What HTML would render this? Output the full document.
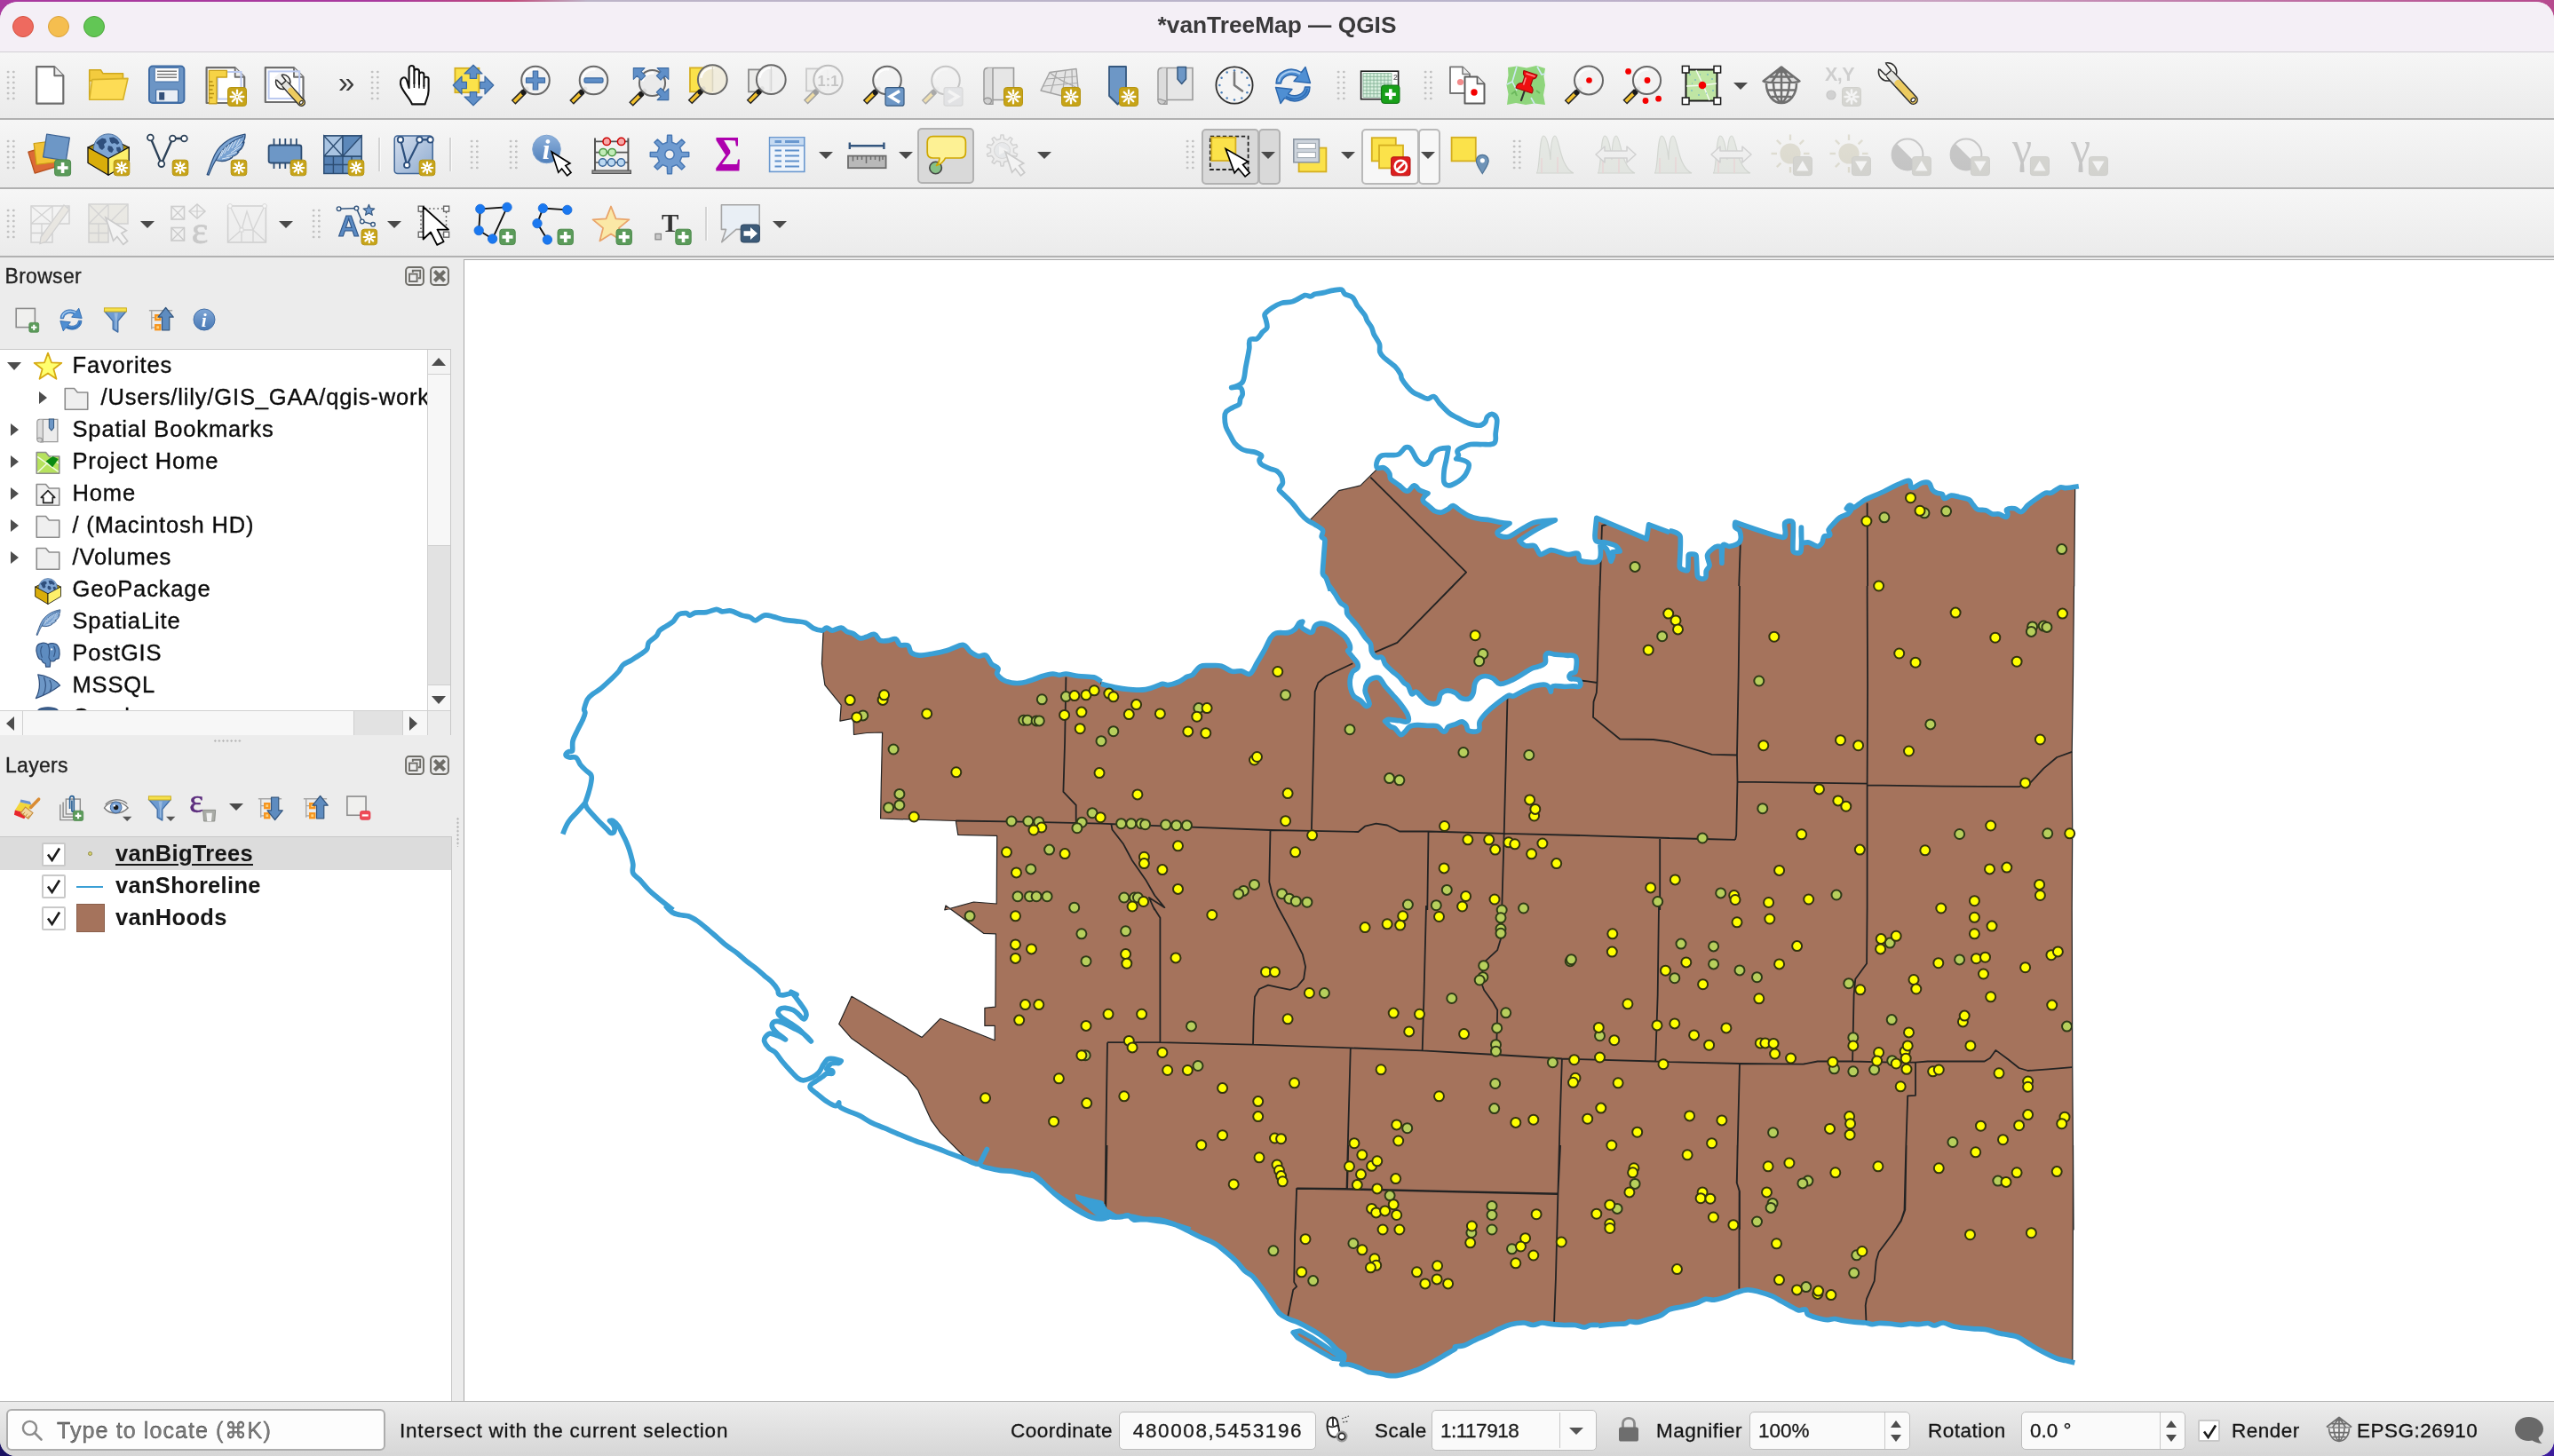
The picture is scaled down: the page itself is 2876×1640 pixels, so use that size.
<!DOCTYPE html>
<html><head><meta charset="utf-8"><title>*vanTreeMap — QGIS</title>
<style>
html,body{margin:0;padding:0;}
body{width:2876px;height:1640px;overflow:hidden;position:relative;font-family:"Liberation Sans",sans-serif;color:#1e1e1e;
 background:linear-gradient(90deg,#a9399f 0,#a9399f 15%,#c04a7a 20%,#bdb4c8 23%,#b9b4cc 60%,#c9a0c0 76%,#b64a8e 100%);}
#deskb{position:absolute;left:0;top:1600px;width:2876px;height:40px;background:linear-gradient(90deg,#1a1262,#2a2380 50%,#3c1c9c);}
#win{will-change:transform;position:absolute;left:0;top:2px;width:2876px;height:1638px;border-radius:20px 20px 18px 18px;overflow:hidden;background:#ececec;}
.abs{position:absolute;}
#title{left:0;top:0;width:2876px;height:56px;background:#f4eff6;border-bottom:1px solid #d2cfd4;}
#title .t{position:absolute;left:0;width:2876px;top:11px;text-align:center;font-weight:bold;font-size:26.3px;color:#3a393b}
.tl{position:absolute;top:16px;width:22px;height:22px;border-radius:50%;border:1px solid;}
.tbrow{left:0;width:2876px;background:linear-gradient(#f6f6f6,#ebebeb);border-bottom:2px solid #b1b1b1;}
.ic{position:absolute;width:48px;height:48px;}
.ic svg{width:48px;height:48px;display:block;overflow:visible}
.hd{position:absolute;width:12.4px;height:36px;background-image:radial-gradient(circle,#c2c2c2 1.2px,transparent 1.7px);background-size:6.2px 6px;}
.arr{position:absolute;width:0;height:0;border-left:8px solid transparent;border-right:8px solid transparent;border-top:8px solid #4a4a4a;}
.sep{position:absolute;width:2px;height:38px;background:#d4d4d4;border-right:1px solid #fafafa}
.btnon{position:absolute;border:2px solid #b2b2b2;border-radius:5px;background:#d9d9d9;}
.btnwh{position:absolute;border:2px solid #b9b9b9;border-radius:5px;background:#f7f7f7;}
.ptitle{position:absolute;font-size:21.5px;color:#222;-webkit-text-stroke:.3px #222}
.tree{position:absolute;background:#fff;overflow:hidden;}
.trow{position:absolute;left:0;height:36px;line-height:36px;font-size:25.5px;white-space:nowrap;color:#0c0c0c;-webkit-text-stroke:.35px #0c0c0c}
.tri{position:absolute;width:0;height:0;}
.tri.r{border-top:7.5px solid transparent;border-bottom:7.5px solid transparent;border-left:9px solid #4d4d4d;}
.tri.d{border-left:8px solid transparent;border-right:8px solid transparent;border-top:9px solid #4d4d4d;}
.lrow{position:absolute;left:0;width:508px;height:36px;}
.lrow b{position:absolute;left:130px;top:0;line-height:37px;font-size:25.5px;color:#161616;letter-spacing:.3px}
.cb{position:absolute;width:23px;height:23px;border:2px solid #c9c9c9;background:#fff;border-radius:2px;}
.cb svg{position:absolute;left:1px;top:1px;width:21px;height:21px}
#status{left:0;top:1576px;width:2876px;height:62px;background:linear-gradient(#ececec,#d6d6d6);border-top:1px solid #b4b4b4;font-size:22.5px;}
#status .lb{position:absolute;top:20px;white-space:nowrap;color:#141414;-webkit-text-stroke:.3px #141414}
.fld{position:absolute;top:11px;height:43px;border:1.5px solid #bdbdbd;border-radius:5px;background:#fafafa;box-sizing:border-box;font-size:22.5px;line-height:42px;white-space:nowrap;color:#1a1a1a;-webkit-text-stroke:.3px #1a1a1a}
</style></head><body>
<div id="deskb"></div>
<div id="win">
<div class="abs" style="left:0;top:-2px;width:2876px;height:1640px">
<div id="title" class="abs" style="top:2px"><div class="t">*vanTreeMap — QGIS</div><div class="tl" style="left:14px;top:16px;background:#ee6a5f;border-color:#d5513f"></div><div class="tl" style="left:54px;top:16px;background:#f5be4f;border-color:#d9a13b"></div><div class="tl" style="left:94px;top:16px;background:#62c655;border-color:#4ba53a"></div></div>
<div class="tbrow abs" style="top:59px;height:74.3px"></div>
<div class="tbrow abs" style="top:135.3px;height:76px"></div>
<div class="tbrow abs" style="top:213.3px;height:74.5px"></div>
<div class="hd" style="left:5.8px;top:78px"></div><div class="hd" style="left:5.8px;top:156px"></div><div class="hd" style="left:5.8px;top:234px"></div>
<div class="ic" style="left:32.0px;top:72.0px;width:48px;height:48px"><svg viewBox="0 0 48 48" style="width:48px;height:48px"><path d="M9.2 3.2H29.299999999999997L39.3 13.2V44.6H9.2Z" fill="#fff" stroke="#6e6e6e" stroke-width="2.2" stroke-linejoin="round"/><path d="M29.299999999999997 3.2V13.2H39.3" fill="#ededed" stroke="#6e6e6e" stroke-width="1.87" stroke-linejoin="round"/></svg></div>
<div class="ic" style="left:97.6px;top:72.0px;width:48px;height:48px"><svg viewBox="0 0 48 48" style="width:48px;height:48px"><path d="M2.7 40V6.8H15.5L18 10.8H40.5V19H2.7Z" fill="#f3cb3e" stroke="#cfa81d" stroke-width="1.6" stroke-linejoin="round"/><path d="M2.7 40.2L5.8 17.6L46 16.4L40.6 40.2Z" fill="#fddc55" stroke="#d6b128" stroke-width="1.6" stroke-linejoin="round"/></svg></div>
<div class="ic" style="left:164.0px;top:72.0px;width:48px;height:48px"><svg viewBox="0 0 48 48" style="width:48px;height:48px"><rect x="4" y="2.6" width="39.4" height="41.4" rx="4" fill="#6c95c5" stroke="#3f6ca4" stroke-width="2"/><rect x="10.2" y="4.4" width="27.6" height="15.6" rx="1.2" fill="#fbfbfb" stroke="#3f6ca4" stroke-width="1"/><path d="M13 8.3H35M13 11.8H35M13 15.3H35" stroke="#7c7c7c" stroke-width="1.6"/><rect x="11.6" y="29" width="25" height="14" rx="1" fill="#e9eef5" stroke="#3f6ca4" stroke-width="1.2"/><rect x="15.2" y="32" width="6" height="8.6" fill="#33507a"/></svg></div>
<div class="ic" style="left:230.4px;top:72.0px;width:48px;height:48px"><svg viewBox="0 0 48 48" style="width:48px;height:48px"><path d="M2.6 4.2H34.7L45.2 14.7V44H2.6Z" fill="#fff" stroke="#6e6e6e" stroke-width="2.2" stroke-linejoin="round"/><path d="M34.7 4.2V14.7H45.2" fill="#ededed" stroke="#6e6e6e" stroke-width="1.87" stroke-linejoin="round"/><rect x="15" y="9" width="26.5" height="30.5" fill="none" stroke="#bccaf0" stroke-width="2"/><path d="M5.4 7.4H25.4V15H14V44.8H5.4Z" fill="#f6d346" stroke="#c9a21b" stroke-width="1.4" stroke-linejoin="round"/><path d="M5.4 20H9.5M5.4 24.5H11M5.4 29H9.5M5.4 33.5H11M5.4 38H9.5" stroke="#b08c10" stroke-width="1.3"/><g opacity="1"><rect x="26.5" y="26.5" width="21" height="21" rx="3.2" fill="#c7a418" stroke="#b59412" stroke-width="1"/><path d="M40.40 37.00L44.40 37.00M39.40 39.40L42.23 42.23M37.00 40.40L37.00 44.40M34.60 39.40L31.77 42.23M33.60 37.00L29.60 37.00M34.60 34.60L31.77 31.77M37.00 33.60L37.00 29.60M39.40 34.60L42.23 31.77" stroke="#fff" stroke-width="2.3" stroke-linecap="round" fill="none"/><circle cx="37.0" cy="37.0" r="2.6" fill="#fff"/><circle cx="37.0" cy="37.0" r="1.1" fill="#c7a418"/></g></svg></div>
<div class="ic" style="left:296.8px;top:72.0px;width:48px;height:48px"><svg viewBox="0 0 48 48" style="width:48px;height:48px"><path d="M1.8 4.2H34.0L44.5 14.7V43H1.8Z" fill="#fff" stroke="#6e6e6e" stroke-width="2.2" stroke-linejoin="round"/><path d="M34.0 4.2V14.7H44.5" fill="#ededed" stroke="#6e6e6e" stroke-width="1.87" stroke-linejoin="round"/><rect x="5.6" y="8.4" width="34.6" height="30.6" fill="none" stroke="#bccaf0" stroke-width="2"/><circle cx="21.7" cy="20.3" r="8.2" fill="#f6f6f2" stroke="#2e2e2e" stroke-width="1.5"/><path d="M24.9 23.9L42.4 43.4" stroke="#2e2e2e" stroke-width="9.2" stroke-linecap="round"/><path d="M23.6 22.4L30.4 30.0" stroke="#e4e4df" stroke-width="6.4" stroke-linecap="round"/><path d="M30.4 30.0L42.4 43.4" stroke="#edcb60" stroke-width="6.4" stroke-linecap="round"/><ellipse cx="42.3" cy="43.3" rx="2.2" ry="1.6" fill="#fff" stroke="#2e2e2e" stroke-width="1.2" transform="rotate(-40 42.4 43.4)"/><path d="M11.8 15.4L20.0 23.4L25.0 19.0L18.0 9.9Z" fill="#f2f2f2"/><path d="M14.4 17.8L20.0 23.4L25.0 19.0L20.1 12.7" fill="none" stroke="#2e2e2e" stroke-width="1.5" stroke-linejoin="round"/></svg></div>
<div class="ic" style="left:442.7px;top:72.0px;width:48px;height:48px"><svg viewBox="0 0 48 48" style="width:48px;height:48px"><path d="M21 45.4C19 40 13 34 9 26C7 21.5 8 16.4 11 15.4C13.5 14.8 15 17 15.6 20L17.6 27V5C17.6 .9 23.4 .9 23.4 5V22V8.5C23.4 5 29 5 29 8.5V23V12C29 8.6 34.4 8.6 34.4 12V25V17C34.4 14 39.6 14 39.6 17V30C39.6 37 36.6 41 35.6 45.4Z" fill="#fff" stroke="#111" stroke-width="2.1" stroke-linejoin="round"/><path d="M23.4 21V27M29 22V27.5M34.4 24V28" stroke="#111" stroke-width="1.5"/></svg></div>
<div class="ic" style="left:508.6px;top:72.0px;width:48px;height:48px"><svg viewBox="0 0 48 48" style="width:48px;height:48px"><rect x="3.4" y="4.8" width="27" height="27.4" fill="#fbe24a" stroke="#d4ae20" stroke-width="1.8"/><path d="M3.7 -7.6 V-13.0 H10 L0 -22.8 L-10 -13.0 H-3.7 V-7.6Z" transform="translate(24 24) rotate(0)" fill="#5f8fc8" stroke="#3d6ba3" stroke-width="1.2" stroke-linejoin="round"/><path d="M3.7 -7.6 V-13.0 H10 L0 -22.8 L-10 -13.0 H-3.7 V-7.6Z" transform="translate(24 24) rotate(90)" fill="#5f8fc8" stroke="#3d6ba3" stroke-width="1.2" stroke-linejoin="round"/><path d="M3.7 -7.6 V-13.0 H10 L0 -22.8 L-10 -13.0 H-3.7 V-7.6Z" transform="translate(24 24) rotate(180)" fill="#5f8fc8" stroke="#3d6ba3" stroke-width="1.2" stroke-linejoin="round"/><path d="M3.7 -7.6 V-13.0 H10 L0 -22.8 L-10 -13.0 H-3.7 V-7.6Z" transform="translate(24 24) rotate(270)" fill="#5f8fc8" stroke="#3d6ba3" stroke-width="1.2" stroke-linejoin="round"/></svg></div>
<div class="ic" style="left:573.7px;top:72.0px;width:48px;height:48px"><svg viewBox="0 0 48 48" style="width:48px;height:48px"><g opacity="1"><path d="M16.6 30.9L4.1 43.4" stroke="#222" stroke-width="6.6" stroke-linecap="butt"/><path d="M16.0 31.5L5.0 42.5" stroke="#f2c12e" stroke-width="3.6" stroke-linecap="butt"/><path d="M19.3 28.2L15.1 32.4" stroke="#1a1a1a" stroke-width="5.2" stroke-linecap="round"/><circle cx="29" cy="18.5" r="15.8" fill="#f2f2f2" fill-opacity=".93" stroke="#686868" stroke-width="2"/><path d="M16.7 16.5A12.3 12.3 0 0 1 31.0 6.2" stroke="#fff" stroke-width="2.5" fill="none" opacity=".9"/></g><path d="M18.5 15.8H26.3V8.0H31.7V15.8H39.5V21.2H31.7V29.0H26.3V21.2H18.5Z" fill="#5f8fc8" stroke="#3d6ba3" stroke-width="1.2" stroke-linejoin="round"/></svg></div>
<div class="ic" style="left:638.7px;top:72.0px;width:48px;height:48px"><svg viewBox="0 0 48 48" style="width:48px;height:48px"><g opacity="1"><path d="M17.1 30.9L4.6 43.4" stroke="#222" stroke-width="6.6" stroke-linecap="butt"/><path d="M16.5 31.5L5.5 42.5" stroke="#f2c12e" stroke-width="3.6" stroke-linecap="butt"/><path d="M19.8 28.2L15.6 32.4" stroke="#1a1a1a" stroke-width="5.2" stroke-linecap="round"/><circle cx="29.5" cy="18.5" r="15.8" fill="#f2f2f2" fill-opacity=".93" stroke="#686868" stroke-width="2"/><path d="M17.2 16.5A12.3 12.3 0 0 1 31.5 6.2" stroke="#fff" stroke-width="2.5" fill="none" opacity=".9"/></g><rect x="19" y="15.8" width="21" height="5.4" rx="1.4" fill="#5f8fc8" stroke="#3d6ba3" stroke-width="1.2"/></svg></div>
<div class="ic" style="left:706.3px;top:72.0px;width:48px;height:48px"><svg viewBox="0 0 48 48" style="width:48px;height:48px"><g opacity="1"><path d="M17.0 33.0L4.5 45.5" stroke="#222" stroke-width="6.6" stroke-linecap="butt"/><path d="M16.4 33.6L5.4 44.6" stroke="#f2c12e" stroke-width="3.6" stroke-linecap="butt"/><path d="M19.7 30.3L15.5 34.5" stroke="#1a1a1a" stroke-width="5.2" stroke-linecap="round"/><circle cx="28.5" cy="21.5" r="14.6" fill="#e9e9e9" fill-opacity=".93" stroke="#686868" stroke-width="2"/><path d="M17.4 19.5A11.1 11.1 0 0 1 30.5 10.4" stroke="#fff" stroke-width="2.5" fill="none" opacity=".9"/></g><path d="M7.3 4.6L20.0 4.6L16.0 8.6L20.8 13.4L16.1 18.1L11.3 13.3L7.3 17.3Z" fill="#5f8fc8" stroke="#3d6ba3" stroke-width="1.1" stroke-linejoin="round"/><path d="M46.8 4.6L34.1 4.6L38.1 8.6L33.3 13.4L38.0 18.1L42.8 13.3L46.8 17.3Z" fill="#5f8fc8" stroke="#3d6ba3" stroke-width="1.1" stroke-linejoin="round"/><path d="M46.8 40.6L34.1 40.6L38.1 36.6L33.3 31.8L38.0 27.1L42.8 31.9L46.8 27.9Z" fill="#5f8fc8" stroke="#3d6ba3" stroke-width="1.1" stroke-linejoin="round"/></svg></div>
<div class="ic" style="left:771.5px;top:72.0px;width:48px;height:48px"><svg viewBox="0 0 48 48" style="width:48px;height:48px"><rect x="5" y="4.4" width="24" height="27" fill="#fbe24a" stroke="#d4ae20" stroke-width="1.8"/><g opacity="1"><path d="M17.5 30.5L5.0 43.0" stroke="#222" stroke-width="6.6" stroke-linecap="butt"/><path d="M16.9 31.1L5.9 42.1" stroke="#f2c12e" stroke-width="3.6" stroke-linecap="butt"/><path d="M20.2 27.8L16.0 32.0" stroke="#1a1a1a" stroke-width="5.2" stroke-linecap="round"/><circle cx="30.3" cy="17.7" r="16.4" fill="#f0ecdc" fill-opacity=".93" stroke="#686868" stroke-width="2"/><path d="M17.4 15.7A12.9 12.9 0 0 1 32.3 4.8" stroke="#fff" stroke-width="2.5" fill="none" opacity=".9"/></g><path d="M30.5 2.5V31" stroke="#d9d4c0" stroke-width="1.5"/></svg></div>
<div class="ic" style="left:838.0px;top:72.0px;width:48px;height:48px"><svg viewBox="0 0 48 48" style="width:48px;height:48px"><rect x="5" y="6.4" width="24" height="25" fill="#ebebe9" stroke="#8a8a8a" stroke-width="1.8"/><g opacity="1"><path d="M17.5 30.5L5.0 43.0" stroke="#222" stroke-width="6.6" stroke-linecap="butt"/><path d="M16.9 31.1L5.9 42.1" stroke="#f2c12e" stroke-width="3.6" stroke-linecap="butt"/><path d="M20.2 27.8L16.0 32.0" stroke="#1a1a1a" stroke-width="5.2" stroke-linecap="round"/><circle cx="30.3" cy="17.7" r="16.4" fill="#f0f0f0" fill-opacity=".93" stroke="#686868" stroke-width="2"/><path d="M17.4 15.7A12.9 12.9 0 0 1 32.3 4.8" stroke="#fff" stroke-width="2.5" fill="none" opacity=".9"/></g><path d="M30.5 2.5V31" stroke="#d6d6d6" stroke-width="1.5"/></svg></div>
<div class="ic" style="left:903.0px;top:72.0px;width:48px;height:48px"><svg viewBox="0 0 48 48" style="width:48px;height:48px"><g opacity=".38"><rect x="5" y="5.4" width="24" height="25" fill="#ebebe9" stroke="#8a8a8a" stroke-width="1.8"/><g opacity="1"><path d="M16.8 30.7L4.3 43.2" stroke="#222" stroke-width="6.6" stroke-linecap="butt"/><path d="M16.2 31.3L5.2 42.3" stroke="#f2c12e" stroke-width="3.6" stroke-linecap="butt"/><path d="M19.5 28.0L15.3 32.2" stroke="#1a1a1a" stroke-width="5.2" stroke-linecap="round"/><circle cx="29.5" cy="18" r="16.2" fill="#f2f2f2" fill-opacity=".93" stroke="#686868" stroke-width="2"/><path d="M16.8 16.0A12.7 12.7 0 0 1 31.5 5.3" stroke="#fff" stroke-width="2.5" fill="none" opacity=".9"/></g><text x="29.5" y="24.5" font-family="Liberation Sans,sans-serif" font-weight="bold" font-size="16.5" text-anchor="middle" fill="#7d7d7d">1:1</text></g></svg></div>
<div class="ic" style="left:969.5px;top:72.0px;width:48px;height:48px"><svg viewBox="0 0 48 48" style="width:48px;height:48px"><g opacity="1"><path d="M16.6 30.9L4.1 43.4" stroke="#222" stroke-width="6.6" stroke-linecap="butt"/><path d="M16.0 31.5L5.0 42.5" stroke="#f2c12e" stroke-width="3.6" stroke-linecap="butt"/><path d="M19.3 28.2L15.1 32.4" stroke="#1a1a1a" stroke-width="5.2" stroke-linecap="round"/><circle cx="29" cy="18.5" r="15.8" fill="#f2f2f2" fill-opacity=".93" stroke="#686868" stroke-width="2"/><path d="M16.7 16.5A12.3 12.3 0 0 1 31.0 6.2" stroke="#fff" stroke-width="2.5" fill="none" opacity=".9"/></g><g opacity="1"><rect x="27" y="26.6" width="21" height="20.6" rx="2.4" fill="#6d97c6" stroke="#35587f" stroke-width="1.2"/><path d="M43 30.5L32.5 36.8L43 43.2" fill="none" stroke="#fff" stroke-width="3.6"/></g></svg></div>
<div class="ic" style="left:1036.0px;top:72.0px;width:48px;height:48px"><svg viewBox="0 0 48 48" style="width:48px;height:48px"><g opacity=".32"><g opacity="1"><path d="M16.6 30.9L4.1 43.4" stroke="#222" stroke-width="6.6" stroke-linecap="butt"/><path d="M16.0 31.5L5.0 42.5" stroke="#f2c12e" stroke-width="3.6" stroke-linecap="butt"/><path d="M19.3 28.2L15.1 32.4" stroke="#1a1a1a" stroke-width="5.2" stroke-linecap="round"/><circle cx="29" cy="18.5" r="15.8" fill="#f2f2f2" fill-opacity=".93" stroke="#686868" stroke-width="2"/><path d="M16.7 16.5A12.3 12.3 0 0 1 31.0 6.2" stroke="#fff" stroke-width="2.5" fill="none" opacity=".9"/></g><g opacity="1"><rect x="27" y="26.6" width="21" height="20.6" rx="2.4" fill="#c9ccd2" stroke="#aaa" stroke-width="1.2"/><path d="M32 30.5L42.5 36.8L32 43.2" fill="none" stroke="#fff" stroke-width="3.6"/></g></g></svg></div>
<div class="ic" style="left:1103.6px;top:72.0px;width:48px;height:48px"><svg viewBox="0 0 48 48" style="width:48px;height:48px"><path d="M8 4.5H37.5V40.5H12.5" fill="#e6e6e6" stroke="#9a9a9a" stroke-width="1.6"/><path d="M8.5 4.5C5 4.5 4 6 4 9V41C4 44 6 45.2 9 45.2H14V4.8" fill="#dcdcdc" stroke="#9a9a9a" stroke-width="1.5"/><path d="M4 41C4 37 12 37.5 12.5 41C12.6 43.5 11 45.2 9 45.2" fill="#cfcfcf" stroke="#9a9a9a" stroke-width="1.4"/><g opacity="1"><rect x="26.5" y="26.5" width="21" height="21" rx="3.2" fill="#c7a418" stroke="#b59412" stroke-width="1"/><path d="M40.40 37.00L44.40 37.00M39.40 39.40L42.23 42.23M37.00 40.40L37.00 44.40M34.60 39.40L31.77 42.23M33.60 37.00L29.60 37.00M34.60 34.60L31.77 31.77M37.00 33.60L37.00 29.60M39.40 34.60L42.23 31.77" stroke="#fff" stroke-width="2.3" stroke-linecap="round" fill="none"/><circle cx="37.0" cy="37.0" r="2.6" fill="#fff"/><circle cx="37.0" cy="37.0" r="1.1" fill="#c7a418"/></g></svg></div>
<div class="ic" style="left:1168.7px;top:72.0px;width:48px;height:48px"><svg viewBox="0 0 48 48" style="width:48px;height:48px"><path d="M3 30L13 9.5L43 5.5L45 27.5L27 36Z" fill="#e4e4e4" stroke="#a2a2a2" stroke-width="1.4" stroke-linejoin="round"/><path d="M9.5 17L44 14M6 25L44.5 21.5M21 8.5L14 32.5M31 7L27 35.5M38 6.3L38.5 30M13 9.5C22 18 30 20 45 27.5" stroke="#a8a8a8" stroke-width="1.2" fill="none"/><g opacity="1"><rect x="26.5" y="26.5" width="21" height="21" rx="3.2" fill="#c7a418" stroke="#b59412" stroke-width="1"/><path d="M40.40 37.00L44.40 37.00M39.40 39.40L42.23 42.23M37.00 40.40L37.00 44.40M34.60 39.40L31.77 42.23M33.60 37.00L29.60 37.00M34.60 34.60L31.77 31.77M37.00 33.60L37.00 29.60M39.40 34.60L42.23 31.77" stroke="#fff" stroke-width="2.3" stroke-linecap="round" fill="none"/><circle cx="37.0" cy="37.0" r="2.6" fill="#fff"/><circle cx="37.0" cy="37.0" r="1.1" fill="#c7a418"/></g></svg></div>
<div class="ic" style="left:1233.5px;top:72.0px;width:48px;height:48px"><svg viewBox="0 0 48 48" style="width:48px;height:48px"><path d="M15 3H34V36L24.5 45.5L15 36Z" fill="#6d97c6" stroke="#35587f" stroke-width="1.8" stroke-linejoin="round"/><g opacity="1"><rect x="26.5" y="26.5" width="21" height="21" rx="3.2" fill="#c7a418" stroke="#b59412" stroke-width="1"/><path d="M40.40 37.00L44.40 37.00M39.40 39.40L42.23 42.23M37.00 40.40L37.00 44.40M34.60 39.40L31.77 42.23M33.60 37.00L29.60 37.00M34.60 34.60L31.77 31.77M37.00 33.60L37.00 29.60M39.40 34.60L42.23 31.77" stroke="#fff" stroke-width="2.3" stroke-linecap="round" fill="none"/><circle cx="37.0" cy="37.0" r="2.6" fill="#fff"/><circle cx="37.0" cy="37.0" r="1.1" fill="#c7a418"/></g></svg></div>
<div class="ic" style="left:1300.0px;top:72.0px;width:48px;height:48px"><svg viewBox="0 0 48 48" style="width:48px;height:48px"><path d="M8 4.5H43V40.5H12.5" fill="#e6e6e6" stroke="#9a9a9a" stroke-width="1.6"/><path d="M8.5 4.5C5 4.5 4 6 4 9V41C4 44 6 45.2 9 45.2H14V4.8" fill="#dcdcdc" stroke="#9a9a9a" stroke-width="1.5"/><path d="M4 41C4 37 12 43 12.5 41C12.6 43.5 11 45.2 9 45.2" fill="#cfcfcf" stroke="#9a9a9a" stroke-width="1.4"/><path d="M26 3.4H35.5V17L30.7 22.5L26 17Z" fill="#6d97c6" stroke="#35587f" stroke-width="1.5" stroke-linejoin="round"/></svg></div>
<div class="ic" style="left:1365.7px;top:72.0px;width:48px;height:48px"><svg viewBox="0 0 48 48" style="width:48px;height:48px"><circle cx="24" cy="24" r="20.6" fill="#f4f4f4" stroke="#2f2f2f" stroke-width="1.8"/><circle cx="40.6" cy="24.0" r="1.25" fill="#4c7fb8"/><circle cx="38.4" cy="32.3" r="1.25" fill="#4c7fb8"/><circle cx="32.3" cy="38.4" r="1.25" fill="#4c7fb8"/><circle cx="24.0" cy="40.6" r="1.25" fill="#4c7fb8"/><circle cx="15.7" cy="38.4" r="1.25" fill="#4c7fb8"/><circle cx="9.6" cy="32.3" r="1.25" fill="#4c7fb8"/><circle cx="7.4" cy="24.0" r="1.25" fill="#4c7fb8"/><circle cx="9.6" cy="15.7" r="1.25" fill="#4c7fb8"/><circle cx="15.7" cy="9.6" r="1.25" fill="#4c7fb8"/><circle cx="24.0" cy="7.4" r="1.25" fill="#4c7fb8"/><circle cx="32.3" cy="9.6" r="1.25" fill="#4c7fb8"/><circle cx="38.4" cy="15.7" r="1.25" fill="#4c7fb8"/><path d="M24 9.5V24L33 30.5" fill="none" stroke="#7a7a7a" stroke-width="2.6" stroke-linecap="round" stroke-linejoin="round"/></svg></div>
<div class="ic" style="left:1431.6px;top:72.0px;width:48px;height:48px"><svg viewBox="0 0 48 48" style="width:48px;height:48px"><path d="M5 22C5 9 20 1.5 33.5 9.5L38 3.5L43.5 21.5L25 19.5L29.5 14.2C20.5 9.5 11.5 14 10.5 22Z" fill="#4f8fd3" stroke="#2c67ad" stroke-width="1.4" stroke-linejoin="round"/><path d="M43 26C43 39 28 46.5 14.5 38.5L10 44.5L4.5 26.5L23 28.5L18.5 33.8C27.5 38.5 36.5 34 37.5 26Z" fill="#4f8fd3" stroke="#2c67ad" stroke-width="1.4" stroke-linejoin="round"/><path d="M8 20C9 11 21 5 32 11" stroke="#a9ccf0" stroke-width="2" fill="none"/><path d="M40 28C39 37 27 43 16 37" stroke="#2f6fb8" stroke-width="2" fill="none"/></svg></div>
<div class="ic" style="left:1526.8px;top:72.0px;width:48px;height:48px"><svg viewBox="0 0 48 48" style="width:48px;height:48px"><rect x="5.6" y="8.2" width="42" height="31.5" fill="#fdfdfd" stroke="#1d1d1d" stroke-width="1.6"/><rect x="8" y="10.5" width="32" height="27" fill="#d9f0df"/><path d="M8.0 10.5V37.5M12.0 10.5V37.5M16.0 10.5V37.5M20.0 10.5V37.5M24.0 10.5V37.5M28.0 10.5V37.5M32.0 10.5V37.5M36.0 10.5V37.5M40.0 10.5V37.5M8 10.5H40M8 14.4H40M8 18.2H40M8 22.1H40M8 25.9H40M8 29.8H40M8 33.7H40M8 37.5H40" stroke="#7fae92" stroke-width=".8"/><text x="42" y="18" font-size="9" font-family="Liberation Sans,sans-serif" font-weight="bold" fill="#777">2</text><rect x="28.6" y="24" width="20.4" height="20.4" rx="3" fill="#18a018" stroke="#0d6e10" stroke-width="1"/><path d="M32.8 34.2H44.8M38.8 28.200000000000003V40.2" stroke="#fff" stroke-width="3.6" fill="none"/></svg></div>
<div class="ic" style="left:1628.4px;top:72.0px;width:48px;height:48px"><svg viewBox="0 0 48 48" style="width:48px;height:48px"><path d="M5 3.4H19L27 11.4V33H5Z" fill="#fff" stroke="#757575" stroke-width="1.8" stroke-linejoin="round"/><path d="M19 3.4V11.4H27" fill="#ededed" stroke="#757575" stroke-width="1.53" stroke-linejoin="round"/><circle cx="16.5" cy="20.5" r="3.6" fill="#f38b8b"/><path d="M21.5 14.4H35.5L43.5 22.4V44.6H21.5Z" fill="#fff" stroke="#5c5c5c" stroke-width="2" stroke-linejoin="round"/><path d="M35.5 14.4V22.4H43.5" fill="#ededed" stroke="#5c5c5c" stroke-width="1.70" stroke-linejoin="round"/><circle cx="32" cy="32" r="3.7" fill="#f30000"/></svg></div>
<div class="ic" style="left:1694.3px;top:72.0px;width:48px;height:48px"><svg viewBox="0 0 48 48" style="width:48px;height:48px"><path d="M4 4L14 2.5L25 4.5L36 2L46 5L44.5 14L46 24L44 35L46 46L34 44.5L24 46L13 44L3 46L4.5 34L2.5 24L4.5 13Z" fill="#8fd57c"/><path d="M14 3L9 20L14 30M9 20L3 23M37 3L42 12L46 11M30 38L34 45" stroke="#cfe9f5" stroke-width="1.6" fill="none"/><path d="M8 34L12 31L14 36M36 30L40 33M30 11L34 13" stroke="#6bb85c" stroke-width="2" fill="none"/><path d="M22.5 31L19 41" stroke="#333" stroke-width="2.2" stroke-linecap="round"/><path d="M22 7.5L37 12.5C36 16 33.5 17 32 17L29.5 24.5C33 27 32.5 31 31 33L13 27C13.5 23.5 16.5 21 20.5 21.5L23 14C21.5 12.5 21 10 22 7.5Z" fill="#ee1010" stroke="#9c0606" stroke-width="1.1" stroke-linejoin="round"/><path d="M25 11L34 14M24 16L21.8 23" stroke="#ff8a8a" stroke-width="1.6" fill="none" stroke-linecap="round"/></svg></div>
<div class="ic" style="left:1758.7px;top:72.0px;width:48px;height:48px"><svg viewBox="0 0 48 48" style="width:48px;height:48px"><g opacity="1"><path d="M17.5 31.0L5.0 43.5" stroke="#222" stroke-width="6.6" stroke-linecap="butt"/><path d="M16.9 31.6L5.9 42.6" stroke="#f2c12e" stroke-width="3.6" stroke-linecap="butt"/><path d="M20.2 28.3L16.0 32.5" stroke="#1a1a1a" stroke-width="5.2" stroke-linecap="round"/><circle cx="30" cy="18.5" r="16" fill="#f2f2f2" fill-opacity=".93" stroke="#686868" stroke-width="2"/><path d="M17.5 16.5A12.5 12.5 0 0 1 32.0 6.0" stroke="#fff" stroke-width="2.5" fill="none" opacity=".9"/></g><circle cx="30.5" cy="18.5" r="3.3" fill="#f40000"/></svg></div>
<div class="ic" style="left:1824.9px;top:72.0px;width:48px;height:48px"><svg viewBox="0 0 48 48" style="width:48px;height:48px"><g opacity="1"><path d="M17.3 30.7L4.8 43.2" stroke="#222" stroke-width="6.6" stroke-linecap="butt"/><path d="M16.7 31.3L5.7 42.3" stroke="#f2c12e" stroke-width="3.6" stroke-linecap="butt"/><path d="M20.0 28.0L15.8 32.2" stroke="#1a1a1a" stroke-width="5.2" stroke-linecap="round"/><circle cx="29.5" cy="18.5" r="15.6" fill="#f2f2f2" fill-opacity=".93" stroke="#686868" stroke-width="2"/><path d="M17.4 16.5A12.1 12.1 0 0 1 31.5 6.4" stroke="#fff" stroke-width="2.5" fill="none" opacity=".9"/></g><circle cx="30" cy="18.5" r="3.4" fill="#f40000"/><circle cx="8.6" cy="8.4" r="3.4" fill="#f40000"/><circle cx="28" cy="41.5" r="3.4" fill="#f40000"/><circle cx="42.6" cy="39.2" r="3.4" fill="#f40000"/></svg></div>
<div class="ic" style="left:1891.8px;top:72.0px;width:48px;height:48px"><svg viewBox="0 0 48 48" style="width:48px;height:48px"><rect x="6.5" y="6.5" width="35" height="35" fill="#bfe5a4" stroke="#1a1a1a" stroke-width="2"/><path d="M18 7L26 24L33 41M7 25L26 24L41 22" stroke="#f4faf0" stroke-width="1.5" fill="none"/><path d="M10 12h2M16 18h2M12 30h2M20 35h2M30 12h2M35 17h2M36 30h2M29 33h1M22 12h1M13 22h1" stroke="#5aa7c7" stroke-width="1.2"/><circle cx="25" cy="24" r="4.3" fill="#f40000"/><rect x="2.4" y="2.4" width="7.6" height="7.6" fill="#fff" stroke="#1a1a1a" stroke-width="1.5"/><rect x="38" y="2.4" width="7.6" height="7.6" fill="#fff" stroke="#1a1a1a" stroke-width="1.5"/><rect x="2.4" y="38" width="7.6" height="7.6" fill="#fff" stroke="#1a1a1a" stroke-width="1.5"/><rect x="38" y="38" width="7.6" height="7.6" fill="#fff" stroke="#1a1a1a" stroke-width="1.5"/></svg></div>
<div class="ic" style="left:1982.0px;top:72.0px;width:48px;height:48px"><svg viewBox="0 0 48 48" style="width:48px;height:48px"><g fill="none" stroke="#6f6f6f" stroke-width="2.5"><path d="M24 3.5L3.5 19.5C3.5 22 44.5 22 44.5 19.5Z" stroke-linejoin="round" fill="#dedede"/><path d="M24 3.5L13 21M24 3.5L35 21M24 3.5V21M17 9H31M11 14.5H37"/><path d="M7 22C7 35 15 44 24 44C33 44 41 35 41 22" fill="#efefef"/><path d="M24 22V44M15 22C15 32 19 41 24 44M33 22C33 32 29 41 24 44M8.5 29.5H39.5M12.5 37H35.5"/></g></svg></div>
<div class="ic" style="left:2051.7px;top:72.0px;width:48px;height:48px"><svg viewBox="0 0 48 48" style="width:48px;height:48px"><g opacity=".34"><text x="3" y="19" font-size="21.5" font-weight="bold" font-family="Liberation Sans,sans-serif" fill="#8a8a8a" letter-spacing="-.5">X,Y</text><circle cx="10" cy="35" r="5" fill="#9a9a9a" stroke="#7a7a7a" stroke-width="1.2"/><g opacity="1"><rect x="22.5" y="26.5" width="21" height="21" rx="3.2" fill="#a8a89c" stroke="#98988c" stroke-width="1"/><path d="M35.40 37.00L40.40 37.00M34.70 38.70L38.23 42.23M33.00 39.40L33.00 44.40M31.30 38.70L27.77 42.23M30.60 37.00L25.60 37.00M31.30 35.30L27.77 31.77M33.00 34.60L33.00 29.60M34.70 35.30L38.23 31.77" stroke="#fff" stroke-width="2.60" stroke-linecap="round" fill="none"/></g></g></svg></div>
<div class="ic" style="left:2114.3px;top:72.0px;width:48px;height:48px"><svg viewBox="0 0 48 48" style="width:48px;height:48px"><circle cx="11.6" cy="8.9" r="10.2" fill="#f6f6f2" stroke="#2e2e2e" stroke-width="1.5"/><path d="M15.3 13.0L40.5 40.5" stroke="#2e2e2e" stroke-width="10.8" stroke-linecap="round"/><path d="M14.0 11.5L23.5 21.9" stroke="#e4e4df" stroke-width="8" stroke-linecap="round"/><path d="M23.5 21.9L40.5 40.5" stroke="#edcb60" stroke-width="8" stroke-linecap="round"/><ellipse cx="40.4" cy="40.4" rx="2.7" ry="2.0" fill="#fff" stroke="#2e2e2e" stroke-width="1.2" transform="rotate(-40 40.5 40.5)"/><path d="M-0.9 2.9L9.5 12.8L15.7 7.2L6.8 -4.1Z" fill="#f2f2f2"/><path d="M2.4 5.9L9.5 12.8L15.7 7.2L9.4 -0.6" fill="none" stroke="#2e2e2e" stroke-width="1.5" stroke-linejoin="round"/></svg></div>
<div class="abs" style="left:381px;top:74.5px;font-size:33px;line-height:36px;color:#3a3a3a;letter-spacing:-3px;">»</div>
<div class="hd" style="left:415.8px;top:78px"></div><div class="hd" style="left:1503.8px;top:78px"></div><div class="hd" style="left:1601.8px;top:78px"></div><div class="arr" style="left:1952.4px;top:93px"></div>
<div class="btnon" style="left:1033px;top:144px;width:60px;height:59px"></div>
<div class="btnon" style="left:1352.5px;top:144.5px;width:61px;height:59px"></div><div class="btnon" style="left:1417px;top:144.5px;width:21px;height:59px"></div>
<div class="btnwh" style="left:1532.5px;top:144.5px;width:61px;height:59px"></div><div class="btnwh" style="left:1597px;top:144.5px;width:21px;height:59px"></div>
<div class="ic" style="left:32.4px;top:150.0px;width:48px;height:48px"><svg viewBox="0 0 48 48" style="width:48px;height:48px"><rect x="-12.5" y="-12.5" width="25" height="25" transform="translate(15.5 29.5) rotate(-17)" fill="#dc6a36" stroke="#b6501f" stroke-width="1.3" stroke-linejoin="round"/><rect x="-12.0" y="-12.0" width="24" height="24" transform="translate(19.5 22) rotate(-7)" fill="#f2c336" stroke="#c99d14" stroke-width="1.3" stroke-linejoin="round"/><rect x="-13.0" y="-13.0" width="26" height="26" transform="translate(31.5 16) rotate(9)" fill="#6d97c6" stroke="#3f6596" stroke-width="1.3" stroke-linejoin="round"/><rect x="29.6" y="30" width="18" height="18" rx="3" fill="#5b9b5a" stroke="#4d8a4c" stroke-width="1"/><path d="M32.6 39.0H44.6M38.6 33.0V45.0" stroke="#fff" stroke-width="3.6" fill="none"/></svg></div>
<div class="ic" style="left:98.0px;top:150.0px;width:48px;height:48px"><svg viewBox="0 0 48 48" style="width:48px;height:48px"><path d="M1 16L24 4.7L47.2 16L24 28.5Z" fill="#a88a10" stroke="#111" stroke-width="1.2" stroke-linejoin="round"/><circle cx="24" cy="17.5" r="16.6" fill="#7fa6d4" stroke="#4a6f9e" stroke-width="1"/><path d="M13 8L17 5.5L21 6.5L22 10L19 12.5L20 16L17 19L14 17L12.5 13L10 11ZM25 5L30 4.5L34 7L36.5 11L34 13L31 11L28 12L26 9.5ZM24 14L28 15L30 18.5L28 22L25 21L23 18ZM33 16L37 15.5L38.5 19L36 22L33.5 20Z" fill="#2f4f7d"/><path d="M1 16L24 28.5V47.3L1 33.5Z" fill="#d9ad0a" stroke="#111" stroke-width="1.3" stroke-linejoin="round"/><path d="M47.2 16L24 28.5V47.3L47.2 33.5Z" fill="#fdf06a" stroke="#111" stroke-width="1.3" stroke-linejoin="round"/><g opacity="1"><rect x="30.2" y="30.2" width="17.6" height="17.6" rx="3.2" fill="#c7a418" stroke="#b59412" stroke-width="1"/><path d="M41.01 39.00L45.20 39.00M40.42 40.42L43.39 43.39M39.00 41.01L39.00 45.20M37.58 40.42L34.61 43.39M36.99 39.00L32.80 39.00M37.58 37.58L34.61 34.61M39.00 36.99L39.00 32.80M40.42 37.58L43.39 34.61" stroke="#fff" stroke-width="2.18" stroke-linecap="round" fill="none"/></g></svg></div>
<div class="ic" style="left:164.0px;top:150.0px;width:48px;height:48px"><svg viewBox="0 0 48 48" style="width:48px;height:48px"><path d="M5.4 5L17.8 34.6L30.4 6L43.4 6" fill="none" stroke="#2c4158" stroke-width="2.4" stroke-linejoin="round"/><circle cx="5.4" cy="5" r="3.4" fill="#fff" stroke="#2c4158" stroke-width="1.8"/><circle cx="17.8" cy="34.6" r="3.4" fill="#fff" stroke="#2c4158" stroke-width="1.8"/><circle cx="30.4" cy="6" r="3.4" fill="#fff" stroke="#2c4158" stroke-width="1.8"/><circle cx="43.4" cy="6" r="3.4" fill="#fff" stroke="#2c4158" stroke-width="1.8"/><g opacity="1"><rect x="30.2" y="30.2" width="17.6" height="17.6" rx="3.2" fill="#c7a418" stroke="#b59412" stroke-width="1"/><path d="M41.01 39.00L45.20 39.00M40.42 40.42L43.39 43.39M39.00 41.01L39.00 45.20M37.58 40.42L34.61 43.39M36.99 39.00L32.80 39.00M37.58 37.58L34.61 34.61M39.00 36.99L39.00 32.80M40.42 37.58L43.39 34.61" stroke="#fff" stroke-width="2.18" stroke-linecap="round" fill="none"/></g></svg></div>
<div class="ic" style="left:229.6px;top:150.0px;width:48px;height:48px"><svg viewBox="0 0 48 48" style="width:48px;height:48px"><path d="M46 1.2C30 4 18 12 12 24C8.5 31 6.5 38 3.2 46.6L5 47.2C8 40 10 35 13 30.5C20 32.5 27 31 31.5 27.5L29 27C33 26.5 37 24 39 21L36.5 21C40.5 19.5 44 15 45 10L43 11C45.5 8 46.3 4.5 46 1.2Z" fill="#7aa3d2" stroke="#2c4f7d" stroke-width="1.3" stroke-linejoin="round"/><path d="M44 3.5C30 9 19 18 13 30.5" fill="none" stroke="#2c4f7d" stroke-width="1.1"/><path d="M40 6.5L36 14M36 8L31 17M32 10L26.5 20M28 12.5L22.5 23M24 15.5L19 26M20.5 19L16.5 28.5M43 9L34 18M41 15L30 22M37 21L25 26M31 26.5L20 29" stroke="#e3edf8" stroke-width=".9" fill="none"/><g opacity="1"><rect x="30.2" y="30.2" width="17.6" height="17.6" rx="3.2" fill="#c7a418" stroke="#b59412" stroke-width="1"/><path d="M41.01 39.00L45.20 39.00M40.42 40.42L43.39 43.39M39.00 41.01L39.00 45.20M37.58 40.42L34.61 43.39M36.99 39.00L32.80 39.00M37.58 37.58L34.61 34.61M39.00 36.99L39.00 32.80M40.42 37.58L43.39 34.61" stroke="#fff" stroke-width="2.18" stroke-linecap="round" fill="none"/></g></svg></div>
<div class="ic" style="left:297.3px;top:150.0px;width:48px;height:48px"><svg viewBox="0 0 48 48" style="width:48px;height:48px"><path d="M11.5 6V40M18 6V40M24.3 6V40M30.6 6V40M36.8 6V40" stroke="#2d4d73" stroke-width="1.8"/><rect x="5.6" y="13.5" width="36.8" height="20" rx="2.4" fill="#6d97c6" stroke="#2d4d73" stroke-width="1.8"/><g opacity="1"><rect x="30.2" y="30.2" width="17.6" height="17.6" rx="3.2" fill="#c7a418" stroke="#b59412" stroke-width="1"/><path d="M41.01 39.00L45.20 39.00M40.42 40.42L43.39 43.39M39.00 41.01L39.00 45.20M37.58 40.42L34.61 43.39M36.99 39.00L32.80 39.00M37.58 37.58L34.61 34.61M39.00 36.99L39.00 32.80M40.42 37.58L43.39 34.61" stroke="#fff" stroke-width="2.18" stroke-linecap="round" fill="none"/></g></svg></div>
<div class="ic" style="left:362.4px;top:150.0px;width:48px;height:48px"><svg viewBox="0 0 48 48" style="width:48px;height:48px"><rect x="2.8" y="3" width="42.4" height="42.4" fill="#6d97c6" stroke="#2d4d73" stroke-width="1.6"/><path d="M2.8 3L24 26L2.8 26ZM24 3L2.8 26" fill="#a9c4e2" stroke="#2d4d73" stroke-width="1.4"/><path d="M2.8 3H24V26H2.8Z" fill="#a9c4e2" stroke="#2d4d73" stroke-width="1.4"/><path d="M2.8 3L24 26M24 3L2.8 26" stroke="#2d4d73" stroke-width="1.4"/><path d="M24 3H45.2V26H24Z" fill="#5c88ba" stroke="#2d4d73" stroke-width="1.4"/><path d="M45.2 3L24 26H45.2Z" fill="#8fb0d6" stroke="#2d4d73" stroke-width="1.4"/><path d="M2.8 26H24V45.4H2.8Z" fill="#5580b3" stroke="#2d4d73" stroke-width="1.4"/><path d="M13.4 26V45.4M2.8 35.5H24M24 35.5H45M34 26V45" stroke="#2d4d73" stroke-width="1.4"/><g opacity="1"><rect x="30.2" y="30.2" width="17.6" height="17.6" rx="3.2" fill="#c7a418" stroke="#b59412" stroke-width="1"/><path d="M41.01 39.00L45.20 39.00M40.42 40.42L43.39 43.39M39.00 41.01L39.00 45.20M37.58 40.42L34.61 43.39M36.99 39.00L32.80 39.00M37.58 37.58L34.61 34.61M39.00 36.99L39.00 32.80M40.42 37.58L43.39 34.61" stroke="#fff" stroke-width="2.18" stroke-linecap="round" fill="none"/></g></svg></div>
<div class="ic" style="left:442.4px;top:150.0px;width:48px;height:48px"><svg viewBox="0 0 48 48" style="width:48px;height:48px"><defs><linearGradient id="vg" x1="0" y1="0" x2="1" y2="1"><stop offset="0" stop-color="#d3dded"/><stop offset="1" stop-color="#8facd0"/></linearGradient></defs><rect x="2.2" y="3" width="43" height="42.6" rx="3.5" fill="url(#vg)" stroke="#3f6596" stroke-width="1.5"/><path d="M9 7.4L16.2 36L30.4 7.4L42.6 7.4" fill="none" stroke="#2c4f7d" stroke-width="2.2" stroke-linejoin="round"/><circle cx="9" cy="7.4" r="3.2" fill="#fff" stroke="#2c4f7d" stroke-width="1.8"/><circle cx="16.2" cy="36" r="3.2" fill="#fff" stroke="#2c4f7d" stroke-width="1.8"/><circle cx="30.4" cy="7.4" r="3.2" fill="#fff" stroke="#2c4f7d" stroke-width="1.8"/><circle cx="42.6" cy="7.4" r="3.2" fill="#fff" stroke="#2c4f7d" stroke-width="1.8"/><g opacity="1"><rect x="30.2" y="30.2" width="17.6" height="17.6" rx="3.2" fill="#c7a418" stroke="#b59412" stroke-width="1"/><path d="M41.01 39.00L45.20 39.00M40.42 40.42L43.39 43.39M39.00 41.01L39.00 45.20M37.58 40.42L34.61 43.39M36.99 39.00L32.80 39.00M37.58 37.58L34.61 34.61M39.00 36.99L39.00 32.80M40.42 37.58L43.39 34.61" stroke="#fff" stroke-width="2.18" stroke-linecap="round" fill="none"/></g></svg></div>
<div class="ic" style="left:596.0px;top:150.0px;width:48px;height:48px"><svg viewBox="0 0 48 48" style="width:48px;height:48px"><defs><linearGradient id="ig" x1="0" y1="0" x2="0" y2="1"><stop offset="0" stop-color="#8fb2dc"/><stop offset="1" stop-color="#4f7fba"/></linearGradient></defs><circle cx="19.5" cy="18" r="15.8" fill="url(#ig)" stroke="#7ea3d0" stroke-width="1"/><text x="19" y="28.5" font-family="Liberation Serif,serif" font-style="italic" font-weight="bold" font-size="31" text-anchor="middle" fill="#fff">i</text><path d="M25.2 21.0 L32.8 44.2 L36.6 40.0 L42.7 47.9 L47.0 44.4 L40.9 36.6 L45.9 34.0Z" fill="#fff" stroke="#000" stroke-width="1.7" stroke-linejoin="miter" opacity="1"/></svg></div>
<div class="ic" style="left:663.7px;top:150.0px;width:48px;height:48px"><svg viewBox="0 0 48 48" style="width:48px;height:48px"><path d="M6 5.5V42M43.4 5.5V42" stroke="#555" stroke-width="2"/><rect x="3" y="42" width="43.4" height="3.4" fill="#9a9a9a" stroke="#555" stroke-width="1.2"/><path d="M6 9.4H43.4M6 21.6H43.4M6 33H43.4" stroke="#555" stroke-width="1.6"/><circle cx="19.2" cy="9.4" r="4.2" fill="#f7a9a9" stroke="#c00" stroke-width="1.5"/><circle cx="35.6" cy="9.4" r="4.2" fill="#f7a9a9" stroke="#c00" stroke-width="1.5"/><circle cx="15.2" cy="21.6" r="4.2" fill="#c2ecb8" stroke="#4d9a45" stroke-width="1.5"/><circle cx="25.2" cy="21.6" r="4.2" fill="#c2ecb8" stroke="#4d9a45" stroke-width="1.5"/><circle cx="14.6" cy="33" r="4.2" fill="#bcd9f2" stroke="#39679c" stroke-width="1.5"/><circle cx="24.6" cy="33" r="4.2" fill="#bcd9f2" stroke="#39679c" stroke-width="1.5"/><circle cx="35.4" cy="33" r="4.2" fill="#bcd9f2" stroke="#39679c" stroke-width="1.5"/></svg></div>
<div class="ic" style="left:730.0px;top:150.0px;width:48px;height:48px"><svg viewBox="0 0 48 48" style="width:48px;height:48px"><g opacity="1"><path d="M21.3 10.3L21.6 2.3L26.4 2.3L26.7 10.3L31.8 12.4L37.6 7.0L41.0 10.4L35.6 16.2L37.7 21.3L45.7 21.6L45.7 26.4L37.7 26.7L35.6 31.8L41.0 37.6L37.6 41.0L31.8 35.6L26.7 37.7L26.4 45.7L21.6 45.7L21.3 37.7L16.2 35.6L10.4 41.0L7.0 37.6L12.4 31.8L10.3 26.7L2.3 26.4L2.3 21.6L10.3 21.3L12.4 16.2L7.0 10.4L10.4 7.0L16.2 12.4Z" fill="#6f9bd0" stroke="#4878b4" stroke-width="1.5" stroke-linejoin="round"/><circle cx="24" cy="24" r="5.2" fill="#f1f1f1" stroke="#4878b4" stroke-width="1.5"/></g></svg></div>
<div class="ic" style="left:796.0px;top:150.0px;width:48px;height:48px"><svg viewBox="0 0 48 48" style="width:48px;height:48px"><text x="24" y="43.4" font-family="Liberation Serif,serif" font-weight="bold" font-size="56.5" text-anchor="middle" fill="#ae00ae" transform="translate(24 0) scale(.82 1) translate(-24 0)">Σ</text></svg></div>
<div class="ic" style="left:861.7px;top:150.0px;width:48px;height:48px"><svg viewBox="0 0 48 48" style="width:48px;height:48px"><rect x="4.6" y="4.8" width="39.2" height="38.6" fill="#eef4fb" stroke="#6a98cf" stroke-width="1.6"/><rect x="5.4" y="5.6" width="37.6" height="7.6" fill="#c5daf2"/><path d="M10.5 9.5H18M22 9.5H38" stroke="#6a98cf" stroke-width="3"/><path d="M4.6 14H43.8" stroke="#6a98cf" stroke-width="1.4"/><path d="M10.5 19.5H18M22 19.5H38M10.5 25.5H18M22 25.5H38M10.5 31.5H18M22 31.5H38M10.5 37.5H18M22 37.5H38" stroke="#5e90cb" stroke-width="1.8"/></svg></div>
<div class="ic" style="left:952.0px;top:150.0px;width:48px;height:48px"><svg viewBox="0 0 48 48" style="width:48px;height:48px"><path d="M4.8 14.2H43.4M4.8 10.4V18M43.4 10.4V18" stroke="#34567e" stroke-width="2.4" fill="none"/><rect x="3" y="25.6" width="42.6" height="13.6" fill="#b9b9b9" stroke="#6c6c6c" stroke-width="1.8"/><path d="M8.5 26V31.5M13.5 26V30M18.5 26V30M23.5 26V34M28.5 26V30M33.5 26V30M38.5 26V31.5M42 26V30" stroke="#6c6c6c" stroke-width="1.5"/></svg></div>
<div class="ic" style="left:1042.0px;top:150.0px;width:48px;height:48px"><svg viewBox="0 0 48 48" style="width:48px;height:48px"><circle cx="11.6" cy="39" r="6.8" fill="#86c086" stroke="#444" stroke-width="1.6"/><path d="M8.5 3.6H39C43 3.6 45.4 6 45.4 10V21.5C45.4 25.5 43 28 39 28H22.5C21 31.5 17.5 35 12.5 36.5C15 33.5 16 31 16 28H8.5C4.5 28 2.2 25.5 2.2 21.5V10C2.2 6 4.5 3.6 8.5 3.6Z" fill="#fdf194" stroke="#cfa700" stroke-width="1.7" stroke-linejoin="round"/></svg></div>
<div class="ic" style="left:1107.0px;top:150.0px;width:48px;height:48px"><svg viewBox="0 0 48 48" style="width:48px;height:48px"><g opacity=".3"><g opacity="1"><path d="M19.4 6.5L20.0 2.1L23.0 2.1L23.6 6.5L27.5 7.7L30.5 4.5L33.0 6.3L30.8 10.2L33.3 13.5L37.6 12.7L38.6 15.6L34.5 17.4L34.5 21.6L38.6 23.4L37.6 26.3L33.3 25.5L30.8 28.8L33.0 32.7L30.5 34.5L27.5 31.3L23.6 32.5L23.0 36.9L20.0 36.9L19.4 32.5L15.5 31.3L12.5 34.5L10.0 32.7L12.2 28.8L9.7 25.5L5.4 26.3L4.4 23.4L8.5 21.6L8.5 17.4L4.4 15.6L5.4 12.7L9.7 13.5L12.2 10.2L10.0 6.3L12.5 4.5L15.5 7.7Z" fill="#e6e6e6" stroke="#8a8a8a" stroke-width="1.5" stroke-linejoin="round"/></g><circle cx="21.5" cy="19.5" r="9" fill="#cfd4da" stroke="#9a9a9a"/><path d="M18 14.5L28 19.5L18 24.5Z" fill="#f5f5f5"/><path d="M25.0 21.0 L32.6 44.2 L36.4 40.0 L42.5 47.9 L46.8 44.4 L40.7 36.6 L45.7 34.0Z" fill="#fff" stroke="#777" stroke-width="1.7" stroke-linejoin="miter" opacity="1"/></g></svg></div>
<div class="ic" style="left:1360.0px;top:150.0px;width:48px;height:48px"><svg viewBox="0 0 48 48" style="width:48px;height:48px"><rect x="2.8" y="3.6" width="42.8" height="37.4" fill="none" stroke="#222" stroke-width="1.8" stroke-dasharray="4.4 2.6"/><rect x="4.2" y="4.8" width="27.2" height="26.2" fill="#fbe24a" stroke="#d4ae20" stroke-width="1.8"/><path d="M20.2 17.6 L30.2 44.9 L34.5 39.8 L42.1 48.8 L47.2 44.6 L39.6 35.5 L45.3 32.1Z" fill="#fff" stroke="#000" stroke-width="1.7" stroke-linejoin="miter" opacity="1"/></svg></div>
<div class="ic" style="left:1451.0px;top:150.0px;width:48px;height:48px"><svg viewBox="0 0 48 48" style="width:48px;height:48px"><rect x="11.6" y="16.6" width="30.8" height="26.8" fill="#fbe24a" stroke="#d4ae20" stroke-width="1.8"/><rect x="5.8" y="6.8" width="28.6" height="26" fill="#cdd4dc" stroke="#8d97a3" stroke-width="1.6"/><rect x="10" y="11.4" width="20.4" height="6" fill="#fff" stroke="#9aa3ad" stroke-width="1"/><rect x="10" y="21.6" width="20.4" height="6" fill="#fff" stroke="#9aa3ad" stroke-width="1"/></svg></div>
<div class="ic" style="left:1542.0px;top:150.0px;width:48px;height:48px"><svg viewBox="0 0 48 48" style="width:48px;height:48px"><rect x="2.8" y="5.2" width="27" height="26.2" fill="#fbe24a" stroke="#d4ae20" stroke-width="1.8"/><rect x="11" y="13.6" width="27" height="25.8" fill="#fbe24a" stroke="#d4ae20" stroke-width="1.8"/><rect x="24.6" y="26.8" width="21.4" height="21" rx="2.4" fill="#dc1f1f" stroke="#b31010" stroke-width="1"/><circle cx="35.3" cy="37.3" r="6.6" fill="none" stroke="#fff" stroke-width="2.6"/><path d="M30.6 42L40 32.6" stroke="#fff" stroke-width="2.6"/></svg></div>
<div class="ic" style="left:1631.0px;top:150.0px;width:48px;height:48px"><svg viewBox="0 0 48 48" style="width:48px;height:48px"><rect x="3.6" y="4.8" width="27.2" height="26.6" fill="#fbe24a" stroke="#d4ae20" stroke-width="1.8"/><path d="M38.3 45.5C35 40 31.4 35.5 31.4 31C31.4 27 34.5 24.4 38.3 24.4C42.1 24.4 45.2 27 45.2 31C45.2 35.5 41.6 40 38.3 45.5Z" fill="#6f94b8" stroke="#4d7194" stroke-width="1.2"/><circle cx="38.3" cy="30.8" r="2.6" fill="#fff"/></svg></div>
<div class="ic" style="left:1727.0px;top:150.0px;width:48px;height:48px"><svg viewBox="0 0 48 48" style="width:48px;height:48px"><g opacity=".3"><path d="M3 45C7 45 6 4 11 3C15 3 18 18 19 30C19 14 21 3 24 3C29 3 29 38 45 45Z" fill="#c9d2c4" stroke="#8f9a8a" stroke-width="1.2"/><path d="M9 45V28M27 45V27" stroke="#d9a0a0" stroke-width="1.6"/></g></svg></div>
<div class="ic" style="left:1795.5px;top:150.0px;width:48px;height:48px"><svg viewBox="0 0 48 48" style="width:48px;height:48px"><g opacity=".3"><path d="M3 45C7 45 6 4 11 3C15 3 18 18 19 30C19 14 21 3 24 3C29 3 29 38 45 45Z" fill="#c9d2c4" stroke="#8f9a8a" stroke-width="1.2"/><path d="M9 45V28M27 45V27" stroke="#d9a0a0" stroke-width="1.6"/><path d="M1 24L11 15V20H36V15L46 24L36 33V28H11V33Z" fill="#ececec" stroke="#8a8a8a" stroke-width="1.6" stroke-linejoin="round"/></g></svg></div>
<div class="ic" style="left:1860.0px;top:150.0px;width:48px;height:48px"><svg viewBox="0 0 48 48" style="width:48px;height:48px"><g opacity=".3"><path d="M3 45C7 45 6 4 11 3C15 3 18 18 19 30C19 14 21 3 24 3C29 3 29 38 45 45Z" fill="#c9d2c4" stroke="#8f9a8a" stroke-width="1.2"/><path d="M9 45V28M27 45V27" stroke="#d9a0a0" stroke-width="1.6"/></g></svg></div>
<div class="ic" style="left:1926.0px;top:150.0px;width:48px;height:48px"><svg viewBox="0 0 48 48" style="width:48px;height:48px"><g opacity=".3"><path d="M3 45C7 45 6 4 11 3C15 3 18 18 19 30C19 14 21 3 24 3C29 3 29 38 45 45Z" fill="#c9d2c4" stroke="#8f9a8a" stroke-width="1.2"/><path d="M9 45V28M27 45V27" stroke="#d9a0a0" stroke-width="1.6"/><path d="M1 24L11 15V20H36V15L46 24L36 33V28H11V33Z" fill="#ececec" stroke="#8a8a8a" stroke-width="1.6" stroke-linejoin="round"/></g></svg></div>
<div class="ic" style="left:1992.8px;top:150.0px;width:48px;height:48px"><svg viewBox="0 0 48 48" style="width:48px;height:48px"><g opacity=".32"><circle cx="23" cy="23" r="11.6" fill="#b7b190"/><path d="M38.0 23.0L44.5 23.0" stroke="#b7b190" stroke-width="2.4"/><path d="M33.6 33.6L38.2 38.2" stroke="#b7b190" stroke-width="2.4"/><path d="M23.0 38.0L23.0 44.5" stroke="#b7b190" stroke-width="2.4"/><path d="M12.4 33.6L7.8 38.2" stroke="#b7b190" stroke-width="2.4"/><path d="M8.0 23.0L1.5 23.0" stroke="#b7b190" stroke-width="2.4"/><path d="M12.4 12.4L7.8 7.8" stroke="#b7b190" stroke-width="2.4"/><path d="M23.0 8.0L23.0 1.5" stroke="#b7b190" stroke-width="2.4"/><path d="M33.6 12.4L38.2 7.8" stroke="#b7b190" stroke-width="2.4"/><rect x="26.4" y="26.6" width="21" height="21" rx="3" fill="#9c9c90" stroke="#8a8a80"/><path d="M30 42.5L36.8 31L43.6 42.5Z" fill="#fff"/></g></svg></div>
<div class="ic" style="left:2058.7px;top:150.0px;width:48px;height:48px"><svg viewBox="0 0 48 48" style="width:48px;height:48px"><g opacity=".32"><circle cx="23" cy="23" r="11.6" fill="#b7b190"/><path d="M38.0 23.0L44.5 23.0" stroke="#b7b190" stroke-width="2.4"/><path d="M33.6 33.6L38.2 38.2" stroke="#b7b190" stroke-width="2.4"/><path d="M23.0 38.0L23.0 44.5" stroke="#b7b190" stroke-width="2.4"/><path d="M12.4 33.6L7.8 38.2" stroke="#b7b190" stroke-width="2.4"/><path d="M8.0 23.0L1.5 23.0" stroke="#b7b190" stroke-width="2.4"/><path d="M12.4 12.4L7.8 7.8" stroke="#b7b190" stroke-width="2.4"/><path d="M23.0 8.0L23.0 1.5" stroke="#b7b190" stroke-width="2.4"/><path d="M33.6 12.4L38.2 7.8" stroke="#b7b190" stroke-width="2.4"/><rect x="26.4" y="26.6" width="21" height="21" rx="3" fill="#9c9c90" stroke="#8a8a80"/><path d="M30 31.5L36.8 43L43.6 31.5Z" fill="#fff"/></g></svg></div>
<div class="ic" style="left:2127.0px;top:150.0px;width:48px;height:48px"><svg viewBox="0 0 48 48" style="width:48px;height:48px"><g opacity=".32"><circle cx="21" cy="24" r="17.4" fill="#f4f4f4" stroke="#6f6f6f" stroke-width="2"/><path d="M21 24L33 12A17 17 0 1 0 9 36Z" fill="#6f6f6f" transform="rotate(-90 21 24) translate(0 0)"/><rect x="26.4" y="26.6" width="21" height="21" rx="3" fill="#9c9c90" stroke="#8a8a80"/><path d="M30 42.5L36.8 31L43.6 42.5Z" fill="#fff"/></g></svg></div>
<div class="ic" style="left:2192.8px;top:150.0px;width:48px;height:48px"><svg viewBox="0 0 48 48" style="width:48px;height:48px"><g opacity=".32"><circle cx="21" cy="24" r="17.4" fill="#f4f4f4" stroke="#6f6f6f" stroke-width="2"/><path d="M21 24L33 12A17 17 0 1 0 9 36Z" fill="#6f6f6f" transform="rotate(-90 21 24) translate(0 0)"/><rect x="26.4" y="26.6" width="21" height="21" rx="3" fill="#9c9c90" stroke="#8a8a80"/><path d="M30 31.5L36.8 43L43.6 31.5Z" fill="#fff"/></g></svg></div>
<div class="ic" style="left:2259.7px;top:150.0px;width:48px;height:48px"><svg viewBox="0 0 48 48" style="width:48px;height:48px"><g opacity=".32"><text x="17" y="33" font-family="Liberation Serif,serif" font-size="50" text-anchor="middle" fill="#6f6f6f">γ</text><rect x="26.4" y="26.6" width="21" height="21" rx="3" fill="#9c9c90" stroke="#8a8a80"/><path d="M30 42.5L36.8 31L43.6 42.5Z" fill="#fff"/></g></svg></div>
<div class="ic" style="left:2326.0px;top:150.0px;width:48px;height:48px"><svg viewBox="0 0 48 48" style="width:48px;height:48px"><g opacity=".32"><text x="17" y="33" font-family="Liberation Serif,serif" font-size="50" text-anchor="middle" fill="#6f6f6f">γ</text><rect x="26.4" y="26.6" width="21" height="21" rx="3" fill="#9c9c90" stroke="#8a8a80"/><path d="M30 31.5L36.8 43L43.6 31.5Z" fill="#fff"/></g></svg></div>
<div class="sep" style="left:425.8px;top:155px"></div><div class="sep" style="left:505.8px;top:155px"></div><div class="hd" style="left:527.8px;top:156px"></div><div class="hd" style="left:571.8px;top:156px"></div><div class="hd" style="left:1333.8px;top:156px"></div><div class="hd" style="left:1701.8px;top:156px"></div>
<div class="arr" style="left:921.6px;top:171px"></div>
<div class="arr" style="left:1012.0px;top:171px"></div>
<div class="arr" style="left:1168.0px;top:171px"></div>
<div class="arr" style="left:1420.0px;top:171px"></div>
<div class="arr" style="left:1509.8px;top:171px"></div>
<div class="arr" style="left:1600.0px;top:171px"></div>
<div class="ic" style="left:31.6px;top:228.0px;width:48px;height:48px"><svg viewBox="0 0 48 48" style="width:48px;height:48px"><g opacity=".3"><path d="M3 4H46V24H27V45H3Z" fill="#f6f6f6" stroke="#8c8c8c" stroke-width="1.5"/><path d="M3 4L27 24M27 4L3 24M27 4V24M3 24H27M3 34.5H27M15 24V45M27 24L46 4" stroke="#8c8c8c" stroke-width="1.3" fill="none"/><path d="M40 3L46 8L20 44L13 46.5L14 39Z" fill="#d8cfc0" stroke="#8c8c8c" stroke-width="1.3"/></g></svg></div>
<div class="ic" style="left:98.0px;top:228.0px;width:48px;height:48px"><svg viewBox="0 0 48 48" style="width:48px;height:48px"><g opacity=".3"><path d="M2 2H46V24H24V45H2Z" fill="#d8d4c4" stroke="#8c8c8c" stroke-width="1.5"/><path d="M2 2L24 24M24 2L2 24M24 2V24M2 24H24M2 34.5H24M13 24V45M24 24L46 2" stroke="#8c8c8c" stroke-width="1.3" fill="none"/><path d="M21.0 17.0 L29.6 43.2 L33.9 38.5 L40.8 47.4 L45.7 43.5 L38.8 34.7 L44.4 31.6Z" fill="#fff" stroke="#777" stroke-width="1.7" stroke-linejoin="miter" opacity="1"/></g></svg></div>
<div class="ic" style="left:188.5px;top:228.0px;width:48px;height:48px"><svg viewBox="0 0 48 48" style="width:48px;height:48px"><g opacity=".3"><rect x="4" y="4.5" width="14.5" height="14.5" fill="#f4f4f4" stroke="#777" stroke-width="1.6"/><path d="M4 4.5l14.5 14.5M18.5 4.5l-14.5 14.5" stroke="#777" stroke-width="1.3"/><rect x="4" y="28.5" width="14.5" height="14.5" fill="#f4f4f4" stroke="#777" stroke-width="1.6"/><path d="M4 28.5l14.5 14.5M18.5 28.5l-14.5 14.5" stroke="#777" stroke-width="1.3"/><path d="M33 2L42 10L33 18L24 10Z" fill="#f4f4f4" stroke="#777" stroke-width="1.5"/><path d="M33 2V18M24 10H42" stroke="#777" stroke-width="1.2"/><text x="36" y="46" font-family="Liberation Serif,serif" font-size="44" text-anchor="middle" fill="#777" stroke="#777" stroke-width=".8">ε</text></g></svg></div>
<div class="ic" style="left:253.7px;top:228.0px;width:48px;height:48px"><svg viewBox="0 0 48 48" style="width:48px;height:48px"><g opacity=".3"><rect x="2.6" y="4" width="42.8" height="41" fill="#ededed" stroke="#8a8a8a" stroke-width="1.6"/><path d="M5 4L18 31L24 10L31 31L44 4M18 31H31M18 31L3 44M31 31L45 44M18 31V45M31 31V45" fill="none" stroke="#9a9a9a" stroke-width="1.4"/><circle cx="5" cy="4" r="2.4" fill="#fff" stroke="#999"/><circle cx="44" cy="4" r="2.4" fill="#fff" stroke="#999"/><rect x="16" y="29" width="4" height="4" fill="#fff" stroke="#999"/></g></svg></div>
<div class="ic" style="left:376.5px;top:228.0px;width:48px;height:48px"><svg viewBox="0 0 48 48" style="width:48px;height:48px"><path d="M4.6 7.2L24.4 6.6L30.8 21.4L43 24.8" fill="none" stroke="#34567e" stroke-width="1.5"/><circle cx="4.6" cy="7.2" r="2.3" fill="#fff" stroke="#34567e" stroke-width="1.4"/><circle cx="24.4" cy="6.6" r="2.3" fill="#fff" stroke="#34567e" stroke-width="1.4"/><circle cx="30.8" cy="21.4" r="2.3" fill="#fff" stroke="#34567e" stroke-width="1.4"/><circle cx="43" cy="24.8" r="2.3" fill="#fff" stroke="#34567e" stroke-width="1.4"/><path d="M38.4 2.4L40.1 6.7L44.7 7.0L41.2 9.9L42.3 14.3L38.4 11.9L34.5 14.3L35.6 9.9L32.1 7.0L36.7 6.7Z" fill="#6f9bd0" stroke="#34567e" stroke-width="1.2" stroke-linejoin="round"/><text x="15.6" y="37.8" font-family="Liberation Sans,sans-serif" font-weight="bold" font-size="33" text-anchor="middle" fill="#5b8ac2" stroke="#2f5688" stroke-width="1.1">A</text><g opacity="1"><rect x="30" y="30.2" width="17.6" height="17.6" rx="3.2" fill="#c7a418" stroke="#b59412" stroke-width="1"/><path d="M40.81 39.00L45.00 39.00M40.22 40.42L43.19 43.39M38.80 41.01L38.80 45.20M37.38 40.42L34.41 43.39M36.79 39.00L32.60 39.00M37.38 37.58L34.41 34.61M38.80 36.99L38.80 32.80M40.22 37.58L43.19 34.61" stroke="#fff" stroke-width="2.18" stroke-linecap="round" fill="none"/></g></svg></div>
<div class="ic" style="left:463.5px;top:228.0px;width:48px;height:48px"><svg viewBox="0 0 48 48" style="width:48px;height:48px"><rect x="10" y="7" width="28.5" height="29" fill="none" stroke="#555" stroke-width="1.5" stroke-dasharray="1.6 3"/><rect x="7.2" y="4.2" width="6" height="6" fill="#fff" stroke="#666" stroke-width="1.4"/><rect x="35.6" y="4.2" width="6" height="6" fill="#fff" stroke="#666" stroke-width="1.4"/><rect x="7.2" y="33.2" width="6" height="6" fill="#fff" stroke="#666" stroke-width="1.4"/><rect x="35.6" y="33.2" width="6" height="6" fill="#fff" stroke="#666" stroke-width="1.4"/><path d="M12.6 5.0 L12.6 41.5 L21.0 33.5 L28.2 47.9 L35.6 44.2 L28.5 30.6 L41.0 30.6Z" fill="#fff" stroke="#000" stroke-width="1.8" stroke-linejoin="round" opacity="1"/></svg></div>
<div class="ic" style="left:533.0px;top:228.0px;width:48px;height:48px"><svg viewBox="0 0 48 48" style="width:48px;height:48px"><path d="M7.8 7.4L38 5.4L21.6 41L6.2 31.6Z" fill="none" stroke="#111" stroke-width="1.9"/><circle cx="7.8" cy="7.4" r="5.2" fill="#1a78f0" stroke="#1668d6" stroke-width=".8"/><circle cx="38" cy="5.4" r="5.2" fill="#1a78f0" stroke="#1668d6" stroke-width=".8"/><circle cx="21.6" cy="41" r="5.2" fill="#1a78f0" stroke="#1668d6" stroke-width=".8"/><circle cx="6.2" cy="31.6" r="5.2" fill="#1a78f0" stroke="#1668d6" stroke-width=".8"/><rect x="29.8" y="30.2" width="17.4" height="17.4" rx="3" fill="#5b9b5a" stroke="#4d8a4c" stroke-width="1"/><path d="M32.5 38.9H44.5M38.5 32.9V44.9" stroke="#fff" stroke-width="3.6" fill="none"/></svg></div>
<div class="ic" style="left:598.0px;top:228.0px;width:48px;height:48px"><svg viewBox="0 0 48 48" style="width:48px;height:48px"><path d="M40.8 8.4L13.4 6.6L7 23.6L18.4 42" fill="none" stroke="#111" stroke-width="1.9"/><circle cx="40.8" cy="8.4" r="5.2" fill="#1a78f0" stroke="#1668d6" stroke-width=".8"/><circle cx="13.4" cy="6.6" r="5.2" fill="#1a78f0" stroke="#1668d6" stroke-width=".8"/><circle cx="7" cy="23.6" r="5.2" fill="#1a78f0" stroke="#1668d6" stroke-width=".8"/><circle cx="18.4" cy="42" r="5.2" fill="#1a78f0" stroke="#1668d6" stroke-width=".8"/><rect x="30" y="30.2" width="17.4" height="17.4" rx="3" fill="#5b9b5a" stroke="#4d8a4c" stroke-width="1"/><path d="M32.7 38.9H44.7M38.7 32.9V44.9" stroke="#fff" stroke-width="3.6" fill="none"/></svg></div>
<div class="ic" style="left:664.0px;top:228.0px;width:48px;height:48px"><svg viewBox="0 0 48 48" style="width:48px;height:48px"><path d="M24.0 4.5L29.5 18.4L44.4 19.4L32.9 28.9L36.6 43.4L24.0 35.4L11.4 43.4L15.1 28.9L3.6 19.4L18.5 18.4Z" fill="#fbe8a6" stroke="#e9a46a" stroke-width="1.8" stroke-linejoin="round"/><rect x="30" y="30.2" width="17.4" height="17.4" rx="3" fill="#5b9b5a" stroke="#4d8a4c" stroke-width="1"/><path d="M32.7 38.9H44.7M38.7 32.9V44.9" stroke="#fff" stroke-width="3.6" fill="none"/></svg></div>
<div class="ic" style="left:732.6px;top:228.0px;width:48px;height:48px"><svg viewBox="0 0 48 48" style="width:48px;height:48px"><text x="21.6" y="33" font-family="Liberation Serif,serif" font-weight="bold" font-size="29" text-anchor="middle" fill="#333">T</text><rect x="5" y="35.4" width="6.4" height="6.4" fill="#c9c9c9" stroke="#8a8a8a" stroke-width="1.3"/><rect x="27.8" y="30.2" width="17.4" height="17.4" rx="3" fill="#5b9b5a" stroke="#4d8a4c" stroke-width="1"/><path d="M30.5 38.9H42.5M36.5 32.9V44.9" stroke="#fff" stroke-width="3.6" fill="none"/></svg></div>
<div class="ic" style="left:810.3px;top:228.0px;width:48px;height:48px"><svg viewBox="0 0 48 48" style="width:48px;height:48px"><path d="M2.4 2.8H45.2V30.4H19L2.8 44.6L7.5 30.4H2.4Z" fill="#e9eff5" stroke="#a6a6a6" stroke-width="1.6" stroke-linejoin="round"/><rect x="24.2" y="25" width="21.2" height="20" rx="3" fill="#3c5b79" stroke="#2e4760"/><path d="M27.5 32.2H35V28L43 35L35 42V37.8H27.5Z" fill="#fff"/></svg></div>
<div class="hd" style="left:349.8px;top:234px"></div><div class="sep" style="left:793.7px;top:233px"></div>
<div class="arr" style="left:158.0px;top:249px"></div>
<div class="arr" style="left:314.0px;top:249px"></div>
<div class="arr" style="left:436.0px;top:249px"></div>
<div class="arr" style="left:869.7px;top:249px"></div>
<div class="abs" style="left:0;top:290px;width:522px;height:1288px;background:#ececec"></div>
<div class="ptitle" style="left:5.5px;top:298px;font-size:23px;letter-spacing:.3px">Browser</div>
<div class="ic" style="left:456.0px;top:300.0px;width:22px;height:22px"><svg viewBox="0 0 22 22" style="width:22px;height:22px"><rect x="1.1" y="1.1" width="19.8" height="19.8" rx="3.6" fill="none" stroke="#6e6d68" stroke-width="2"/><path d="M8.8 7V4.8H17.2V13.2H14.8" fill="none" stroke="#6e6d68" stroke-width="1.9"/><rect x="5" y="8.6" width="8.6" height="8.4" fill="none" stroke="#6e6d68" stroke-width="1.9"/></svg></div><div class="ic" style="left:484.0px;top:300.0px;width:22px;height:22px"><svg viewBox="0 0 22 22" style="width:22px;height:22px"><rect x="1.1" y="1.1" width="19.8" height="19.8" rx="3.6" fill="none" stroke="#6e6d68" stroke-width="2"/><path d="M5.4 5.4L16.6 16.6M16.6 5.4L5.4 16.6" stroke="#6e6d68" stroke-width="4.2"/></svg></div>
<div class="ic" style="left:14.5px;top:345.0px;width:30px;height:30px"><svg viewBox="0 0 32 32" style="width:30px;height:30px"><rect x="3.4" y="2.6" width="22.6" height="22.6" fill="#f0f0ee" stroke="#8c8c8c" stroke-width="1.7"/><rect x="19" y="19.6" width="11.6" height="11.6" rx="2" fill="#5b9b5a" stroke="#4d8a4c" stroke-width=".8"/><path d="M21.4 25.4H28.2M24.8 22V28.8" stroke="#fff" stroke-width="2.2"/></svg></div>
<div class="ic" style="left:65.0px;top:345.0px;width:30px;height:30px"><svg viewBox="0 0 32 32" style="width:30px;height:30px"><g transform="scale(.667)"><path d="M5 22C5 9 20 1.5 33.5 9.5L38 3.5L43.5 21.5L25 19.5L29.5 14.2C20.5 9.5 11.5 14 10.5 22Z" fill="#4f8fd3" stroke="#2c67ad" stroke-width="1.4" stroke-linejoin="round"/><path d="M43 26C43 39 28 46.5 14.5 38.5L10 44.5L4.5 26.5L23 28.5L18.5 33.8C27.5 38.5 36.5 34 37.5 26Z" fill="#4f8fd3" stroke="#2c67ad" stroke-width="1.4" stroke-linejoin="round"/><path d="M8 20C9 11 21 5 32 11" stroke="#a9ccf0" stroke-width="2" fill="none"/><path d="M40 28C39 37 27 43 16 37" stroke="#2f6fb8" stroke-width="2" fill="none"/></g></svg></div>
<div class="ic" style="left:115.0px;top:345.0px;width:30px;height:30px"><svg viewBox="0 0 32 32" style="width:30px;height:30px"><path d="M2.6 5.6H29.2L19 17.8V31L13 27.4V17.8Z" fill="#6d9bd1" stroke="#3f6ca4" stroke-width="1.4" stroke-linejoin="round"/><path d="M14.5 8H19L17.6 18V28L16 27V18Z" fill="#a9c6e6" opacity=".7"/><rect x="2.6" y="2" width="26.6" height="4.4" fill="#f6e14c" stroke="#c9aa1c" stroke-width="1"/></svg></div>
<div class="ic" style="left:166.0px;top:345.0px;width:30px;height:30px"><svg viewBox="0 0 32 32" style="width:30px;height:30px"><path d="M2 5H30M5 5V27.5M5 13.5H9.5M5 25.5H9.5" fill="none" stroke="#a7a7a7" stroke-width="1.5"/><rect x="8.6" y="9.6" width="7.8" height="7.8" fill="#f7941d"/><rect x="11" y="12" width="3" height="3" fill="#ffd27a"/><rect x="8.6" y="21.4" width="7.8" height="7.8" fill="#f7941d"/><rect x="11" y="23.8" width="3" height="3" fill="#ffd27a"/><path d="M22 1.6L31.2 13H26.4V28.6H17.6V13H12.8Z" fill="#5e8cc0" stroke="#34567e" stroke-width="1.3" stroke-linejoin="round"/></svg></div>
<div class="ic" style="left:214.7px;top:345.0px;width:30px;height:30px"><svg viewBox="0 0 32 32" style="width:30px;height:30px"><defs><linearGradient id="pg" x1="0" y1="0" x2="0" y2="1"><stop offset="0" stop-color="#7fa6d6"/><stop offset="1" stop-color="#4878b4"/></linearGradient></defs><circle cx="16" cy="16" r="12.8" fill="url(#pg)" stroke="#3f6ca4" stroke-width="1"/><text x="15.8" y="24" font-family="Liberation Serif,serif" font-style="italic" font-weight="bold" font-size="23" text-anchor="middle" fill="#fff">i</text></svg></div>
<div class="tree" style="left:0;top:393px;width:508px;height:435px;border-top:1px solid #c8c8c8;border-right:1px solid #c8c8c8;box-sizing:border-box">
<div class="tri d" style="left:8px;top:14.0px"></div>
<div class="ic" style="left:39px;top:3.5px;width:30px;height:30px"><svg viewBox="0 0 32 32" style="width:30px;height:30px"><path d="M16.0 -0.4L20.2 11.0L32.4 11.5L22.8 19.0L26.1 30.7L16.0 24.0L5.9 30.7L9.2 19.0L-0.4 11.5L11.8 11.0Z" fill="#ffff6e" stroke="#d6aa12" stroke-width="1.9" stroke-linejoin="round"/></svg></div>
<div class="trow" style="left:81.5px;top:-0.8000000000000007px;letter-spacing:.85px">Favorites</div>
<div class="tri r" style="left:43.5px;top:47.0px"></div>
<div class="ic" style="left:71px;top:39.5px;width:30px;height:30px"><svg viewBox="0 0 32 32" style="width:30px;height:30px"><path d="M2.4 29V3.8H13.4L17.4 8.6H29.6V29Z" fill="#efefef" stroke="#8c8c8c" stroke-width="1.7" stroke-linejoin="round"/></svg></div>
<div class="trow" style="left:113.5px;top:35.2px;letter-spacing:.85px">/Users/lily/GIS_GAA/qgis-work</div>
<div class="tri r" style="left:11.5px;top:83.0px"></div>
<div class="ic" style="left:39px;top:75.5px;width:30px;height:30px"><svg viewBox="0 0 32 32" style="width:30px;height:30px"><path d="M6 2.6H27.6V29.4H8" fill="#ececec" stroke="#9a9a9a" stroke-width="1.4"/><path d="M6.2 2.6C3.6 2.6 3 4 3 6V26.5C3 29 4.6 29.8 6.6 29.8H10V2.8" fill="#dedede" stroke="#9a9a9a" stroke-width="1.3"/><path d="M3 26.8C3 24 8.6 24 9 26.8C9 28.6 8 29.8 6.6 29.8" fill="#d2d2d2" stroke="#9a9a9a" stroke-width="1.2"/><path d="M17.4 2.2H23V12.6L20.2 16L17.4 12.6Z" fill="#6d97c6" stroke="#35587f" stroke-width="1.1"/></svg></div>
<div class="trow" style="left:81.5px;top:71.2px;letter-spacing:.85px">Spatial Bookmarks</div>
<div class="tri r" style="left:11.5px;top:119.0px"></div>
<div class="ic" style="left:39px;top:111.5px;width:30px;height:30px"><svg viewBox="0 0 32 32" style="width:30px;height:30px"><path d="M2.4 29V3.8H13.4L17.4 8.6H29.6V29Z" fill="#b6e25e" stroke="#8c8c8c" stroke-width="1.7" stroke-linejoin="round"/><path d="M3.4 9L28.6 27M3.4 28L16 16M20 8.6L28.6 17" stroke="#f2fbe0" stroke-width="1.7" fill="none"/><path d="M13.5 14.5L21.5 8.6L28.6 11.6L21.5 21.5Z" fill="#0b8a12"/></svg></div>
<div class="trow" style="left:81.5px;top:107.2px;letter-spacing:.85px">Project Home</div>
<div class="tri r" style="left:11.5px;top:155.0px"></div>
<div class="ic" style="left:39px;top:147.5px;width:30px;height:30px"><svg viewBox="0 0 32 32" style="width:30px;height:30px"><path d="M2.4 29V3.8H13.4L17.4 8.6H29.6V29Z" fill="#efefef" stroke="#8c8c8c" stroke-width="1.7" stroke-linejoin="round"/><path d="M16 11.4L7.8 19.6H10.4V26H21.6V19.6H24.2Z" fill="#fff" stroke="#222" stroke-width="1.8" stroke-linejoin="round"/></svg></div>
<div class="trow" style="left:81.5px;top:143.2px;letter-spacing:.85px">Home</div>
<div class="tri r" style="left:11.5px;top:191.0px"></div>
<div class="ic" style="left:39px;top:183.5px;width:30px;height:30px"><svg viewBox="0 0 32 32" style="width:30px;height:30px"><path d="M2.4 29V3.8H13.4L17.4 8.6H29.6V29Z" fill="#efefef" stroke="#8c8c8c" stroke-width="1.7" stroke-linejoin="round"/></svg></div>
<div class="trow" style="left:81.5px;top:179.2px;letter-spacing:.85px">/ (Macintosh HD)</div>
<div class="tri r" style="left:11.5px;top:227.0px"></div>
<div class="ic" style="left:39px;top:219.5px;width:30px;height:30px"><svg viewBox="0 0 32 32" style="width:30px;height:30px"><path d="M2.4 29V3.8H13.4L17.4 8.6H29.6V29Z" fill="#efefef" stroke="#8c8c8c" stroke-width="1.7" stroke-linejoin="round"/></svg></div>
<div class="trow" style="left:81.5px;top:215.2px;letter-spacing:.85px">/Volumes</div>
<div class="ic" style="left:39px;top:255.5px;width:30px;height:30px"><svg viewBox="0 0 32 32" style="width:30px;height:30px"><g transform="translate(0 1) scale(.667)"><path d="M1 16L24 4.7L47.2 16L24 28.5Z" fill="#a88a10" stroke="#111" stroke-width="1.2" stroke-linejoin="round"/><circle cx="24" cy="17.5" r="16.6" fill="#7fa6d4" stroke="#4a6f9e" stroke-width="1"/><path d="M13 8L17 5.5L21 6.5L22 10L19 12.5L20 16L17 19L14 17L12.5 13L10 11ZM25 5L30 4.5L34 7L36.5 11L34 13L31 11L28 12L26 9.5ZM24 14L28 15L30 18.5L28 22L25 21L23 18ZM33 16L37 15.5L38.5 19L36 22L33.5 20Z" fill="#2f4f7d"/><path d="M1 16L24 28.5V47.3L1 33.5Z" fill="#d9ad0a" stroke="#111" stroke-width="1.3" stroke-linejoin="round"/><path d="M47.2 16L24 28.5V47.3L47.2 33.5Z" fill="#fdf06a" stroke="#111" stroke-width="1.3" stroke-linejoin="round"/></g></svg></div>
<div class="trow" style="left:81.5px;top:251.2px;letter-spacing:.85px">GeoPackage</div>
<div class="ic" style="left:39px;top:291.5px;width:30px;height:30px"><svg viewBox="0 0 32 32" style="width:30px;height:30px"><g transform="scale(.667)"><path d="M46 1.2C30 4 18 12 12 24C8.5 31 6.5 38 3.2 46.6L5 47.2C8 40 10 35 13 30.5C20 32.5 27 31 31.5 27.5L29 27C33 26.5 37 24 39 21L36.5 21C40.5 19.5 44 15 45 10L43 11C45.5 8 46.3 4.5 46 1.2Z" fill="#7aa3d2" stroke="#2c4f7d" stroke-width="1.3" stroke-linejoin="round"/><path d="M44 3.5C30 9 19 18 13 30.5" fill="none" stroke="#2c4f7d" stroke-width="1.1"/><path d="M40 6.5L36 14M36 8L31 17M32 10L26.5 20M28 12.5L22.5 23M24 15.5L19 26M20.5 19L16.5 28.5M43 9L34 18M41 15L30 22M37 21L25 26M31 26.5L20 29" stroke="#e3edf8" stroke-width=".9" fill="none"/></g></svg></div>
<div class="trow" style="left:81.5px;top:287.2px;letter-spacing:.85px">SpatiaLite</div>
<div class="ic" style="left:39px;top:327.5px;width:30px;height:30px"><svg viewBox="0 0 32 32" style="width:30px;height:30px"><path d="M7 3C2 4 1 10 3 16C4 20 6 23 8 22C9 25 10 27 13 27L13.5 31H18.5L19 24C22 25 25 24 25 22L29 21C31 14 30 6 25 3.5C21 2 18 3 16 4C13 2 10 2 7 3Z" fill="#5e8cc0" stroke="#2f4f7d" stroke-width="1.3" stroke-linejoin="round"/><path d="M9 6C7 9 7 15 9 20M16 4.5C18 8 18 14 17 20L19 24M23 6C25 9 25 14 23 19" fill="none" stroke="#2f4f7d" stroke-width="1.1"/><circle cx="20.5" cy="10" r="1.1" fill="#fff"/></svg></div>
<div class="trow" style="left:81.5px;top:323.2px;letter-spacing:.85px">PostGIS</div>
<div class="ic" style="left:39px;top:363.5px;width:30px;height:30px"><svg viewBox="0 0 32 32" style="width:30px;height:30px"><path d="M4 2C12 3 24 7 30.5 15C24 20 12 27 1.5 30.5C6 22 7 12 4 2Z" fill="#6d97c6" stroke="#2f4f7d" stroke-width="1.3" stroke-linejoin="round"/><path d="M11 5C14 12 14 20 10 27M18 8.5C21 14 21 18 18 23.5" fill="none" stroke="#2f4f7d" stroke-width="1.2"/></svg></div>
<div class="trow" style="left:81.5px;top:359.2px;letter-spacing:.85px">MSSQL</div>
<div class="ic" style="left:39px;top:399.5px;width:30px;height:30px"><svg viewBox="0 0 32 32" style="width:30px;height:30px"><path d="M3 32V10C3 5 8 3 16 3C24 3 29 5 29 10V32Z" fill="#3f628f" stroke="#2f4f7d" stroke-width="1.3"/></svg></div>
<div class="trow" style="left:81.5px;top:395.2px;letter-spacing:.85px">Oracle</div>
<div class="abs" style="left:481px;top:0;width:27px;height:406px;background:#f7f7f7;border-left:1px solid #d0d0d0"></div>
<div class="abs" style="left:482px;top:0;width:26px;height:27px;background:#f4f4f4;border-bottom:1px solid #d0d0d0"></div><div class="tri" style="position:absolute;left:486px;top:9px;border-left:8.5px solid transparent;border-right:8.5px solid transparent;border-bottom:9px solid #4d4d4d"></div>
<div class="abs" style="left:482px;top:220px;width:25px;height:156px;background:#e2e2e2;border-top:1px solid #cfcfcf;border-bottom:1px solid #cfcfcf"></div>
<div class="tri" style="position:absolute;left:486px;top:390px;border-left:8.5px solid transparent;border-right:8.5px solid transparent;border-top:9px solid #4d4d4d"></div>
<div class="abs" style="left:0;top:406px;width:508px;height:29px;background:#f7f7f7;border-top:1px solid #d0d0d0"></div>
<div class="abs" style="left:0;top:407px;width:25px;height:28px;border-right:1px solid #d0d0d0"></div><div class="abs" style="left:398px;top:407px;width:54px;height:28px;background:#e2e2e2;border-left:1px solid #cfcfcf;border-right:1px solid #cfcfcf"></div>
<div class="abs" style="left:481px;top:407px;width:27px;height:28px;background:#ececec;border-left:1px solid #d0d0d0"></div>
<div class="tri" style="position:absolute;left:7px;top:413px;border-top:8px solid transparent;border-bottom:8px solid transparent;border-right:9px solid #4d4d4d"></div>
<div class="tri" style="position:absolute;left:461px;top:413px;border-top:8px solid transparent;border-bottom:8px solid transparent;border-left:9px solid #4d4d4d"></div>
</div>
<div class="abs" style="left:240px;top:833px;width:32px;height:3px;background-image:radial-gradient(circle,#b9b9b9 1px,transparent 1.4px);background-size:4.6px 3px"></div>
<div class="abs" style="left:514px;top:920px;width:3px;height:34px;background-image:radial-gradient(circle,#b9b9b9 1px,transparent 1.4px);background-size:3px 4.6px"></div>
<div class="ptitle" style="left:6px;top:848.5px;font-size:23px;letter-spacing:.3px">Layers</div>
<div class="ic" style="left:456.0px;top:850.5px;width:22px;height:22px"><svg viewBox="0 0 22 22" style="width:22px;height:22px"><rect x="1.1" y="1.1" width="19.8" height="19.8" rx="3.6" fill="none" stroke="#6e6d68" stroke-width="2"/><path d="M8.8 7V4.8H17.2V13.2H14.8" fill="none" stroke="#6e6d68" stroke-width="1.9"/><rect x="5" y="8.6" width="8.6" height="8.4" fill="none" stroke="#6e6d68" stroke-width="1.9"/></svg></div><div class="ic" style="left:484.0px;top:850.5px;width:22px;height:22px"><svg viewBox="0 0 22 22" style="width:22px;height:22px"><rect x="1.1" y="1.1" width="19.8" height="19.8" rx="3.6" fill="none" stroke="#6e6d68" stroke-width="2"/><path d="M5.4 5.4L16.6 16.6M16.6 5.4L5.4 16.6" stroke="#6e6d68" stroke-width="4.2"/></svg></div>
<div class="ic" style="left:14.6px;top:895.0px;width:30px;height:30px"><svg viewBox="0 0 32 32" style="width:30px;height:30px"><g transform="translate(0 5) scale(1 .8)"><path d="M2 17L8 5L22 9L17 22Z" fill="#f3d63a"/><path d="M8 5L22 9L20 4L9 1Z" fill="#6b93d0"/><path d="M2 17L17 22L13 30L1 24Z" fill="#e8262d"/></g><path d="M30.5 5.5L21 15.5" stroke="#d98c34" stroke-width="3.8" stroke-linecap="round"/><path d="M14.5 15L23.5 22L18 29L9 22Z" fill="#f1d6a0" stroke="#c58a3a" stroke-width="1.1"/><path d="M11.5 24L14 21M14.5 26.2L17 23M17 28.2L19.5 25" stroke="#c58a3a" stroke-width="1"/></svg></div>
<div class="ic" style="left:65.0px;top:895.0px;width:30px;height:30px"><svg viewBox="0 0 32 32" style="width:30px;height:30px"><path d="M3 12V30.5H20" fill="none" stroke="#8c8c8c" stroke-width="1.5"/><path d="M6.5 9V27H24" fill="none" stroke="#8c8c8c" stroke-width="1.5"/><rect x="10" y="5.4" width="17" height="18" fill="#efefef" stroke="#8c8c8c" stroke-width="1.5"/><path d="M14.5 17V4.5C14.5 .8 19.5 .8 19.5 4.5V19.5C19.5 21 17 21 17 19.5V7" fill="none" stroke="#2d6396" stroke-width="1.8"/><rect x="18.6" y="19.4" width="12" height="12" rx="2" fill="#5b9b5a" stroke="#4d8a4c" stroke-width=".8"/><path d="M21 25.4H28.2M24.6 21.8V29" stroke="#fff" stroke-width="2.3"/></svg></div>
<div class="ic" style="left:116.0px;top:895.0px;width:30px;height:30px"><svg viewBox="0 0 32 32" style="width:30px;height:30px"><path d="M1.5 16C7 7.5 21 5.5 30 16C22 24.5 8 24.5 1.5 16Z" fill="#fbfbfb" stroke="#777" stroke-width="1.4"/><path d="M3 12C9 5 22 4 29 11" fill="none" stroke="#777" stroke-width="1.3"/><circle cx="15.6" cy="15.4" r="6.8" fill="#7aa3d6" stroke="#3b6296" stroke-width="1"/><circle cx="15.6" cy="15.4" r="2.9" fill="#1a1a1a"/><circle cx="13.6" cy="13.2" r="1.3" fill="#fff"/><path d="M23.5 26.5H34.5L29 32Z" fill="#555"/></svg></div>
<div class="ic" style="left:165.0px;top:895.0px;width:30px;height:30px"><svg viewBox="0 0 32 32" style="width:30px;height:30px"><path d="M2.6 5.6H29.2L19 17.8V31L13 27.4V17.8Z" fill="#6d9bd1" stroke="#3f6ca4" stroke-width="1.4" stroke-linejoin="round"/><path d="M14.5 8H19L17.6 18V28L16 27V18Z" fill="#a9c6e6" opacity=".7"/><rect x="2.6" y="2" width="26.6" height="4.4" fill="#f6e14c" stroke="#c9aa1c" stroke-width="1"/><path d="M23.5 26.5H34.5L29 32Z" fill="#555"/></svg></div>
<div class="ic" style="left:215.0px;top:895.0px;width:30px;height:30px"><svg viewBox="0 0 32 32" style="width:30px;height:30px"><text x="-2" y="21" font-family="Liberation Serif,serif" font-size="40" fill="#5c2d7e" stroke="#5c2d7e" stroke-width=".6">ε</text><path d="M14.5 18.5H29.5L28.5 32H15.5Z" fill="#a9aba6" stroke="#8a8c87" stroke-width="1"/><path d="M18.5 22H25.5L24.5 32H19.5Z" fill="#f2f2f2"/></svg></div>
<div class="ic" style="left:289.0px;top:895.0px;width:30px;height:30px"><svg viewBox="0 0 32 32" style="width:30px;height:30px"><path d="M2 5H30M5 5V27.5M5 13.5H9.5M5 25.5H9.5" fill="none" stroke="#a7a7a7" stroke-width="1.5"/><rect x="8.6" y="9.6" width="7.8" height="7.8" fill="#f7941d"/><rect x="11" y="12" width="3" height="3" fill="#ffd27a"/><rect x="8.6" y="21.4" width="7.8" height="7.8" fill="#f7941d"/><rect x="11" y="23.8" width="3" height="3" fill="#ffd27a"/><path d="M22 30.4L31.2 19H26.4V3.4H17.6V19H12.8Z" fill="#5e8cc0" stroke="#34567e" stroke-width="1.3" stroke-linejoin="round"/></svg></div>
<div class="ic" style="left:340.0px;top:895.0px;width:30px;height:30px"><svg viewBox="0 0 32 32" style="width:30px;height:30px"><path d="M2 5H30M5 5V27.5M5 13.5H9.5M5 25.5H9.5" fill="none" stroke="#a7a7a7" stroke-width="1.5"/><rect x="8.6" y="9.6" width="7.8" height="7.8" fill="#f7941d"/><rect x="11" y="12" width="3" height="3" fill="#ffd27a"/><rect x="8.6" y="21.4" width="7.8" height="7.8" fill="#f7941d"/><rect x="11" y="23.8" width="3" height="3" fill="#ffd27a"/><path d="M22 1.6L31.2 13H26.4V28.6H17.6V13H12.8Z" fill="#5e8cc0" stroke="#34567e" stroke-width="1.3" stroke-linejoin="round"/></svg></div>
<div class="ic" style="left:389.0px;top:895.0px;width:30px;height:30px"><svg viewBox="0 0 32 32" style="width:30px;height:30px"><rect x="2" y="2.2" width="22.6" height="22.6" fill="#f0f0ee" stroke="#8c8c8c" stroke-width="1.7"/><rect x="17.6" y="19.8" width="12.2" height="10.4" rx="2.2" fill="#ef4a57" stroke="#e03444" stroke-width=".8"/><path d="M20 25H27.4" stroke="#fff" stroke-width="2.4"/></svg></div>
<div class="arr" style="left:258.0px;top:905px"></div>
<div class="tree" style="left:0;top:942px;width:509px;height:636px;border-top:1px solid #c8c8c8;border-right:1px solid #c8c8c8;box-sizing:border-box">
<div class="lrow" style="top:0;background:#dcdcdc;height:37px"></div>
<div class="lrow" style="top:0px"><div class="cb" style="left:46.5px;top:6px"><svg viewBox="0 0 21 21"><path d="M4 10.5L8.6 17L17 3.5" fill="none" stroke="#1b1b1b" stroke-width="2.6" stroke-linejoin="miter"/></svg></div><b style="text-decoration:underline;text-decoration-thickness:2.4px;text-underline-offset:3px;">vanBigTrees</b></div>
<div class="lrow" style="top:36px"><div class="cb" style="left:46.5px;top:6px"><svg viewBox="0 0 21 21"><path d="M4 10.5L8.6 17L17 3.5" fill="none" stroke="#1b1b1b" stroke-width="2.6" stroke-linejoin="miter"/></svg></div><b style="">vanShoreline</b></div>
<div class="lrow" style="top:72px"><div class="cb" style="left:46.5px;top:6px"><svg viewBox="0 0 21 21"><path d="M4 10.5L8.6 17L17 3.5" fill="none" stroke="#1b1b1b" stroke-width="2.6" stroke-linejoin="miter"/></svg></div><b style="">vanHoods</b></div>
<div class="abs" style="left:99px;top:16px;width:5.4px;height:5.4px;border-radius:50%;background:#d9d46c;border:1px solid #8f8a4a;box-sizing:border-box"></div>
<div class="abs" style="left:86px;top:54.5px;width:30px;height:2.6px;background:#3a9fd5"></div>
<div class="abs" style="left:86px;top:75px;width:32px;height:32px;background:#a5735c;border:1px solid #8a5f4b;box-sizing:border-box"></div>
</div>
<div class="abs" style="left:522px;top:292px;width:2357px;height:1287px;background:#fff;border:1.3px solid #a9a9a9;box-sizing:border-box"></div>
<svg class="abs" style="left:0;top:0;width:2876px;height:1640px" viewBox="0 0 2876 1640"><path d="M927.1,711.4 930.9,707.1 937.2,710.1 947.2,707.1 953.5,711.4 961,713.9 968.5,718.9 976,717.2 984.8,714.6 991.1,721.4 1001.1,721.4 1008.6,719.7 1013.6,726.4 1022.4,727.2 1026.2,735.2 1034.9,738.2 1048.7,736.5 1066.3,732.7 1084.3,726.4 1092.6,734 1101.4,739 1110.1,738.2 1116.4,747.7 1123.9,752.8 1122.7,759 1128.9,765.3 1139,769 1151.5,769 1164,765.3 1174.1,761.5 1185.4,759 1192.9,760.3 1200.4,759 1214.2,761.5 1231.7,762.8 1240,767.8 1240,770.3 1255,774.1 1272.6,776.6 1290.1,776.6 1308.9,770.3 1315.2,771.6 1327.7,767.8 1336.5,762.3 1342.8,760.3 1351.6,750.7 1362.8,749.7 1375.4,750.2 1386.7,756 1397.9,755.8 1407.5,759 1415.5,746.5 1424.3,731.4 1430.5,718.9 1436.8,713.1 1450.6,712.6 1458.1,708.9 1463.1,701.4 1466.9,700.1 1465.6,706.4 1474.4,712.1 1478.2,711.4 1480.7,705.1 1486.9,702.1 1495.7,703.9 1505.7,710.1 1514.5,717.2 1519.5,725.2 1520.3,731.4 1517.8,733.2 1523.3,740.2 1528.3,746.5 1528.8,752.3 1523.3,756.5 1520.3,765.3 1520.8,775.3 1524.5,784.1 1532,789.1 1538.3,795.4 1542.1,792.9 1539.6,785.3 1537.1,777.8 1539.6,769 1545.8,764 1553.4,764 1559.6,772.8 1568.4,782.8 1577.2,792.9 1584.7,804.1 1585.4,812.4 1575.9,811.7 1563.4,810.4 1559.6,812.4 1565.9,818.4 1570.9,820.4 1577.2,827.5 1582.2,824.2 1587.2,818.4 1596,816.7 1608.5,817.4 1618.5,817.9 1626.1,824.2 1631.1,818.4 1638.6,815.9 1646.1,812.9 1651.1,816.7 1653.6,822.9 1664.9,822.9 1666.2,812.9 1673.7,802.9 1685,792.9 1698.8,783.3 1703.8,784.1 1716.3,777.8 1727.6,772.8 1741.4,771.6 1746.4,779.1 1748.9,772.8 1761.4,773.3 1771.5,772.8 1779,772.8 1778.5,766.5 1772.7,764.8 1767.7,764 1768.4,759 1774,756.5 1774.5,740.2 1763.9,738.2 1751.4,737.2 1741.4,736.5 1740.1,746.5 1732.6,750.7 1725.1,752.8 1718.8,756.5 1708.8,762.8 1698.8,767.8 1688.7,770.3 1681.2,764 1672.4,761.5 1664.9,764 1660.7,770.3 1659.1,780.3 1654.9,786.6 1646.1,786.6 1638.6,780.3 1629.8,777.8 1622.3,781.6 1618.5,791.6 1608.5,791.6 1601,785.3 1594.7,779.1 1589.7,781.6 1585.9,772.8 1580.9,769 1575.9,762.8 1567.1,755.3 1559.6,747.7 1556.4,740.7 1549.6,740.2 1544.6,734 1543.3,725.2 1537.1,717.7 1529.5,706.4 1522,697.6 1517,691.3 1515.8,683.8 1509.5,678.8 1503.2,668.8 1497,660 1498.2,665 1493.2,651 1489.4,645.9 1490.7,625.9 1491.9,608.3 1488.2,604.6 1489.4,597.1 1480.7,590.8 1471.9,585.8 1475.6,585.3 1507.7,552.7 1532,546.9 1549.6,529.4 1550.8,526.9 1558.4,526.9 1564.6,533.1 1565.9,539.4 1575.9,546.9 1584.7,553.2 1592.2,546.9 1598.5,551.9 1608,555.7 1602.2,563.2 1608.5,569.5 1616,575.8 1623.5,577 1631.1,573.2 1636.1,569.5 1643.6,574.5 1653.6,580.8 1666.2,584.5 1677.4,585.8 1688.7,588.3 1700,589.5 1691.2,595.8 1686.2,599.6 1688.7,603.3 1698.8,604.6 1713.8,595.8 1728.8,588.3 1751.4,585.8 1731.3,595.8 1710.8,608.8 1717.6,614.6 1727.6,614.6 1731.3,619.6 1735.1,624.6 1746.4,619.6 1756.4,622.1 1766.4,624.6 1776.5,623.4 1779,630.9 1786.5,632.9 1800.3,631.4 1802,614.6 1809.1,618.4 1814.1,632.2 1816.6,625.9 1815.3,622.1 1824.1,620.9 1819.1,614.6 1806.5,610.8 1797.8,609.6 1796,603.3 1797.8,583.3 1854.2,607.1 1856.7,590.8 1880,599.6 1880,597.8 1892,604.1 1891.3,637.9 1895,641.7 1900.6,641.7 1901.3,625.4 1905.1,624.1 1910.1,625.9 1911.3,648 1915.1,651.7 1920.6,650.5 1921.4,642.9 1925.1,636.7 1922.6,625.4 1928.9,617.9 1933.9,615.4 1938.2,616.6 1938.9,634.2 1940.2,614.1 1947.7,615.4 1959,610.4 1959,597.8 1954,594.1 1954,588.3 2007.8,605.3 2009.9,589 2019.1,589 2019.1,620.4 2027.9,620.9 2028.4,594.1 2029.2,610.4 2036.7,610.9 2046.7,615.4 2051.7,611.6 2054.2,604.1 2060.5,602.8 2059.2,596.6 2065.5,589 2071.8,582.8 2080.5,579 2084.3,574.8 2079.3,572.8 2083.1,569 2088.1,571.5 2100.6,562.7 2120.7,554 2135.7,546.4 2149.5,541.4 2152,548.9 2155.8,548.9 2164.5,543.9 2172,543.9 2175.8,551.4 2180.8,555.2 2187.1,556.5 2189.6,561.5 2197.1,558.2 2205.9,559.7 2217.2,562.7 2222.2,569 2227.2,574 2236,574.8 2243.5,579 2251,579 2258.5,582.3 2261,579 2259.8,574 2268.6,572.8 2276.1,576.5 2283.6,569 2293.6,561.5 2303.7,555.2 2309.9,555.2 2320,548.9 2326.2,549.7 2336.7,550.2 2335.7,660 2335.5,660 2334.5,760.3 2333.2,846.8 2333.7,935.8 2333.2,1025 2333.2,1020 2333.7,1195.5 2335,1385 2334.5,1290 2334.3,1415.3 2333.8,1531.8 2326.2,1532.6 2316.2,1530.1 2298.7,1521.8 2283.6,1513 2271.1,1505.5 2251.1,1501.7 2236,1497.5 2221,1496.7 2200.9,1494.2 2188.4,1490 2178.4,1493 2170.9,1490.5 2160.8,1491.7 2150.8,1491 2140.8,1492.5 2128.3,1491 2115.7,1490.5 2108.2,1491.7 2100.7,1490 2088.2,1489.2 2075.6,1487.5 2065.6,1485.5 2058.1,1486.7 2045.6,1484.2 2035.6,1480.4 2033,1474.9 2025.5,1475.9 2015.5,1470.9 2005.5,1465.4 1995.5,1459.9 1980.4,1454.9 1967.9,1452.9 1955.4,1455.9 1942.8,1460.9 1930.3,1464.2 1920.3,1463.4 1910.3,1467.9 1895.2,1471.7 1880.2,1474.9 1870.2,1481.7 1857.6,1485.5 1845.1,1489.2 1835.1,1488.5 1830.1,1491 1815,1491.7 1800,1493.5 1800,1492.5 1791.5,1492.5 1784,1495 1773.9,1492.5 1761.4,1492.5 1748.9,1491.7 1736.4,1490 1726.3,1492.5 1716.3,1490 1701.3,1491.7 1688.7,1496.7 1676.2,1503 1661.2,1509.3 1648.6,1515.5 1638.6,1516.8 1638.6,1519.3 1626.1,1526.8 1611.1,1535.6 1598.5,1541.8 1586,1546.1 1573.5,1549.4 1563.4,1549.4 1553.4,1546.9 1540.9,1545.6 1530.9,1540.6 1518.3,1536.8 1510.8,1536.8 1513.3,1531.1 1513.3,1525.6 1505.8,1520.5 1495.8,1510.5 1485.8,1503 1473.2,1495.5 1460.7,1489.2 1450.7,1485.5 1440.7,1479.2 1429.4,1462.9 1420.6,1450.4 1410.6,1437.8 1401.8,1431.6 1393,1421.6 1380.5,1410.3 1368,1400.8 1350.4,1392.7 1335.4,1385.2 1320.4,1378.2 1305.3,1373.9 1290.3,1373.4 1276.5,1373.9 1270.3,1368.9 1262.7,1370.7 1256.5,1370.2 1247.7,1365.2 1247.7,1369.7 1242.7,1372.7 1230.2,1371.4 1217.6,1365.7 1205.1,1358.2 1192.6,1348.9 1180,1337.6 1170,1327.6 1160,1321.3 1154,1322.8 1141.5,1319.6 1126.4,1318.3 1113.9,1315.8 1103.9,1312 1106.4,1304.5 1111.4,1294.5 1107.6,1302 1102.6,1310.8 1095.1,1309.5 1088.8,1306.3 1082.6,1299.5 1071.3,1288.2 1058.8,1275.7 1048.7,1261.9 1041.2,1245.6 1033.7,1228.1 1021.2,1213 988.6,1190.5 958.5,1169.2 944.7,1153.4 959,1122.3 1038.2,1168.4 1058.8,1147.3 1120.2,1171.7 1120.2,1155.4 1108.9,1155.4 1108.9,1135.3 1120.9,1134.1 1121.4,1051.8 1107.6,1051.3 1065,1020 1063.8,1025 1096.4,1016 1122.2,1018 1122.7,941.3 1078.8,940.3 1076.3,924.5 991.6,922 992.3,883.1 993.6,825 976,825.5 961.5,827.5 961,809.2 945.9,812.2 947.2,794.1 928.9,771.6 925.4,747.7 927.1,711.4Z" fill="#a5735c" stroke="#232323" stroke-width="1.2" stroke-linejoin="round"/>
<path d="M1200.4,762.8 1199.1,835.5 1197.4,891.9 1211.7,906.9 1211.7,927M1076.3,924.5 1151.5,925.7 1240,927.7M1523.3,747.2 1493.2,761.5 1484.4,769 1480.7,779.1 1479.4,835.5 1476.9,934.5M1240,927.7 1315.2,930.7 1430.5,935 1476.9,935.8 1529.5,937 1537.1,930.7 1549.6,927.7 1562.1,929.5 1575.9,936.5 1608.5,936.5 1693.7,938.8 1791.5,941.3 1880,944M1430.5,935 1429.3,993.4 1433,1008.5 1440.5,1025M1608.5,936.5 1607.3,1025M1697.5,785.3 1695.7,860.5 1693.7,938.8 1691.2,1025M1636.1,660 1573.4,723.9 1548.3,734.7M1801.5,660 1798.5,769M1779,766.5 1787.7,767.3 1798.5,769 1797.8,780.3 1794.5,790.4 1794,807.9 1824.1,832.5 1861.7,833 1880,835.5M1869.2,944 1869.2,1025M1251.3,928.2 1252.5,934.5 1265.1,950.8 1275.1,969.6 1290.1,990.9 1300.2,1008.5 1311.4,1022.2 1293.9,1011 1300.2,1025M1959,660 1957.7,760.3 1956,850.5 1956.5,880.6 1955.2,940.8 1954,945.8M1880,835.5 1927.6,849.8 1956,850.5M1880,944 1917.6,945 1954,945.8M1956.5,880.6 2030.4,881.6 2102.6,882.6M2102.6,660 2103.1,772.8 2102.6,882.6 2102.6,1025M2102.6,884.4 2188.3,885.6 2273.6,886.1 2286.1,881.9 2301.2,865.6 2316.2,853 2333.2,846.8M1543.3,537.6 1651.1,644.7 1631.1,665M1809.1,590.8 1804,592 1801.5,665M1959,594.1 1959.7,615.4 1958.2,660M2102.6,566.5 2103.1,660M1297.7,1020 1306.4,1033.8 1306.4,1174.2M1438,1020 1453.1,1047.6 1466.9,1075.2 1470.1,1088.9 1468.1,1102.7 1460.6,1111.5 1453.1,1114.8 1440.5,1112.3 1428,1109.7 1418,1114 1413,1122.8 1411.7,1145.3 1411,1176.7M1606,1020 1603.5,1120.3 1601.7,1183.4M1691.2,1020 1690,1057.6 1686.2,1070.1 1671.2,1083.9 1667.4,1105.2 1671.2,1115.3 1681.2,1129 1686.2,1137.8 1685.7,1160.4 1685,1188M1868,1020 1866.7,1120.3 1864.2,1195.5M1247,1174.2 1306.4,1174.2 1411,1176.7 1520.8,1180.4 1601.7,1183.4 1685,1188 1758.9,1192.5 1864.2,1195.5 1880,1196.2M1247,1174.2 1245.5,1270.7 1244.5,1355.9M1520.8,1180.4 1518.3,1270.7 1516.5,1339.6M1460.1,1338.9 1516.5,1339.6 1641.1,1342.6 1754.4,1345.1M1460.1,1338.9 1458.6,1385M1758.9,1192.5 1756.4,1270.7 1754.4,1345.1 1753.4,1385M2102.6,1020 2102.1,1085.2 2089.3,1102.7 2087.6,1120.3 2086.1,1195.5M1880,1196.2 1959,1198 2030.4,1198.7 2046.7,1195.5 2086.1,1195.5 2130.7,1196.7 2157,1196.7 2170.8,1195.5 2234.7,1195.5 2241,1191.7 2247.3,1182.9 2261,1193 2273.6,1203 2283.6,1206 2306.2,1204.3 2333.2,1202.2M1959,1198 1957.2,1270.7 1955.7,1332.1 1959,1342.1 1959,1385M2157,1196.7 2157,1233.8 2148.2,1234.3 2146.2,1295.8 2144.5,1363.4 2140.7,1374.7 2134.4,1385M1246.5,1290 1245.2,1361.4M1518.3,1290 1517.1,1338.9M1460.2,1338.4 1517.1,1338.9 1636.1,1341.9 1754.4,1344.4M1460.2,1338.4 1458.2,1390.2 1457.2,1444.1 1460.2,1449.1 1456.2,1452.9 1450.2,1483M1757.1,1290 1754.4,1344.4 1751.9,1440.4 1750.1,1489.2M1956.6,1290 1955.9,1332.6 1958.6,1341.4 1958.4,1451.6M2146.6,1290 2145.3,1362.7 2140.8,1375.2 2130.8,1390.2 2115.7,1410.3 2112.7,1420.3 2110.7,1442.9 2102,1462.9 2100.7,1470.4 2101.5,1489.2" fill="none" stroke="#232323" stroke-width="1.8" stroke-linejoin="round"/>
<path d="M633.8,939.5C633.8,939.5 637.1,930.3 640.1,925.7C643.1,921.1 646.9,918.0 650.1,914.4C653.3,910.8 658.9,904.4 658.9,904.4M658.9,904.4C658.9,904.4 661.5,897.2 662.7,893.1C663.9,889.0 665.3,883.3 665.7,880.6C666.1,877.9 666.8,875.5 665.7,873.1C664.6,870.7 662.1,870.0 660.2,868.1C658.3,866.2 655.9,864.3 653.9,861.8C651.9,859.3 651.1,855.1 648.9,853.5C646.7,851.9 643.1,853.4 641.4,853C639.7,852.6 637.5,852.2 637.1,850.5C636.7,848.8 638.7,847.7 640.1,846.8C641.5,845.9 644.0,847.1 644.6,845.5C645.2,843.9 644.1,838.2 645.1,834.2C646.1,830.2 648.2,826.9 650.1,822.9C652.0,818.9 655.3,813.0 656.4,810.4C657.5,807.8 658.7,804.3 658.9,802.9C659.1,801.5 657.5,800.5 657.7,799.1C657.9,797.7 659.8,790.6 661.4,787.8C663.0,785.0 665.2,783.6 667.7,781.6C670.2,779.6 672.7,778.6 675.2,776.6C677.7,774.6 682.8,770.0 686.5,766.5C690.2,763.0 694.4,759.0 696.5,756.5C698.6,754.0 699.1,751.2 701.5,749C703.9,746.8 707.2,745.9 710.3,744C713.4,742.1 717.3,739.8 720.3,737.7C723.3,735.6 726.7,733.7 728.4,731.4C730.1,729.1 728.8,726.2 730.4,723.9C732.0,721.6 737.3,718.4 739.1,716.4C740.9,714.4 741.0,712.0 742.9,710.1C744.8,708.2 747.7,706.9 750.4,705.1C753.1,703.3 755.5,702.3 757.9,700.1C760.3,697.9 761.5,693.8 764.2,692.1C766.9,690.4 771.4,690.5 773,690.6C774.6,690.7 775.1,693.2 776.7,693.1C778.3,693.0 780.5,690.6 783,690.1C785.5,689.6 791.3,690.3 795.5,689.6C799.7,688.9 804.4,686.4 806.8,686.3C809.2,686.2 810.7,688.5 813.1,688.8C815.5,689.1 819.6,687.4 823.1,688.1C826.6,688.8 832.5,692.1 835.6,693.1C838.7,694.1 841.9,694.2 844.4,695.1C846.9,696.0 848.1,699.2 850.7,698.9C853.3,698.6 857.1,693.9 860.7,693.1C864.3,692.3 867.1,693.8 870.7,694.6C874.3,695.4 878.9,697.2 883.3,698.1C887.7,699.0 891.7,699.0 895.8,699.6C899.9,700.2 903.5,700.0 907.1,701.4C910.7,702.8 912.5,706.0 915.9,707.6C919.3,709.2 923.8,710.2 925.9,710.1C928.0,710.0 928.8,707.1 930.9,707.1C933.0,707.1 934.7,710.1 937.2,710.1C939.7,710.1 944.5,706.9 947.2,707.1C949.9,707.3 951.0,710.2 953.5,711.4C956.0,712.6 958.5,712.6 961,713.9C963.5,715.2 965.8,718.3 968.5,718.9C971.2,719.5 973.3,717.9 976,717.2C978.7,716.5 981.6,713.7 984.8,714.6C988.0,715.5 988.0,720.1 991.1,721.4C994.2,722.7 998.3,721.7 1001.1,721.4C1003.9,721.1 1006.0,718.7 1008.6,719.7C1011.2,720.7 1011.0,725.0 1013.6,726.4C1016.2,727.8 1019.8,725.4 1022.4,727.2C1025.0,729.0 1023.8,733.1 1026.2,735.2C1028.6,737.3 1031.6,738.0 1034.9,738.2C1038.2,738.4 1043.8,737.4 1048.7,736.5C1053.6,735.6 1060.1,734.5 1066.3,732.7C1072.5,730.9 1080.3,726.2 1084.3,726.4C1088.3,726.6 1089.7,731.8 1092.6,734C1095.5,736.2 1098.3,738.3 1101.4,739C1104.5,739.7 1107.4,736.6 1110.1,738.2C1112.8,739.8 1114.2,745.3 1116.4,747.7C1118.6,750.1 1122.8,750.8 1123.9,752.8C1125.0,754.8 1121.9,756.9 1122.7,759C1123.5,761.1 1126.2,763.6 1128.9,765.3C1131.6,767.0 1135.2,768.4 1139,769C1142.8,769.6 1147.0,769.7 1151.5,769C1156.0,768.3 1160.3,766.5 1164,765.3C1167.7,764.1 1170.4,762.6 1174.1,761.5C1177.8,760.4 1182.7,759.2 1185.4,759C1188.1,758.8 1190.2,760.3 1192.9,760.3C1195.6,760.3 1197.7,758.8 1200.4,759C1203.1,759.2 1209.2,760.9 1214.2,761.5C1219.2,762.1 1228.3,762.0 1231.7,762.8C1235.1,763.6 1240.0,767.8 1240,767.8M658.9,904.4C658.9,904.4 660.0,908.7 661.4,910.7C662.8,912.7 668.7,919.0 672.7,923.2C676.7,927.4 682.7,933.1 684,934.5C685.3,935.9 686.3,937.8 687.7,938.3C689.1,938.8 690.9,938.3 691.5,937C692.1,935.7 692.3,932.8 691.5,930.7C690.7,928.6 686.5,924.5 686.5,924.5C686.5,924.5 689.1,923.8 690.2,924.5C691.3,925.2 694.7,928.2 696.5,930.7C698.3,933.2 698.9,935.6 700.3,938.3C701.7,941.0 703.8,944.8 705.3,948.3C706.8,951.8 707.9,954.6 709,958.3C710.1,962.0 712.3,969.8 712.8,973.4C713.3,977.0 711.3,980.1 712.8,983.4C714.3,986.7 718.5,988.9 721.6,992.2C724.7,995.5 727.0,998.8 730.4,1002.2C733.8,1005.6 736.7,1007.9 740.4,1011C744.1,1014.1 751.1,1019.6 752.9,1021C754.7,1022.4 757.9,1025.0 757.9,1025M1240,770.3C1240.0,770.3 1249.5,773.0 1255,774.1C1260.5,775.2 1266.3,776.2 1272.6,776.6C1278.9,777.0 1283.9,777.7 1290.1,776.6C1296.3,775.5 1306.6,770.8 1308.9,770.3C1311.2,769.8 1312.9,771.9 1315.2,771.6C1317.5,771.3 1324.3,769.3 1327.7,767.8C1331.1,766.3 1334.4,763.4 1336.5,762.3C1338.6,761.2 1340.9,761.7 1342.8,760.3C1344.7,758.9 1348.0,752.6 1351.6,750.7C1355.2,748.8 1358.8,749.8 1362.8,749.7C1366.8,749.6 1371.0,749.0 1375.4,750.2C1379.8,751.4 1382.8,755.0 1386.7,756C1390.6,757.0 1394.3,755.3 1397.9,755.8C1401.5,756.3 1404.3,760.7 1407.5,759C1410.7,757.3 1412.7,751.1 1415.5,746.5C1418.3,741.9 1421.9,735.8 1424.3,731.4C1426.7,727.0 1428.8,721.4 1430.5,718.9C1432.2,716.4 1433.9,714.0 1436.8,713.1C1439.7,712.2 1447.6,713.2 1450.6,712.6C1453.6,712.0 1455.9,710.9 1458.1,708.9C1460.3,706.9 1462.1,702.4 1463.1,701.4C1464.1,700.4 1466.9,700.1 1466.9,700.1C1466.9,700.1 1464.4,704.4 1465.6,706.4C1466.8,708.4 1473.1,711.6 1474.4,712.1C1475.7,712.6 1477.3,712.4 1478.2,711.4C1479.1,710.4 1479.0,706.9 1480.7,705.1C1482.4,703.3 1484.4,702.3 1486.9,702.1C1489.4,701.9 1492.7,702.6 1495.7,703.9C1498.7,705.2 1502.4,707.7 1505.7,710.1C1509.0,712.5 1512.2,714.7 1514.5,717.2C1516.8,719.7 1518.6,723.1 1519.5,725.2C1520.4,727.3 1520.5,730.3 1520.3,731.4C1520.1,732.5 1517.4,732.2 1517.8,733.2C1518.2,734.2 1521.5,737.9 1523.3,740.2C1525.1,742.5 1527.4,744.6 1528.3,746.5C1529.2,748.4 1529.7,750.4 1528.8,752.3C1527.9,754.2 1524.7,754.4 1523.3,756.5C1521.9,758.6 1520.7,762.0 1520.3,765.3C1519.9,768.6 1520.1,771.9 1520.8,775.3C1521.5,778.7 1522.5,781.6 1524.5,784.1C1526.5,786.6 1529.5,787.1 1532,789.1C1534.5,791.1 1536.8,794.8 1538.3,795.4C1539.8,796.0 1541.9,794.5 1542.1,792.9C1542.3,791.3 1540.5,788.0 1539.6,785.3C1538.7,782.6 1537.1,780.6 1537.1,777.8C1537.1,775.0 1538.1,771.4 1539.6,769C1541.1,766.6 1543.2,764.9 1545.8,764C1548.4,763.1 1551.1,762.5 1553.4,764C1555.7,765.5 1557.2,769.8 1559.6,772.8C1562.0,775.8 1565.2,779.2 1568.4,782.8C1571.6,786.4 1574.3,789.1 1577.2,792.9C1580.1,796.7 1583.5,801.3 1584.7,804.1C1585.9,806.9 1587.7,810.4 1585.4,812.4C1583.1,814.4 1579.3,812.0 1575.9,811.7C1572.5,811.4 1564.9,810.3 1563.4,810.4C1561.9,810.5 1559.6,812.4 1559.6,812.4C1559.6,812.4 1564.3,817.3 1565.9,818.4C1567.5,819.5 1569.4,819.2 1570.9,820.4C1572.4,821.6 1575.2,826.8 1577.2,827.5C1579.2,828.2 1580.6,825.7 1582.2,824.2C1583.8,822.7 1584.8,819.7 1587.2,818.4C1589.6,817.1 1592.8,816.9 1596,816.7C1599.2,816.5 1604.9,817.2 1608.5,817.4C1612.1,817.6 1615.2,816.6 1618.5,817.9C1621.8,819.2 1623.3,824.1 1626.1,824.2C1628.9,824.3 1628.8,819.9 1631.1,818.4C1633.4,816.9 1635.9,816.9 1638.6,815.9C1641.3,814.9 1643.8,812.8 1646.1,812.9C1648.4,813.0 1649.7,814.9 1651.1,816.7C1652.5,818.5 1651.4,821.9 1653.6,822.9C1655.8,823.9 1662.1,825.2 1664.9,822.9C1667.7,820.6 1664.7,816.2 1666.2,812.9C1667.7,809.6 1670.6,806.2 1673.7,802.9C1676.8,799.6 1680.7,796.2 1685,792.9C1689.3,789.6 1697.1,784.1 1698.8,783.3C1700.5,782.5 1702.1,784.6 1703.8,784.1C1705.5,783.6 1712.3,779.7 1716.3,777.8C1720.3,775.9 1723.3,773.9 1727.6,772.8C1731.9,771.7 1738.3,770.6 1741.4,771.6C1744.5,772.6 1746.4,779.1 1746.4,779.1C1746.4,779.1 1746.6,773.7 1748.9,772.8C1751.2,771.9 1757.8,773.3 1761.4,773.3C1765.0,773.3 1768.8,772.9 1771.5,772.8C1774.2,772.7 1777.3,774.3 1779,772.8C1780.7,771.3 1779.8,768.2 1778.5,766.5C1777.2,764.8 1774.5,765.2 1772.7,764.8C1770.9,764.4 1768.8,765.5 1767.7,764C1766.6,762.5 1767.2,760.4 1768.4,759C1769.6,757.6 1773.3,758.6 1774,756.5C1774.7,754.4 1776.4,743.6 1774.5,740.2C1772.6,736.8 1767.8,738.7 1763.9,738.2C1760.0,737.7 1755.0,737.5 1751.4,737.2C1747.8,736.9 1744.2,734.2 1741.4,736.5C1738.6,738.8 1741.7,743.9 1740.1,746.5C1738.5,749.1 1735.2,749.6 1732.6,750.7C1730.0,751.8 1727.5,751.8 1725.1,752.8C1722.7,753.8 1721.0,755.1 1718.8,756.5C1716.6,757.9 1712.3,760.8 1708.8,762.8C1705.3,764.8 1702.3,766.5 1698.8,767.8C1695.3,769.1 1692.1,771.0 1688.7,770.3C1685.3,769.6 1684.1,765.6 1681.2,764C1678.3,762.4 1675.2,761.5 1672.4,761.5C1669.6,761.5 1667.1,762.4 1664.9,764C1662.7,765.6 1661.6,767.7 1660.7,770.3C1659.8,772.9 1660.0,777.7 1659.1,780.3C1658.2,782.9 1657.4,785.4 1654.9,786.6C1652.4,787.8 1649.1,787.7 1646.1,786.6C1643.1,785.5 1641.5,781.9 1638.6,780.3C1635.7,778.7 1632.8,777.6 1629.8,777.8C1626.8,778.0 1624.2,779.3 1622.3,781.6C1620.4,783.9 1621.4,789.5 1618.5,791.6C1615.6,793.7 1611.8,792.8 1608.5,791.6C1605.2,790.4 1603.4,787.4 1601,785.3C1598.6,783.2 1596.6,779.7 1594.7,779.1C1592.8,778.5 1591.3,782.8 1589.7,781.6C1588.1,780.4 1587.2,774.7 1585.9,772.8C1584.6,770.9 1582.5,770.6 1580.9,769C1579.3,767.4 1577.9,764.8 1575.9,762.8C1573.9,760.8 1569.9,757.9 1567.1,755.3C1564.3,752.7 1561.2,749.9 1559.6,747.7C1558.0,745.5 1558.4,742.2 1556.4,740.7C1554.4,739.2 1551.7,741.4 1549.6,740.2C1547.5,739.0 1545.7,736.6 1544.6,734C1543.5,731.4 1544.6,728.1 1543.3,725.2C1542.0,722.3 1539.2,720.5 1537.1,717.7C1535.0,714.9 1532.0,709.7 1529.5,706.4C1527.0,703.1 1523.8,699.8 1522,697.6C1520.2,695.4 1518.1,693.8 1517,691.3C1515.9,688.8 1517.2,686.1 1515.8,683.8C1514.4,681.5 1511.4,681.0 1509.5,678.8C1507.6,676.6 1505.3,672.0 1503.2,668.8C1501.1,665.6 1497.0,660.0 1497,660M1498.2,665C1498.2,665.0 1494.2,653.1 1493.2,651C1492.2,648.9 1489.6,648.2 1489.4,645.9C1489.2,643.6 1490.3,632.2 1490.7,625.9C1491.1,619.6 1492.1,610.2 1491.9,608.3C1491.7,606.4 1488.6,606.4 1488.2,604.6C1487.8,602.8 1490.7,599.5 1489.4,597.1C1488.1,594.7 1483.8,592.8 1480.7,590.8C1477.6,588.8 1474.8,588.0 1471.9,585.8C1469.0,583.6 1466.9,581.2 1464.4,578.3C1461.9,575.4 1459.0,570.8 1455.6,567C1452.2,563.2 1447.4,558.8 1445.6,557C1443.8,555.2 1441.1,553.2 1440.5,551.9C1439.9,550.6 1441.2,549.5 1441.8,548.2C1442.4,546.9 1444.1,546.0 1444.3,544.4C1444.5,542.8 1444.2,539.4 1443.1,536.9C1442.0,534.4 1440.3,532.2 1438,530.6C1435.7,529.0 1433.1,529.2 1430.5,528.1C1427.9,527.0 1422.1,524.4 1420.5,523.1C1418.9,521.8 1418.0,520.1 1418,518.1C1418.0,516.1 1421.5,514.8 1420.5,513.1C1419.5,511.4 1415.6,510.2 1413,509.3C1410.4,508.4 1408.2,508.8 1405.5,508.1C1402.8,507.4 1400.4,507.1 1397.9,505.6C1395.4,504.1 1392.6,502.0 1390.4,499.3C1388.2,496.6 1387.1,493.7 1385.4,490.5C1383.7,487.3 1381.5,484.0 1380.4,480.5C1379.3,477.0 1379.1,472.8 1379.1,470.5C1379.1,468.2 1379.0,466.0 1380.4,464.2C1381.8,462.4 1385.3,460.7 1387.9,459.2C1390.5,457.7 1393.9,457.1 1395.4,455.4C1396.9,453.7 1396.0,451.1 1396.7,449.2C1397.4,447.3 1399.2,446.1 1399.2,444.1C1399.2,442.1 1399.1,438.1 1396.7,436.6C1394.3,435.1 1386.7,436.6 1386.7,436.6C1386.7,436.6 1396.4,434.6 1399.2,430.4C1402.0,426.2 1401.6,419.1 1402.9,412.8C1404.2,406.5 1406.1,396.4 1406.7,392.8C1407.3,389.2 1405.7,385.0 1407.5,382.7C1409.3,380.4 1413.0,383.0 1415.5,381.5C1418.0,380.0 1420.0,375.9 1421.7,374C1423.4,372.1 1426.1,371.4 1426.8,368.9C1427.5,366.4 1425.9,362.5 1425.5,360.2C1425.1,357.9 1423.2,355.9 1424.3,353.9C1425.4,351.9 1429.6,348.6 1433,346.4C1436.4,344.2 1439.2,342.6 1443.1,341.4C1447.0,340.2 1451.3,341.0 1455.6,339.6C1459.9,338.2 1467.2,333.2 1469.4,332.6C1471.6,332.0 1473.6,334.0 1475.6,333.8C1477.6,333.6 1478.7,331.8 1480.7,331.3C1482.7,330.8 1487.1,330.4 1490.7,329.6C1494.3,328.8 1497.1,327.7 1500.7,327.1C1504.3,326.5 1508.5,325.6 1510.7,326.3C1512.9,327.0 1512.6,330.0 1514.5,331.3C1516.4,332.6 1520.8,332.8 1523.3,335.1C1525.8,337.4 1526.2,340.9 1528.3,343.9C1530.4,346.9 1535.8,353.2 1537.1,355.2C1538.4,357.2 1538.4,359.3 1539.6,361.4C1540.8,363.5 1543.3,366.3 1544.6,368.9C1545.9,371.5 1545.9,373.9 1547.1,376.5C1548.3,379.1 1552.4,384.7 1553.4,387.7C1554.4,390.7 1553.0,393.9 1553.9,396.5C1554.8,399.1 1556.4,400.9 1558.4,402.8C1560.4,404.7 1568.1,410.0 1570.9,412.8C1573.7,415.6 1576.3,420.0 1577.2,421.6C1578.1,423.2 1577.5,425.0 1578.4,426.6C1579.3,428.2 1582.7,433.0 1584.7,435.4C1586.7,437.8 1588.5,439.8 1591,441.6C1593.5,443.4 1595.8,444.1 1598.5,445.4C1601.2,446.7 1604.5,449.0 1607.3,449.2C1610.1,449.4 1612.1,445.7 1614.8,446.7C1617.5,447.7 1618.6,451.6 1621,454.2C1623.4,456.8 1629.5,463.2 1632.3,465.5C1635.1,467.8 1637.9,468.8 1641.1,470.5C1644.3,472.2 1649.2,475.2 1653.6,476.7C1658.0,478.2 1663.6,479.4 1666.2,479.2C1668.8,479.0 1670.8,477.3 1672.4,475.5C1674.0,473.7 1673.2,470.9 1674.9,469.2C1676.6,467.5 1678.9,465.9 1681.2,466.7C1683.5,467.5 1685.3,470.2 1685.7,473C1686.1,475.8 1684.7,483.9 1684.2,488C1683.7,492.1 1685.7,496.7 1682.5,499.3C1679.3,501.9 1673.2,500.3 1668.7,500.5C1664.2,500.7 1659.9,499.9 1656.1,500.5C1652.3,501.1 1648.1,503.3 1646.1,504.3C1644.1,505.3 1641.8,506.4 1641.1,508.1C1640.4,509.8 1642.6,511.5 1642.4,513.1C1642.2,514.7 1639.8,516.8 1639.8,516.8C1639.8,516.8 1651.2,518.5 1653.6,521.9C1656.0,525.3 1652.2,530.4 1651.1,533.1C1650.0,535.8 1648.2,537.5 1646.1,539.4C1644.0,541.3 1641.1,543.1 1638.6,544.4C1636.1,545.7 1633.3,547.1 1631.1,546.9C1628.9,546.7 1626.8,545.3 1626.1,543.2C1625.4,541.1 1625.7,535.1 1626.1,530.6C1626.5,526.1 1627.7,522.6 1628.6,518.1C1629.5,513.6 1631.1,504.3 1631.1,504.3C1631.1,504.3 1624.1,504.5 1621,505.6C1617.9,506.7 1615.6,508.1 1613.5,510.6C1611.4,513.1 1611.5,517.2 1609.8,519.3C1608.1,521.4 1606.1,523.3 1603.5,523.1C1600.9,522.9 1598.2,520.5 1596,518.1C1593.8,515.7 1592.2,511.2 1591,509.3C1589.8,507.4 1588.8,505.2 1587.2,504.3C1585.6,503.4 1583.7,503.4 1582.2,504.3C1580.7,505.2 1577.5,510.4 1574.7,511.8C1571.9,513.2 1569.1,512.4 1565.9,512.6C1562.7,512.8 1558.5,511.9 1555.9,513.1C1553.3,514.3 1551.7,516.7 1550.8,519.3C1549.9,521.9 1548.9,525.0 1550.8,526.9C1552.7,528.8 1555.9,525.8 1558.4,526.9C1560.9,528.0 1563.4,531.1 1564.6,533.1C1565.8,535.1 1564.4,537.6 1565.9,539.4C1567.4,541.2 1572.8,544.6 1575.9,546.9C1579.0,549.2 1581.2,553.2 1584.7,553.2C1588.2,553.2 1589.3,547.2 1592.2,546.9C1595.1,546.6 1596.0,550.5 1598.5,551.9C1601.0,553.3 1608.0,555.7 1608,555.7C1608.0,555.7 1602.1,560.0 1602.2,563.2C1602.3,566.4 1606.1,567.3 1608.5,569.5C1610.9,571.7 1613.6,574.6 1616,575.8C1618.4,577.0 1620.8,577.5 1623.5,577C1626.2,576.5 1629.2,574.3 1631.1,573.2C1633.0,572.1 1633.9,569.3 1636.1,569.5C1638.3,569.7 1640.9,572.7 1643.6,574.5C1646.3,576.3 1649.7,579.1 1653.6,580.8C1657.5,582.5 1662.2,583.7 1666.2,584.5C1670.2,585.3 1673.4,585.1 1677.4,585.8C1681.4,586.5 1684.7,587.6 1688.7,588.3C1692.7,589.0 1700.0,589.5 1700,589.5C1700.0,589.5 1693.0,594.5 1691.2,595.8C1689.4,597.1 1686.7,598.1 1686.2,599.6C1685.7,601.1 1687.2,602.7 1688.7,603.3C1690.2,603.9 1695.3,605.6 1698.8,604.6C1702.3,603.6 1708.5,598.7 1713.8,595.8C1719.1,592.9 1723.0,589.9 1728.8,588.3C1734.6,586.7 1751.4,585.8 1751.4,585.8C1751.4,585.8 1738.3,591.8 1731.3,595.8C1724.3,599.8 1710.8,608.8 1710.8,608.8C1710.8,608.8 1714.6,613.6 1717.6,614.6C1720.6,615.6 1725.5,613.8 1727.6,614.6C1729.7,615.4 1730.0,617.8 1731.3,619.6C1732.6,621.4 1732.8,624.6 1735.1,624.6C1737.4,624.6 1742.7,620.0 1746.4,619.6C1750.1,619.2 1752.8,621.2 1756.4,622.1C1760.0,623.0 1762.7,624.4 1766.4,624.6C1770.1,624.8 1774.0,622.1 1776.5,623.4C1779.0,624.7 1777.0,629.0 1779,630.9C1781.0,632.8 1783.7,632.8 1786.5,632.9C1789.3,633.0 1797.1,635.2 1800.3,631.4C1803.5,627.6 1802.0,614.6 1802,614.6C1802.0,614.6 1807.5,616.0 1809.1,618.4C1810.7,620.8 1814.1,632.2 1814.1,632.2C1814.1,632.2 1816.4,627.3 1816.6,625.9C1816.8,624.5 1814.1,622.9 1815.3,622.1C1816.5,621.3 1824.1,620.9 1824.1,620.9C1824.1,620.9 1821.6,616.0 1819.1,614.6C1816.6,613.2 1809.6,611.5 1806.5,610.8C1803.4,610.1 1799.7,611.0 1797.8,609.6C1795.9,608.2 1796.0,605.7 1796,603.3C1796.0,600.9 1797.8,583.3 1797.8,583.3C1797.8,583.3 1854.2,607.1 1854.2,607.1C1854.2,607.1 1856.7,590.8 1856.7,590.8C1856.7,590.8 1880.0,599.6 1880,599.6M1880,597.8C1880.0,597.8 1890.7,599.4 1892,604.1C1893.3,608.8 1891.1,636.0 1891.3,637.9C1891.5,639.8 1893.2,641.0 1895,641.7C1896.8,642.4 1899.9,643.6 1900.6,641.7C1901.3,639.8 1900.9,626.8 1901.3,625.4C1901.7,624.0 1903.7,624.0 1905.1,624.1C1906.5,624.2 1909.6,624.0 1910.1,625.9C1910.6,627.8 1910.9,646.1 1911.3,648C1911.7,649.9 1913.3,651.2 1915.1,651.7C1916.9,652.2 1919.4,652.1 1920.6,650.5C1921.8,648.9 1920.6,645.4 1921.4,642.9C1922.2,640.4 1924.9,639.3 1925.1,636.7C1925.3,634.1 1921.9,628.9 1922.6,625.4C1923.3,621.9 1927.4,619.2 1928.9,617.9C1930.4,616.6 1932.3,615.6 1933.9,615.4C1935.5,615.2 1937.8,615.0 1938.2,616.6C1938.6,618.2 1938.9,634.2 1938.9,634.2C1938.9,634.2 1939.0,616.6 1940.2,614.1C1941.4,611.6 1945.0,615.9 1947.7,615.4C1950.4,614.9 1956.6,614.1 1959,610.4C1961.4,606.7 1959.7,599.9 1959,597.8C1958.3,595.7 1955.0,595.9 1954,594.1C1953.0,592.3 1954.0,588.3 1954,588.3C1954.0,588.3 2001.9,605.2 2007.8,605.3C2013.7,605.4 2008.0,591.7 2009.9,589C2011.8,586.3 2018.2,585.8 2019.1,589C2020.0,592.2 2018.3,617.3 2019.1,620.4C2019.9,623.5 2026.8,623.9 2027.9,620.9C2029.0,617.9 2028.4,594.1 2028.4,594.1C2028.4,594.1 2028.0,608.0 2029.2,610.4C2030.4,612.8 2034.1,610.2 2036.7,610.9C2039.3,611.6 2044.4,615.3 2046.7,615.4C2049.0,615.5 2050.4,613.5 2051.7,611.6C2053.0,609.7 2052.6,605.7 2054.2,604.1C2055.8,602.5 2059.2,604.7 2060.5,602.8C2061.8,600.9 2058.4,598.7 2059.2,596.6C2060.0,594.5 2063.4,591.3 2065.5,589C2067.6,586.7 2069.2,584.6 2071.8,582.8C2074.4,581.0 2078.8,580.1 2080.5,579C2082.2,577.9 2084.3,574.8 2084.3,574.8C2084.3,574.8 2079.3,572.8 2079.3,572.8C2079.3,572.8 2081.2,569.3 2083.1,569C2085.0,568.7 2086.2,572.2 2088.1,571.5C2090.0,570.8 2095.8,565.3 2100.6,562.7C2105.4,560.1 2115.2,556.5 2120.7,554C2126.2,551.5 2130.9,548.5 2135.7,546.4C2140.5,544.3 2146.7,541.0 2149.5,541.4C2152.3,541.8 2151.1,547.9 2152,548.9C2152.9,549.9 2154.5,549.4 2155.8,548.9C2157.1,548.4 2161.9,544.7 2164.5,543.9C2167.1,543.1 2169.8,542.4 2172,543.9C2174.2,545.4 2174.4,549.6 2175.8,551.4C2177.2,553.2 2178.7,554.3 2180.8,555.2C2182.9,556.1 2185.5,555.3 2187.1,556.5C2188.7,557.7 2187.6,561.2 2189.6,561.5C2191.6,561.8 2194.2,558.5 2197.1,558.2C2200.0,557.9 2202.8,559.0 2205.9,559.7C2209.0,560.4 2214.7,561.3 2217.2,562.7C2219.7,564.1 2220.5,567.1 2222.2,569C2223.9,570.9 2224.9,573.0 2227.2,574C2229.5,575.0 2233.0,573.9 2236,574.8C2239.0,575.7 2240.9,578.3 2243.5,579C2246.1,579.7 2248.4,578.4 2251,579C2253.6,579.6 2257.0,582.3 2258.5,582.3C2260.0,582.3 2260.8,580.5 2261,579C2261.2,577.5 2258.4,575.2 2259.8,574C2261.2,572.8 2265.6,572.3 2268.6,572.8C2271.6,573.3 2273.2,577.2 2276.1,576.5C2279.0,575.8 2280.7,571.5 2283.6,569C2286.5,566.5 2290.1,563.9 2293.6,561.5C2297.1,559.1 2301.6,556.0 2303.7,555.2C2305.8,554.4 2307.8,556.0 2309.9,555.2C2312.0,554.4 2317.9,549.6 2320,548.9C2322.1,548.2 2324.0,549.8 2326.2,549.7C2328.4,549.6 2340.8,547.7 2340.8,547.7M749.2,1020C749.2,1020.0 753.9,1025.7 756.7,1027.5C759.5,1029.3 762.2,1029.7 765.5,1030.5C768.8,1031.3 772.1,1030.8 775.5,1032C778.9,1033.2 782.1,1035.2 785.5,1037.5C788.9,1039.8 794.3,1044.5 798,1047.6C801.7,1050.7 804.5,1053.2 808.1,1056.3C811.7,1059.4 814.3,1062.1 818.1,1065.1C821.9,1068.1 826.8,1070.9 830.6,1073.9C834.4,1076.9 837.2,1079.9 840.7,1082.7C844.2,1085.5 847.2,1087.4 850.7,1090.2C854.2,1093.0 857.6,1096.3 860.7,1099C863.8,1101.7 866.9,1103.8 869.5,1106.5C872.1,1109.2 874.9,1113.2 875.8,1114.8C876.7,1116.4 875.7,1118.5 877,1119.8C878.3,1121.1 880.2,1120.9 882,1120.8C883.8,1120.7 888.5,1119.1 890.8,1119C893.1,1118.9 897.1,1120.3 897.1,1120.3C897.1,1120.3 890.8,1117.3 890.8,1117.3C890.8,1117.3 893.3,1119.9 894.6,1121.5C895.9,1123.1 900.2,1129.0 902.1,1131.6C904.0,1134.2 906.3,1137.4 907.1,1139.1C907.9,1140.8 908.3,1142.4 907.8,1144.1C907.3,1145.8 906.3,1148.1 904.6,1147.8C902.9,1147.5 901.5,1144.5 899.6,1142.8C897.7,1141.1 895.9,1139.1 893.3,1137.8C890.7,1136.5 886.8,1135.5 884.5,1135.3C882.2,1135.1 879.8,1135.4 878.3,1136.6C876.8,1137.8 875.8,1139.7 876.3,1141.6C876.8,1143.5 878.9,1145.1 880.8,1146.6C882.7,1148.1 887.6,1150.8 890.8,1152.9C894.0,1155.0 896.7,1156.6 899.6,1159.1C902.5,1161.6 908.2,1167.8 909.6,1169.2C911.0,1170.6 913.4,1172.9 913.4,1172.9C913.4,1172.9 908.2,1166.8 904.6,1164.1C901.0,1161.4 896.9,1159.8 893.3,1157.9C889.7,1156.0 885.9,1154.0 883.3,1152.9C880.7,1151.8 877.7,1150.6 875.8,1150.4C873.9,1150.2 872.0,1150.3 870.7,1151.6C869.4,1152.9 868.9,1154.8 869.5,1156.6C870.1,1158.4 872.5,1160.9 874.5,1162.9C876.5,1164.9 879.5,1166.8 880.8,1167.9C882.1,1169.0 884.5,1170.9 884.5,1170.9C884.5,1170.9 878.9,1167.9 875.8,1166.7C872.7,1165.5 869.3,1163.9 867,1164.1C864.7,1164.3 863.1,1166.4 862,1167.9C860.9,1169.4 860.2,1171.1 860.7,1172.9C861.2,1174.7 863.4,1178.1 865.7,1180.4C868.0,1182.7 870.9,1183.2 873.2,1185.5C875.5,1187.8 877.9,1192.0 880.8,1195.5C883.7,1199.0 888.2,1204.0 890.8,1206.8C893.4,1209.6 896.3,1212.9 898.3,1214.3C900.3,1215.7 902.2,1216.9 904.6,1216.8C907.0,1216.7 911.6,1215.0 914.6,1213.5C917.6,1212.0 919.9,1210.5 922.1,1208C924.3,1205.5 925.5,1201.6 927.1,1199.2C928.7,1196.8 930.3,1194.1 932.2,1193C934.1,1191.9 936.2,1192.2 938.4,1192.5C940.6,1192.8 947.2,1195.0 947.2,1195C947.2,1195.0 945.9,1197.2 944.7,1197.5C943.5,1197.8 938.5,1196.7 935.9,1198C933.3,1199.3 930.9,1204.3 930.9,1204.3C930.9,1204.3 936.3,1205.3 937.2,1206C938.1,1206.7 938.3,1208.7 937.2,1209.3C936.1,1209.9 933.0,1208.6 930.9,1209.3C928.8,1210.0 927.7,1211.7 925.9,1213C924.1,1214.3 920.4,1216.7 918.4,1218C916.4,1219.3 913.8,1220.5 912.9,1221.8C912.0,1223.1 912.0,1224.8 912.9,1226.1C913.8,1227.4 917.1,1229.8 919.6,1231.8C922.1,1233.8 927.5,1238.4 930.9,1240.6C934.3,1242.8 939.0,1245.4 940.9,1245.6C942.8,1245.8 944.7,1241.9 944.7,1241.9C944.7,1241.9 944.5,1245.7 945.9,1246.9C947.3,1248.1 952.3,1250.3 956,1251.9C959.7,1253.5 964.2,1254.7 968.5,1256.9C972.8,1259.1 976.3,1262.1 981,1264.4C985.7,1266.7 990.7,1268.4 996.1,1270.7C1001.5,1273.0 1007.3,1275.6 1013.6,1278.2C1019.9,1280.8 1024.8,1282.9 1031.2,1285.2C1037.6,1287.5 1044.8,1289.7 1051.2,1292C1057.6,1294.3 1063.4,1296.7 1068.8,1298.8C1074.2,1300.9 1079.7,1302.8 1083.8,1304.5C1087.9,1306.2 1092.5,1308.6 1095.1,1309.5C1097.7,1310.4 1100.3,1312.2 1102.6,1310.8C1104.9,1309.4 1106.2,1304.7 1107.6,1302C1109.0,1299.3 1111.4,1294.5 1111.4,1294.5C1111.4,1294.5 1107.5,1301.9 1106.4,1304.5C1105.3,1307.1 1102.3,1309.6 1103.9,1312C1105.5,1314.4 1110.2,1314.8 1113.9,1315.8C1117.6,1316.8 1121.9,1317.7 1126.4,1318.3C1130.9,1318.9 1136.9,1318.9 1141.5,1319.6C1146.1,1320.3 1150.4,1322.0 1154,1322.8C1157.6,1323.6 1160.7,1323.1 1164,1324.6C1167.3,1326.1 1170.6,1329.2 1174.1,1332.1C1177.6,1335.0 1182.3,1340.0 1186.6,1343.4C1190.9,1346.8 1194.6,1349.1 1199.1,1352.2C1203.6,1355.3 1207.3,1358.0 1211.7,1360.9C1216.1,1363.8 1220.8,1366.8 1224.2,1368.5C1227.6,1370.2 1232.2,1371.6 1234.2,1372.2C1236.2,1372.8 1240.0,1373.0 1240,1373M1240,1353.4C1240.0,1353.4 1239.4,1363.6 1242.5,1367.2C1245.6,1370.8 1250.3,1370.6 1255,1371C1259.7,1371.4 1264.7,1369.3 1270.1,1369.7C1275.5,1370.1 1282.9,1372.3 1290.1,1373.5C1297.3,1374.7 1306.3,1375.2 1315.2,1377.2C1324.1,1379.2 1340.3,1385.0 1340.3,1385M1160,1321.3C1160.0,1321.3 1166.7,1324.9 1170,1327.6C1173.3,1330.3 1176.3,1334.1 1180,1337.6C1183.7,1341.1 1188.3,1345.3 1192.6,1348.9C1196.9,1352.5 1200.7,1355.3 1205.1,1358.2C1209.5,1361.1 1213.2,1363.4 1217.6,1365.7C1222.0,1368.0 1225.8,1370.2 1230.2,1371.4C1234.6,1372.6 1240.6,1372.9 1242.7,1372.7C1244.8,1372.5 1246.8,1371.0 1247.7,1369.7C1248.6,1368.4 1247.7,1365.2 1247.7,1365.2C1247.7,1365.2 1254.4,1369.4 1256.5,1370.2C1258.6,1371.0 1260.5,1370.9 1262.7,1370.7C1264.9,1370.5 1267.6,1368.3 1270.3,1368.9C1273.0,1369.5 1273.7,1373.3 1276.5,1373.9C1279.3,1374.5 1285.3,1373.4 1290.3,1373.4C1295.3,1373.4 1300.0,1373.0 1305.3,1373.9C1310.6,1374.8 1315.1,1376.2 1320.4,1378.2C1325.7,1380.2 1330.0,1382.6 1335.4,1385.2C1340.8,1387.8 1345.0,1390.1 1350.4,1392.7C1355.8,1395.3 1363.1,1397.9 1368,1400.8C1372.9,1403.7 1376.2,1406.7 1380.5,1410.3C1384.8,1413.9 1389.6,1418.2 1393,1421.6C1396.4,1425.0 1398.9,1429.0 1401.8,1431.6C1404.7,1434.2 1407.9,1435.1 1410.6,1437.8C1413.3,1440.5 1417.3,1446.0 1420.6,1450.4C1423.9,1454.8 1426.3,1458.4 1429.4,1462.9C1432.5,1467.4 1437.8,1476.1 1440.7,1479.2C1443.6,1482.3 1447.3,1483.8 1450.7,1485.5C1454.1,1487.2 1457.2,1487.6 1460.7,1489.2C1464.2,1490.8 1468.8,1493.1 1473.2,1495.5C1477.6,1497.9 1482.1,1500.5 1485.8,1503C1489.5,1505.5 1492.4,1507.5 1495.8,1510.5C1499.2,1513.5 1503.3,1518.4 1505.8,1520.5C1508.3,1522.6 1512.2,1524.0 1513.3,1525.6C1514.4,1527.2 1513.7,1529.2 1513.3,1531.1C1512.9,1533.0 1510.8,1536.8 1510.8,1536.8C1510.8,1536.8 1515.6,1536.3 1518.3,1536.8C1521.0,1537.3 1527.1,1539.1 1530.9,1540.6C1534.7,1542.1 1537.0,1544.5 1540.9,1545.6C1544.8,1546.7 1549.7,1546.3 1553.4,1546.9C1557.1,1547.5 1559.8,1549.0 1563.4,1549.4C1567.0,1549.8 1569.9,1549.9 1573.5,1549.4C1577.1,1548.9 1581.5,1547.5 1586,1546.1C1590.5,1544.7 1594.1,1543.6 1598.5,1541.8C1602.9,1540.0 1606.7,1538.0 1611.1,1535.6C1615.5,1533.2 1621.6,1529.5 1626.1,1526.8C1630.6,1524.1 1637.9,1519.9 1638.6,1519.3C1639.3,1518.7 1637.8,1517.1 1638.6,1516.8C1639.4,1516.5 1645.2,1516.6 1648.6,1515.5C1652.0,1514.4 1656.6,1511.4 1661.2,1509.3C1665.8,1507.2 1671.6,1505.1 1676.2,1503C1680.8,1500.9 1684.3,1498.7 1688.7,1496.7C1693.1,1494.7 1696.6,1492.9 1701.3,1491.7C1706.0,1490.5 1712.6,1489.9 1716.3,1490C1720.0,1490.1 1722.6,1492.5 1726.3,1492.5C1730.0,1492.5 1732.7,1490.1 1736.4,1490C1740.1,1489.9 1744.4,1491.3 1748.9,1491.7C1753.4,1492.1 1756.9,1492.4 1761.4,1492.5C1765.9,1492.6 1770.2,1492.1 1773.9,1492.5C1777.6,1492.9 1781.2,1495.0 1784,1495C1786.8,1495.0 1788.7,1492.9 1791.5,1492.5C1794.3,1492.1 1800.0,1492.5 1800,1492.5M1800,1493.5C1800.0,1493.5 1809.6,1492.2 1815,1491.7C1820.4,1491.2 1828.1,1491.3 1830.1,1491C1832.1,1490.7 1833.1,1488.7 1835.1,1488.5C1837.1,1488.3 1841.5,1489.7 1845.1,1489.2C1848.7,1488.7 1853.1,1486.8 1857.6,1485.5C1862.1,1484.2 1866.3,1483.5 1870.2,1481.7C1874.1,1479.9 1876.2,1476.5 1880.2,1474.9C1884.2,1473.3 1889.8,1473.0 1895.2,1471.7C1900.6,1470.4 1906.6,1469.1 1910.3,1467.9C1914.0,1466.7 1916.7,1464.1 1920.3,1463.4C1923.9,1462.7 1926.7,1464.6 1930.3,1464.2C1933.9,1463.8 1938.4,1462.4 1942.8,1460.9C1947.2,1459.4 1951.0,1457.3 1955.4,1455.9C1959.8,1454.5 1963.3,1453.1 1967.9,1452.9C1972.5,1452.7 1976.0,1453.8 1980.4,1454.9C1984.8,1456.0 1991.7,1458.3 1995.5,1459.9C1999.3,1461.5 2001.9,1463.4 2005.5,1465.4C2009.1,1467.4 2011.9,1469.0 2015.5,1470.9C2019.1,1472.8 2022.8,1475.3 2025.5,1475.9C2028.2,1476.5 2031.0,1474.0 2033,1474.9C2035.0,1475.8 2033.8,1479.1 2035.6,1480.4C2037.4,1481.7 2041.9,1483.2 2045.6,1484.2C2049.3,1485.2 2055.4,1486.5 2058.1,1486.7C2060.8,1486.9 2062.9,1485.4 2065.6,1485.5C2068.3,1485.6 2072.0,1486.9 2075.6,1487.5C2079.2,1488.1 2083.7,1488.8 2088.2,1489.2C2092.7,1489.6 2098.0,1489.7 2100.7,1490C2103.4,1490.3 2105.5,1491.6 2108.2,1491.7C2110.9,1491.8 2113.0,1490.6 2115.7,1490.5C2118.4,1490.4 2123.8,1490.6 2128.3,1491C2132.8,1491.4 2137.2,1492.5 2140.8,1492.5C2144.4,1492.5 2147.2,1491.1 2150.8,1491C2154.4,1490.9 2157.2,1491.8 2160.8,1491.7C2164.4,1491.6 2168.1,1490.3 2170.9,1490.5C2173.7,1490.7 2175.6,1493.1 2178.4,1493C2181.2,1492.9 2184.6,1489.8 2188.4,1490C2192.2,1490.2 2196.2,1493.2 2200.9,1494.2C2205.6,1495.2 2215.6,1496.2 2221,1496.7C2226.4,1497.2 2230.7,1496.6 2236,1497.5C2241.3,1498.4 2245.6,1500.4 2251.1,1501.7C2256.6,1503.0 2266.1,1503.8 2271.1,1505.5C2276.1,1507.2 2279.1,1510.3 2283.6,1513C2288.1,1515.7 2293.1,1518.9 2298.7,1521.8C2304.3,1524.7 2312.7,1528.7 2316.2,1530.1C2319.7,1531.5 2322.6,1531.7 2326.2,1532.6C2329.8,1533.5 2336.3,1535.1 2336.3,1535.1" fill="none" stroke="#3a9fd5" stroke-width="5.7" stroke-linejoin="round" stroke-linecap="butt"/>
<path d="M1456.1,1500.8 1463.7,1499 1476.2,1505.8 1491.2,1515.8 1503.8,1524.6 1513,1527.1 1511.3,1531.3 1501.3,1530.3 1488.7,1523.3 1473.7,1514.5 1461.2,1507Z" fill="#a5735c" stroke="#3a9fd5" stroke-width="5.5" stroke-linejoin="round"/>
<path d="M1211.8,1345.9 1225.6,1349.9 1240.6,1353.4 1242.6,1356.6 1248.1,1365.4 1248.6,1372.9 1240.6,1373.4 1225.6,1360.4 1213,1350.4Z" fill="#3a9fd5" stroke="#3a9fd5" stroke-width="2" stroke-linejoin="round"/>
<g fill="#b7cf5c" stroke="#2f3a17" stroke-width="2"><circle cx="971.8" cy="805.9" r="5.5"/><circle cx="1173.3" cy="787.8" r="5.5"/><circle cx="1200.4" cy="784.6" r="5.5"/><circle cx="1152.8" cy="811.2" r="5.5"/><circle cx="1157" cy="811.2" r="5.5"/><circle cx="1167.1" cy="811.9" r="5.5"/><circle cx="1170.3" cy="811.9" r="5.5"/><circle cx="1240" cy="834.7" r="5.5"/><circle cx="1006.1" cy="844" r="5.5"/><circle cx="1012.9" cy="894.4" r="5.5"/><circle cx="1012.9" cy="906.9" r="5.5"/><circle cx="1000.6" cy="909.7" r="5.5"/><circle cx="1139" cy="925" r="5.5"/><circle cx="1157.8" cy="925" r="5.5"/><circle cx="1169.8" cy="925.7" r="5.5"/><circle cx="1230" cy="915.7" r="5.5"/><circle cx="1218.2" cy="926.2" r="5.5"/><circle cx="1212.9" cy="932.7" r="5.5"/><circle cx="1181.6" cy="957.1" r="5.5"/><circle cx="1160.8" cy="978.9" r="5.5"/><circle cx="1146" cy="1009.7" r="5.5"/><circle cx="1159.5" cy="1009.7" r="5.5"/><circle cx="1167.1" cy="1009.7" r="5.5"/><circle cx="1179.1" cy="1009.7" r="5.5"/><circle cx="1209.7" cy="1022.2" r="5.5"/><circle cx="1349.8" cy="797.6" r="5.5"/><circle cx="1447.6" cy="782.8" r="5.5"/><circle cx="1253.8" cy="823.7" r="5.5"/><circle cx="1262.6" cy="927.7" r="5.5"/><circle cx="1273.8" cy="927.7" r="5.5"/><circle cx="1285.1" cy="927.7" r="5.5"/><circle cx="1289.6" cy="928.7" r="5.5"/><circle cx="1312.7" cy="929" r="5.5"/><circle cx="1324.7" cy="929.7" r="5.5"/><circle cx="1336.5" cy="929.7" r="5.5"/><circle cx="1520" cy="821.7" r="5.5"/><circle cx="1564.6" cy="876.6" r="5.5"/><circle cx="1575.9" cy="878.8" r="5.5"/><circle cx="1647.9" cy="847.5" r="5.5"/><circle cx="1721.8" cy="850.5" r="5.5"/><circle cx="1669.9" cy="736.5" r="5.5"/><circle cx="1665.7" cy="744.7" r="5.5"/><circle cx="1871.7" cy="716.7" r="5.5"/><circle cx="1412.5" cy="996.4" r="5.5"/><circle cx="1400.4" cy="1003.4" r="5.5"/><circle cx="1394.7" cy="1006.9" r="5.5"/><circle cx="1443.6" cy="1006.7" r="5.5"/><circle cx="1451.8" cy="1012.2" r="5.5"/><circle cx="1459.3" cy="1015.2" r="5.5"/><circle cx="1471.9" cy="1016.2" r="5.5"/><circle cx="1265.8" cy="1011" r="5.5"/><circle cx="1277.6" cy="1011" r="5.5"/><circle cx="1281.4" cy="1011" r="5.5"/><circle cx="1629.3" cy="1002.4" r="5.5"/><circle cx="1585.4" cy="1019" r="5.5"/><circle cx="1617.3" cy="1019.7" r="5.5"/><circle cx="1691.2" cy="1025" r="5.5"/><circle cx="1715.6" cy="1023" r="5.5"/><circle cx="1866.7" cy="1015.5" r="5.5"/><circle cx="1980.8" cy="767" r="5.5"/><circle cx="2173.8" cy="815.9" r="5.5"/><circle cx="2288.6" cy="705.9" r="5.5"/><circle cx="2287.4" cy="711.4" r="5.5"/><circle cx="2301.2" cy="705.1" r="5.5"/><circle cx="2304.9" cy="706.4" r="5.5"/><circle cx="1984.8" cy="910.7" r="5.5"/><circle cx="1917.1" cy="944" r="5.5"/><circle cx="2206.6" cy="939.5" r="5.5"/><circle cx="2305.7" cy="938.8" r="5.5"/><circle cx="1937.7" cy="1005.9" r="5.5"/><circle cx="2068" cy="1008" r="5.5"/><circle cx="1841.1" cy="638.4" r="5.5"/><circle cx="2121.9" cy="582.8" r="5.5"/><circle cx="2167" cy="577.8" r="5.5"/><circle cx="2191.6" cy="575.8" r="5.5"/><circle cx="2321.7" cy="618.6" r="5.5"/><circle cx="1092.1" cy="1031.8" r="5.5"/><circle cx="1217.9" cy="1051.8" r="5.5"/><circle cx="1223" cy="1082.7" r="5.5"/><circle cx="1222.2" cy="1188.7" r="5.5"/><circle cx="1267.6" cy="1048.8" r="5.5"/><circle cx="1341.5" cy="1155.9" r="5.5"/><circle cx="1491.4" cy="1118.5" r="5.5"/><circle cx="1690" cy="1033.8" r="5.5"/><circle cx="1690" cy="1046.3" r="5.5"/><circle cx="1690" cy="1051.3" r="5.5"/><circle cx="1670.7" cy="1087.7" r="5.5"/><circle cx="1669.9" cy="1100.7" r="5.5"/><circle cx="1666.2" cy="1104" r="5.5"/><circle cx="1634.8" cy="1124.5" r="5.5"/><circle cx="1695.7" cy="1140.8" r="5.5"/><circle cx="1685.7" cy="1157.9" r="5.5"/><circle cx="1684.5" cy="1176.7" r="5.5"/><circle cx="1684.5" cy="1184.2" r="5.5"/><circle cx="1768.2" cy="1082.7" r="5.5"/><circle cx="1769.4" cy="1080.7" r="5.5"/><circle cx="1801.5" cy="1166.7" r="5.5"/><circle cx="1748.4" cy="1196.7" r="5.5"/><circle cx="1349" cy="1200.5" r="5.5"/><circle cx="1683.7" cy="1220.5" r="5.5"/><circle cx="1682.7" cy="1248.6" r="5.5"/><circle cx="1584.7" cy="1270.7" r="5.5"/><circle cx="1565.1" cy="1346.6" r="5.5"/><circle cx="1680" cy="1358.4" r="5.5"/><circle cx="1680" cy="1368.5" r="5.5"/><circle cx="1680" cy="1385" r="5.5"/><circle cx="1841.1" cy="1333.4" r="5.5"/><circle cx="1821.1" cy="1361.4" r="5.5"/><circle cx="1893" cy="1063.1" r="5.5"/><circle cx="1929.6" cy="1065.9" r="5.5"/><circle cx="1929.6" cy="1085.9" r="5.5"/><circle cx="1959" cy="1092.9" r="5.5"/><circle cx="1978.5" cy="1100.7" r="5.5"/><circle cx="1885.8" cy="1101.7" r="5.5"/><circle cx="2081.8" cy="1107.7" r="5.5"/><circle cx="2130.2" cy="1148.6" r="5.5"/><circle cx="2086.8" cy="1168.7" r="5.5"/><circle cx="2065.5" cy="1203.8" r="5.5"/><circle cx="2086.8" cy="1206.8" r="5.5"/><circle cx="2110.6" cy="1205" r="5.5"/><circle cx="2130.7" cy="1194.7" r="5.5"/><circle cx="2128.2" cy="1062.1" r="5.5"/><circle cx="2206.6" cy="1080.9" r="5.5"/><circle cx="2327.5" cy="1156.1" r="5.5"/><circle cx="1996.6" cy="1275.7" r="5.5"/><circle cx="2035.9" cy="1330.1" r="5.5"/><circle cx="2029.9" cy="1332.9" r="5.5"/><circle cx="1996.1" cy="1355.4" r="5.5"/><circle cx="1994.1" cy="1360.4" r="5.5"/><circle cx="1978.5" cy="1376" r="5.5"/><circle cx="2198.9" cy="1286.5" r="5.5"/><circle cx="2249.8" cy="1330.1" r="5.5"/><circle cx="1433.9" cy="1408.8" r="5.5"/><circle cx="1523.9" cy="1400.5" r="5.5"/><circle cx="1478.7" cy="1442.6" r="5.5"/><circle cx="1656.9" cy="1388.5" r="5.5"/><circle cx="1702.5" cy="1406.8" r="5.5"/><circle cx="2090.7" cy="1413.8" r="5.5"/><circle cx="2087.7" cy="1433.8" r="5.5"/><circle cx="2033.8" cy="1449.6" r="5.5"/></g>
<g fill="#ffff00" stroke="#33330f" stroke-width="2"><circle cx="957.2" cy="788.6" r="5.5"/><circle cx="994.1" cy="788.4" r="5.5"/><circle cx="995.6" cy="782.8" r="5.5"/><circle cx="1043.7" cy="803.9" r="5.5"/><circle cx="964.7" cy="807.9" r="5.5"/><circle cx="1209.9" cy="783.6" r="5.5"/><circle cx="1223" cy="782.8" r="5.5"/><circle cx="1232.2" cy="777.8" r="5.5"/><circle cx="1217.9" cy="802.1" r="5.5"/><circle cx="1198.6" cy="805.4" r="5.5"/><circle cx="1216.2" cy="820.7" r="5.5"/><circle cx="1076.8" cy="869.8" r="5.5"/><circle cx="1238" cy="870.6" r="5.5"/><circle cx="1029.2" cy="920" r="5.5"/><circle cx="1172.8" cy="932" r="5.5"/><circle cx="1164" cy="935" r="5.5"/><circle cx="1239.2" cy="920.7" r="5.5"/><circle cx="1133.5" cy="959.8" r="5.5"/><circle cx="1199.1" cy="961.6" r="5.5"/><circle cx="1144.5" cy="982.9" r="5.5"/><circle cx="1248.8" cy="781.1" r="5.5"/><circle cx="1253.8" cy="784.8" r="5.5"/><circle cx="1279.6" cy="793.6" r="5.5"/><circle cx="1271.3" cy="804.6" r="5.5"/><circle cx="1306.4" cy="803.9" r="5.5"/><circle cx="1359.1" cy="797.6" r="5.5"/><circle cx="1347.8" cy="807.2" r="5.5"/><circle cx="1337.8" cy="823.9" r="5.5"/><circle cx="1357.8" cy="825.7" r="5.5"/><circle cx="1438.8" cy="756.5" r="5.5"/><circle cx="1412.5" cy="856" r="5.5"/><circle cx="1415.5" cy="852.5" r="5.5"/><circle cx="1280.9" cy="894.9" r="5.5"/><circle cx="1450.1" cy="893.6" r="5.5"/><circle cx="1447.6" cy="924.7" r="5.5"/><circle cx="1477.6" cy="940.8" r="5.5"/><circle cx="1326.5" cy="952.8" r="5.5"/><circle cx="1458.6" cy="959.8" r="5.5"/><circle cx="1288.4" cy="965.3" r="5.5"/><circle cx="1288.4" cy="972.6" r="5.5"/><circle cx="1308.9" cy="979.6" r="5.5"/><circle cx="1326.5" cy="1001.4" r="5.5"/><circle cx="1287.6" cy="1015.5" r="5.5"/><circle cx="1275.1" cy="1021" r="5.5"/><circle cx="1661.2" cy="715.7" r="5.5"/><circle cx="1856.2" cy="732.2" r="5.5"/><circle cx="1878.7" cy="691.1" r="5.5"/><circle cx="1722.6" cy="900.9" r="5.5"/><circle cx="1727.6" cy="919" r="5.5"/><circle cx="1728.8" cy="911.4" r="5.5"/><circle cx="1626.6" cy="930.5" r="5.5"/><circle cx="1652.9" cy="945.8" r="5.5"/><circle cx="1676.7" cy="945.8" r="5.5"/><circle cx="1683.7" cy="957.1" r="5.5"/><circle cx="1698.8" cy="948.8" r="5.5"/><circle cx="1705.8" cy="950.8" r="5.5"/><circle cx="1736.9" cy="950" r="5.5"/><circle cx="1724.6" cy="961.8" r="5.5"/><circle cx="1752.7" cy="972.6" r="5.5"/><circle cx="1626.1" cy="977.9" r="5.5"/><circle cx="1650.6" cy="1009.5" r="5.5"/><circle cx="1683" cy="1013" r="5.5"/><circle cx="1646.6" cy="1021" r="5.5"/><circle cx="1858.7" cy="999.9" r="5.5"/><circle cx="1887" cy="698.9" r="5.5"/><circle cx="1889.5" cy="708.9" r="5.5"/><circle cx="1997.8" cy="717.2" r="5.5"/><circle cx="1985.8" cy="839.7" r="5.5"/><circle cx="2072.5" cy="833.7" r="5.5"/><circle cx="2092.6" cy="839.7" r="5.5"/><circle cx="2115.6" cy="660" r="5.5"/><circle cx="2202.1" cy="690.1" r="5.5"/><circle cx="2322.5" cy="691.1" r="5.5"/><circle cx="2246.8" cy="718.2" r="5.5"/><circle cx="2138.7" cy="736" r="5.5"/><circle cx="2157" cy="746.2" r="5.5"/><circle cx="2271.1" cy="745.2" r="5.5"/><circle cx="2297.4" cy="833" r="5.5"/><circle cx="2149.5" cy="846" r="5.5"/><circle cx="2280.6" cy="881.9" r="5.5"/><circle cx="2048.5" cy="888.9" r="5.5"/><circle cx="2069.8" cy="901.9" r="5.5"/><circle cx="2078.8" cy="908.2" r="5.5"/><circle cx="2028.7" cy="939.8" r="5.5"/><circle cx="2094.3" cy="957.1" r="5.5"/><circle cx="2003.6" cy="980.4" r="5.5"/><circle cx="1886.3" cy="990.9" r="5.5"/><circle cx="1952.7" cy="1008.5" r="5.5"/><circle cx="1954" cy="1013.5" r="5.5"/><circle cx="1991.6" cy="1016.5" r="5.5"/><circle cx="2036.7" cy="1013" r="5.5"/><circle cx="2241.7" cy="930" r="5.5"/><circle cx="2330.7" cy="938.8" r="5.5"/><circle cx="2167.8" cy="957.8" r="5.5"/><circle cx="2240.5" cy="978.9" r="5.5"/><circle cx="2259.8" cy="977.1" r="5.5"/><circle cx="2296.6" cy="996.4" r="5.5"/><circle cx="2297.4" cy="1008.5" r="5.5"/><circle cx="2223.4" cy="1014.7" r="5.5"/><circle cx="2185.8" cy="1023" r="5.5"/><circle cx="2151.5" cy="560.7" r="5.5"/><circle cx="2162" cy="575.3" r="5.5"/><circle cx="2101.9" cy="587" r="5.5"/><circle cx="1143.5" cy="1031.8" r="5.5"/><circle cx="1143.5" cy="1063.9" r="5.5"/><circle cx="1161.5" cy="1068.9" r="5.5"/><circle cx="1143.5" cy="1079.4" r="5.5"/><circle cx="1154.5" cy="1131.6" r="5.5"/><circle cx="1169.8" cy="1131.6" r="5.5"/><circle cx="1147.7" cy="1149.1" r="5.5"/><circle cx="1223" cy="1155.4" r="5.5"/><circle cx="1192.4" cy="1214.8" r="5.5"/><circle cx="1109.6" cy="1236.8" r="5.5"/><circle cx="1223.7" cy="1242.6" r="5.5"/><circle cx="1186.6" cy="1263.2" r="5.5"/><circle cx="1217.9" cy="1188.7" r="5.5"/><circle cx="1364.8" cy="1030.5" r="5.5"/><circle cx="1267.6" cy="1074.6" r="5.5"/><circle cx="1268.8" cy="1085.2" r="5.5"/><circle cx="1324" cy="1078.9" r="5.5"/><circle cx="1425.5" cy="1094.7" r="5.5"/><circle cx="1435.5" cy="1094.7" r="5.5"/><circle cx="1474.4" cy="1118.5" r="5.5"/><circle cx="1248" cy="1142.3" r="5.5"/><circle cx="1285.6" cy="1142.3" r="5.5"/><circle cx="1450.1" cy="1147.8" r="5.5"/><circle cx="1537.1" cy="1044.6" r="5.5"/><circle cx="1562.1" cy="1040.8" r="5.5"/><circle cx="1576.7" cy="1042.1" r="5.5"/><circle cx="1579.7" cy="1031.8" r="5.5"/><circle cx="1620.5" cy="1032.5" r="5.5"/><circle cx="1569.2" cy="1141.1" r="5.5"/><circle cx="1598.5" cy="1142.3" r="5.5"/><circle cx="1586.7" cy="1161.9" r="5.5"/><circle cx="1648.6" cy="1164.6" r="5.5"/><circle cx="1271.3" cy="1172.4" r="5.5"/><circle cx="1275.1" cy="1179.9" r="5.5"/><circle cx="1308.9" cy="1185.5" r="5.5"/><circle cx="1314.7" cy="1205.5" r="5.5"/><circle cx="1337.3" cy="1205.5" r="5.5"/><circle cx="1376.6" cy="1225.6" r="5.5"/><circle cx="1457.6" cy="1219.8" r="5.5"/><circle cx="1265.8" cy="1234.8" r="5.5"/><circle cx="1416.7" cy="1240.6" r="5.5"/><circle cx="1416.7" cy="1257.6" r="5.5"/><circle cx="1376.6" cy="1278.7" r="5.5"/><circle cx="1352.8" cy="1289.7" r="5.5"/><circle cx="1435.5" cy="1282" r="5.5"/><circle cx="1442.6" cy="1282.7" r="5.5"/><circle cx="1418" cy="1303.8" r="5.5"/><circle cx="1438" cy="1312" r="5.5"/><circle cx="1440.5" cy="1318.3" r="5.5"/><circle cx="1442.6" cy="1324.6" r="5.5"/><circle cx="1444.3" cy="1330.8" r="5.5"/><circle cx="1389.2" cy="1333.9" r="5.5"/><circle cx="1555.1" cy="1204.8" r="5.5"/><circle cx="1620.5" cy="1234.8" r="5.5"/><circle cx="1572.7" cy="1266.9" r="5.5"/><circle cx="1574.7" cy="1285" r="5.5"/><circle cx="1525" cy="1287.7" r="5.5"/><circle cx="1533.8" cy="1300.8" r="5.5"/><circle cx="1544.6" cy="1313.3" r="5.5"/><circle cx="1550.8" cy="1307.8" r="5.5"/><circle cx="1519.5" cy="1313.8" r="5.5"/><circle cx="1532.5" cy="1322.8" r="5.5"/><circle cx="1571.7" cy="1327.6" r="5.5"/><circle cx="1528.3" cy="1334.6" r="5.5"/><circle cx="1550.8" cy="1338.9" r="5.5"/><circle cx="1569.2" cy="1356.7" r="5.5"/><circle cx="1544.6" cy="1361.4" r="5.5"/><circle cx="1549.6" cy="1365.9" r="5.5"/><circle cx="1559.6" cy="1363.9" r="5.5"/><circle cx="1572.7" cy="1368.5" r="5.5"/><circle cx="1557.1" cy="1385" r="5.5"/><circle cx="1575.9" cy="1385" r="5.5"/><circle cx="1657.4" cy="1381" r="5.5"/><circle cx="1730.1" cy="1367.7" r="5.5"/><circle cx="1706.8" cy="1264.4" r="5.5"/><circle cx="1726.8" cy="1261.2" r="5.5"/><circle cx="1815.8" cy="1051.8" r="5.5"/><circle cx="1815.3" cy="1072.1" r="5.5"/><circle cx="1875.5" cy="1093.2" r="5.5"/><circle cx="1832.9" cy="1130.8" r="5.5"/><circle cx="1800.3" cy="1157.4" r="5.5"/><circle cx="1817.8" cy="1171.7" r="5.5"/><circle cx="1866" cy="1154.9" r="5.5"/><circle cx="1772.7" cy="1193.7" r="5.5"/><circle cx="1801.5" cy="1191" r="5.5"/><circle cx="1873" cy="1198.7" r="5.5"/><circle cx="1774" cy="1214.3" r="5.5"/><circle cx="1771.5" cy="1219.3" r="5.5"/><circle cx="1822.1" cy="1219.8" r="5.5"/><circle cx="1802.8" cy="1248.1" r="5.5"/><circle cx="1787.7" cy="1260.2" r="5.5"/><circle cx="1843.7" cy="1275.2" r="5.5"/><circle cx="1814.8" cy="1290" r="5.5"/><circle cx="1839.9" cy="1315.8" r="5.5"/><circle cx="1838.6" cy="1320.8" r="5.5"/><circle cx="1834.9" cy="1342.9" r="5.5"/><circle cx="1812.8" cy="1357.2" r="5.5"/><circle cx="1797.8" cy="1367.2" r="5.5"/><circle cx="1812.8" cy="1378.5" r="5.5"/><circle cx="1812.8" cy="1383.5" r="5.5"/><circle cx="1956" cy="1038.8" r="5.5"/><circle cx="1992.8" cy="1035" r="5.5"/><circle cx="2023.6" cy="1065.6" r="5.5"/><circle cx="1898.8" cy="1083.9" r="5.5"/><circle cx="2003.6" cy="1085.9" r="5.5"/><circle cx="1917.6" cy="1108.7" r="5.5"/><circle cx="1980.8" cy="1124.8" r="5.5"/><circle cx="1885.8" cy="1152.9" r="5.5"/><circle cx="1943.9" cy="1157.9" r="5.5"/><circle cx="1907.6" cy="1165.9" r="5.5"/><circle cx="1924.6" cy="1177.2" r="5.5"/><circle cx="1982.3" cy="1174.9" r="5.5"/><circle cx="1987.8" cy="1174.9" r="5.5"/><circle cx="1997.1" cy="1175.4" r="5.5"/><circle cx="1998.6" cy="1187" r="5.5"/><circle cx="2016.6" cy="1192" r="5.5"/><circle cx="2063.8" cy="1196.2" r="5.5"/><circle cx="2094.8" cy="1114.8" r="5.5"/><circle cx="2086.8" cy="1177.9" r="5.5"/><circle cx="2115.6" cy="1185.5" r="5.5"/><circle cx="2113.6" cy="1195" r="5.5"/><circle cx="2145.2" cy="1184.2" r="5.5"/><circle cx="2148.2" cy="1177.9" r="5.5"/><circle cx="2149.5" cy="1162.9" r="5.5"/><circle cx="2146.2" cy="1192.2" r="5.5"/><circle cx="2135.2" cy="1198" r="5.5"/><circle cx="2147" cy="1204.3" r="5.5"/><circle cx="2140.2" cy="1223.8" r="5.5"/><circle cx="2223.4" cy="1033.3" r="5.5"/><circle cx="2243" cy="1043.1" r="5.5"/><circle cx="2223.4" cy="1051.8" r="5.5"/><circle cx="2118.2" cy="1057.6" r="5.5"/><circle cx="2135.2" cy="1054.3" r="5.5"/><circle cx="2117.6" cy="1068.9" r="5.5"/><circle cx="2182.8" cy="1084.7" r="5.5"/><circle cx="2225.4" cy="1079.7" r="5.5"/><circle cx="2235.5" cy="1078.2" r="5.5"/><circle cx="2233.5" cy="1097" r="5.5"/><circle cx="2155" cy="1103.5" r="5.5"/><circle cx="2157.8" cy="1114" r="5.5"/><circle cx="2241.7" cy="1122.8" r="5.5"/><circle cx="2280.6" cy="1089.7" r="5.5"/><circle cx="2309.9" cy="1075.7" r="5.5"/><circle cx="2317.4" cy="1071.9" r="5.5"/><circle cx="2310.7" cy="1132.1" r="5.5"/><circle cx="2210.4" cy="1150.9" r="5.5"/><circle cx="2212.2" cy="1144.1" r="5.5"/><circle cx="2218.9" cy="1177.9" r="5.5"/><circle cx="2176.6" cy="1206.8" r="5.5"/><circle cx="2183.3" cy="1205" r="5.5"/><circle cx="2251" cy="1208.8" r="5.5"/><circle cx="2283.6" cy="1218" r="5.5"/><circle cx="2283.6" cy="1224.3" r="5.5"/><circle cx="1902.6" cy="1256.9" r="5.5"/><circle cx="1938.9" cy="1261.9" r="5.5"/><circle cx="1927.6" cy="1287.7" r="5.5"/><circle cx="1900.1" cy="1300.8" r="5.5"/><circle cx="2082.6" cy="1257.6" r="5.5"/><circle cx="2083.6" cy="1265.7" r="5.5"/><circle cx="2083.1" cy="1278.2" r="5.5"/><circle cx="2060.5" cy="1271.4" r="5.5"/><circle cx="1991.1" cy="1313.8" r="5.5"/><circle cx="2014.9" cy="1310" r="5.5"/><circle cx="2066.8" cy="1320.8" r="5.5"/><circle cx="2114.9" cy="1313.8" r="5.5"/><circle cx="1989.5" cy="1342.9" r="5.5"/><circle cx="1917.1" cy="1342.9" r="5.5"/><circle cx="1915.1" cy="1349.7" r="5.5"/><circle cx="1925.9" cy="1350.2" r="5.5"/><circle cx="1929.4" cy="1371" r="5.5"/><circle cx="1951.9" cy="1379.7" r="5.5"/><circle cx="2283.6" cy="1255.6" r="5.5"/><circle cx="2273.6" cy="1267.7" r="5.5"/><circle cx="2230.5" cy="1268.2" r="5.5"/><circle cx="2255.5" cy="1283.7" r="5.5"/><circle cx="2224.7" cy="1297.8" r="5.5"/><circle cx="2183.3" cy="1315.8" r="5.5"/><circle cx="2271.1" cy="1320.8" r="5.5"/><circle cx="2259" cy="1331.4" r="5.5"/><circle cx="2316.2" cy="1319.6" r="5.5"/><circle cx="2325" cy="1258.2" r="5.5"/><circle cx="2321.7" cy="1265.7" r="5.5"/><circle cx="1470" cy="1395.7" r="5.5"/><circle cx="1533.9" cy="1407.8" r="5.5"/><circle cx="1547.9" cy="1417.8" r="5.5"/><circle cx="1549.7" cy="1425.3" r="5.5"/><circle cx="1543.4" cy="1427.8" r="5.5"/><circle cx="1465.7" cy="1432.8" r="5.5"/><circle cx="1618.6" cy="1425.8" r="5.5"/><circle cx="1595.5" cy="1432.8" r="5.5"/><circle cx="1618.1" cy="1440.9" r="5.5"/><circle cx="1604.8" cy="1445.9" r="5.5"/><circle cx="1630.6" cy="1445.9" r="5.5"/><circle cx="1655.7" cy="1399.8" r="5.5"/><circle cx="1717.6" cy="1394.7" r="5.5"/><circle cx="1712.5" cy="1404" r="5.5"/><circle cx="1726.8" cy="1414" r="5.5"/><circle cx="1706.8" cy="1422.8" r="5.5"/><circle cx="1758.2" cy="1399" r="5.5"/><circle cx="2000.5" cy="1400.8" r="5.5"/><circle cx="1888.5" cy="1429.6" r="5.5"/><circle cx="2003.5" cy="1441.6" r="5.5"/><circle cx="2023.5" cy="1452.9" r="5.5"/><circle cx="2046.8" cy="1457.4" r="5.5"/><circle cx="2047.6" cy="1454.1" r="5.5"/><circle cx="2061.9" cy="1458.6" r="5.5"/><circle cx="2096.9" cy="1409.5" r="5.5"/><circle cx="2218.5" cy="1390.7" r="5.5"/><circle cx="2287.4" cy="1388.7" r="5.5"/></g></svg>
<div id="status" class="abs" style="top:1578px">
<div class="fld" style="left:7px;width:427px;top:7.5px;height:47px;border:2px solid #adadad;background:#fdfdfd;border-radius:6px"><svg class="abs" style="left:14px;top:9px;width:26px;height:26px" viewBox="0 0 26 26"><circle cx="10.5" cy="10.5" r="7.6" fill="none" stroke="#8c8c8c" stroke-width="2.4"/><path d="M16 16L23.5 23.5" stroke="#8c8c8c" stroke-width="2.6" stroke-linecap="round"/></svg><span style="position:absolute;left:55px;top:1px;font-size:25px;color:#7d7d7d;letter-spacing:1.1px">Type to locate (⌘K)</span></div>
<div class="lb" style="left:450px;letter-spacing:.8px">Intersect with the current selection</div>
<div class="lb" style="left:1138px;letter-spacing:.5px">Coordinate</div>
<div class="fld" style="left:1260px;width:222px;text-align:center;letter-spacing:1.6px;text-indent:1px">480008,5453196</div>
<div class="lb" style="left:1548px;letter-spacing:.5px">Scale</div>
<div class="fld" style="left:1612px;width:186px;top:9px;height:46px;line-height:45px;padding-left:9px;letter-spacing:-.5px">1:117918<div class="abs" style="left:143px;top:2px;width:1px;height:40px;background:#c9c9c9"></div><div class="arr" style="left:154px;top:19px;border-top-color:#555"></div></div>
<div class="lb" style="left:1865px;letter-spacing:.5px">Magnifier</div>
<div class="fld" style="left:1970px;width:181px;padding-left:9px">100%<div class="abs" style="left:151px;top:0;width:1px;height:41px;background:#c9c9c9"></div><div class="tri" style="position:absolute;left:158px;top:9px;border-left:6.5px solid transparent;border-right:6.5px solid transparent;border-bottom:8px solid #4d4d4d"></div><div class="tri" style="position:absolute;left:158px;top:25px;border-left:6.5px solid transparent;border-right:6.5px solid transparent;border-top:8px solid #4d4d4d"></div></div>
<div class="lb" style="left:2171px;letter-spacing:.5px">Rotation</div>
<div class="fld" style="left:2276px;width:185px;padding-left:9px">0.0 °<div class="abs" style="left:155px;top:0;width:1px;height:41px;background:#c9c9c9"></div><div class="tri" style="position:absolute;left:162px;top:9px;border-left:6.5px solid transparent;border-right:6.5px solid transparent;border-bottom:8px solid #4d4d4d"></div><div class="tri" style="position:absolute;left:162px;top:25px;border-left:6.5px solid transparent;border-right:6.5px solid transparent;border-top:8px solid #4d4d4d"></div></div>
<div class="cb" style="left:2475px;top:20px;width:21px;height:21px"><svg viewBox="0 0 21 21"><path d="M4 10.5L8.6 17L17 3.5" fill="none" stroke="#1b1b1b" stroke-width="2.6" stroke-linejoin="miter"/></svg></div>
<div class="lb" style="left:2513px;letter-spacing:.5px">Render</div>
<div class="lb" style="left:2654px;letter-spacing:.5px">EPSG:26910</div>
<svg class="abs" style="left:1490px;top:14px;width:32px;height:34px" viewBox="0 0 32 34"><path d="M6 6C9 2 15 3 16 8L18 18C19 24 14 27 10 25C5 23 3 12 6 6Z" fill="#fff" stroke="#222" stroke-width="2"/><path d="M11 4V13M5 13C9 15 14 14 17 12" stroke="#222" stroke-width="1.8" fill="none"/><circle cx="21" cy="25" r="6.5" fill="#9a9a9a"/><circle cx="21" cy="25" r="3.6" fill="#fff" stroke="#222" stroke-width="1.6"/><path d="M21 5L29 2M22 9L28 8" stroke="#444" stroke-width="1.2" stroke-dasharray="2 1.5"/></svg>
<svg class="abs" style="left:1820px;top:14px;width:28px;height:34px" viewBox="0 0 28 34"><path d="M7.5 15V10C7.5 2.5 20.5 2.5 20.5 10V15" fill="none" stroke="#8a8a8a" stroke-width="2.8"/><rect x="3" y="14.5" width="22" height="16" rx="2.6" fill="#6e6e6e"/></svg>
<svg class="abs" style="left:2618px;top:15px;width:32px;height:32px" viewBox="0 0 48 48"><g fill="none" stroke="#6f6f6f" stroke-width="2.5"><path d="M24 3.5L3.5 19.5C3.5 22 44.5 22 44.5 19.5Z" stroke-linejoin="round" fill="#dedede"/><path d="M24 3.5L13 21M24 3.5L35 21M24 3.5V21M17 9H31M11 14.5H37"/><path d="M7 22C7 35 15 44 24 44C33 44 41 35 41 22" fill="#efefef"/><path d="M24 22V44M15 22C15 32 19 41 24 44M33 22C33 32 29 41 24 44M8.5 29.5H39.5M12.5 37H35.5"/></g></svg>
<svg class="abs" style="left:2831px;top:15.5px;width:34px;height:32px" viewBox="0 0 34 32"><path d="M16.5 1C25.5 1 33 7 33 14.5C33 18.5 31 22 27.5 24.3C27.8 26.8 29.2 29 31.5 30.8C27.5 31 23.5 29.6 20.5 27.6C19.2 27.9 17.8 28 16.5 28C7.5 28 1 22 1 14.5C1 7 7.5 1 16.5 1Z" fill="#696969"/></svg>
</div>
</div>
</div>
</body></html>
